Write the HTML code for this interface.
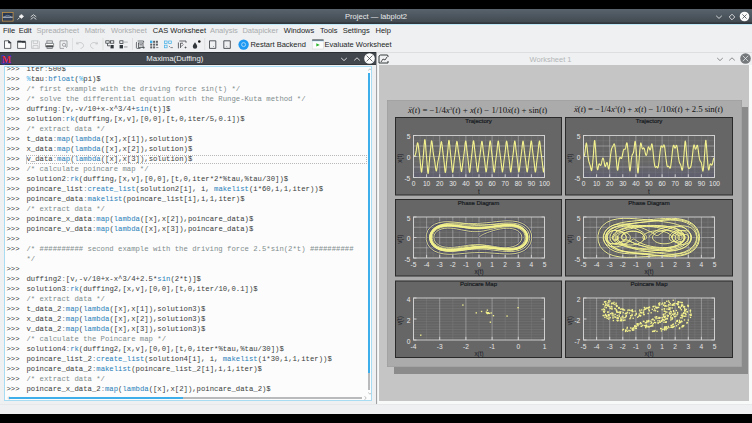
<!DOCTYPE html>
<html><head><meta charset="utf-8"><style>
*{margin:0;padding:0;box-sizing:border-box}
html,body{width:752px;height:423px;overflow:hidden;background:#000;font-family:"Liberation Sans",sans-serif}
.abs{position:absolute}
#title{position:absolute;left:0;top:9px;width:752px;height:15px;background:linear-gradient(#58636c,#434b52 85%,#30363b 93%,#30363b)}
#title .t{position:absolute;left:0;width:752px;top:3.3px;text-align:center;color:#e8eaeb;font-size:7.6px;line-height:10px;padding-left:0}
#blue{position:absolute;left:0;top:24px;width:752px;height:1px;background:#bde9f8}
#menu{position:absolute;left:0;top:25px;width:752px;height:379px;background:#eff0f1}
.mi{position:absolute;top:26px;font-size:7.5px;line-height:9px;color:#232627;white-space:nowrap}
.mi.d{color:#a8acae}
.tb{position:absolute;top:39px;width:10px;height:11px}
.sep{position:absolute;top:38px;width:1px;height:12px;background:#d4d6d8}
#lhead{position:absolute;left:0;top:52px;width:376px;height:13px;background:#41474d;border-top:1px solid #2b3035;border-bottom:1px solid #33383d}
#lhead .t{position:absolute;left:146.3px;top:1.2px;color:#eceef0;font-size:7.8px;line-height:9px}
#code{position:absolute;left:4px;top:66px;width:367.5px;height:334.5px;background:#fcfcfc;border:1px solid #a8dcf2;overflow:hidden}
.ln{position:absolute;font-family:"Liberation Mono",monospace;font-size:7.27px;line-height:10px;white-space:pre;color:#3a3d40}
.pr{left:1.5px}
.cd{left:21.5px}
.cm{color:#7f8c8d}
.fn{color:#2980b9}
.pc{color:#3daee9}
.op{color:#8a9095}
#rhead{position:absolute;left:377px;top:52px;width:375px;height:13px;background:#eff0f1;border-top:1px solid #dcdee0}
#rhead .t{position:absolute;left:-14px;width:375px;top:1.5px;text-align:center;color:#b4b7b9;font-size:7.5px;line-height:9px}
#canvas{position:absolute;left:379px;top:65px;width:370.3px;height:336px;background:#c5c5c5}
#split{position:absolute;left:376px;top:52px;width:1px;height:352px;background:#a0a2a4}
#page{position:absolute;left:387px;top:100px;width:354.5px;height:267px;background:#ababab;box-shadow:inset 0 0 0 0.5px #9c9c9c}
#shadow1{position:absolute;left:741px;top:107px;width:7px;height:266.8px;background:#8b8b8b}
#shadow2{position:absolute;left:393.7px;top:366px;width:354.3px;height:7.8px;background:#8b8b8b}
#status{position:absolute;left:0;top:404px;width:752px;height:10px;background:#eff0f1;border-top:1px solid #e6e8ea}
#rframe{position:absolute;left:377.5px;top:65px;width:374.5px;height:339px;background:#f8f9f9}
.pt{font-family:"Liberation Sans",sans-serif;font-size:6px;fill:#181c22;stroke:#181c22;stroke-width:0.22px}
.tk{font-family:"Liberation Sans",sans-serif;font-size:6.6px;fill:#e8e8e8}
.at{font-family:"Liberation Sans",sans-serif;font-size:6.4px;fill:#1c2026}
.fx{position:absolute;font-family:"Liberation Serif",serif;font-size:8.8px;line-height:10px;color:#141414;white-space:nowrap;-webkit-text-stroke:0px #222}
.fx sup{font-size:5px;vertical-align:0;position:relative;top:-3px}
.fx i{font-weight:normal}

</style></head><body>
<div id="title">
 <svg class="abs" style="left:2px;top:3px" width="11.5" height="9.5" viewBox="0 0 11.5 9.5"><rect x="0.4" y="0.4" width="10.7" height="8.7" fill="#2a3850" stroke="#c4934a" stroke-width="0.8"/><path d="M2.2 5 Q5.75 1.6 9.3 5" fill="none" stroke="#8fa4bd" stroke-width="0.6"/><line x1="0.8" y1="5.2" x2="10.7" y2="5.2" stroke="#dfe8f0" stroke-width="0.9"/><line x1="2" y1="7" x2="9.5" y2="7" stroke="#56667a" stroke-width="0.5"/></svg>
 <svg class="abs" style="left:17px;top:4.5px" width="7" height="6" viewBox="0 0 7 6"><path d="M0.6 5.6 L2.6 3.6" stroke="#f4f4f4" stroke-width="0.8"/><path d="M2 2.4 L4.4 0.4 L6.6 2.2 L4.6 4.4 Z" fill="#f4f4f4" stroke="#f4f4f4" stroke-width="0.6"/></svg>
 <svg class="abs" style="left:29.5px;top:4.5px" width="7" height="6" viewBox="0 0 7 6"><path d="M0.7 2.9 L3.5 0.7 L6.3 2.9 M0.7 5.4 L3.5 3.2 L6.3 5.4" stroke="#f0f0f0" stroke-width="0.8" fill="none"/></svg>
 <div class="t">Project — labplot2</div>
 <svg class="abs" style="left:715px;top:3.5px" width="8" height="8" viewBox="0 0 8 8"><path d="M1.2 2.8 L4 5.4 L6.8 2.8" stroke="#f4f4f4" stroke-width="0.8" fill="none"/></svg>
 <svg class="abs" style="left:728px;top:3.5px" width="8" height="8" viewBox="0 0 8 8"><path d="M4 1.2 L6.8 4 L4 6.8 L1.2 4 Z" stroke="#f4f4f4" stroke-width="0.8" fill="none"/></svg>
 <svg class="abs" style="left:739px;top:2px" width="11" height="11" viewBox="0 0 11 11"><circle cx="5.5" cy="5.5" r="4.8" fill="#fcfcfc"/><path d="M3.4 3.4 L7.6 7.6 M7.6 3.4 L3.4 7.6" stroke="#3b4248" stroke-width="0.75"/></svg>
</div>
<div id="blue"></div>
<div id="menu"></div>
<div class="mi" style="left:3px">File</div>
<div class="mi" style="left:18.7px">Edit</div>
<div class="mi d" style="left:36.6px">Spreadsheet</div>
<div class="mi d" style="left:84.7px">Matrix</div>
<div class="mi d" style="left:111px">Worksheet</div>
<div class="mi" style="left:152.8px">CAS Worksheet</div>
<div class="mi d" style="left:209.9px">Analysis</div>
<div class="mi d" style="left:242.4px">Datapicker</div>
<div class="mi" style="left:283.8px">Windows</div>
<div class="mi" style="left:320px">Tools</div>
<div class="mi" style="left:342.7px">Settings</div>
<div class="mi" style="left:375.5px">Help</div>
<svg class="abs" style="left:0;top:36px" width="400" height="16" viewBox="0 36 400 16">
 <g fill="none" stroke="#31363b" stroke-width="0.75">
  <!-- new doc -->
  <path d="M4.5 40.8 H9 L10.8 42.6 V48.4 H4.5 Z" fill="#fcfcfc"/>
  <path d="M8.6 40.8 L10.8 43 H8.6 Z" fill="#31363b"/>
  <!-- folder -->
  <path d="M17.6 41.2 H21 L22 42.2 H25.6 V48.4 H17.6 Z" fill="#fcfcfc"/>
  <rect x="17.6" y="40.8" width="8" height="1.8" fill="#31363b" stroke="none"/>
  <!-- save gray -->
  <g stroke="#bdc0c2"><path d="M31.5 40.8 H38.4 L39.4 41.8 V48.4 H31.5 Z"/><path d="M33.3 40.8 V43.6 H37.5 V40.8 M33 48.4 V45.6 H38 V48.4"/></g>
  <!-- print -->
  <rect x="46.9" y="40.9" width="5.4" height="2.3" stroke="#6a6e72"/>
  <path d="M45.6 43.4 H53.6 V46.8 H45.6 Z" fill="#fcfcfc" stroke="#6a6e72"/>
  <rect x="46.2" y="45.4" width="6.8" height="1.5" fill="#232627" stroke="none"/>
  <rect x="47" y="46.9" width="5.3" height="1.5" stroke="#6a6e72"/>
  <!-- print preview gray -->
  <g stroke="#8a8e91"><path d="M60 40.8 H67 V47 M60 40.8 V48.4 H64"/><circle cx="64" cy="44.8" r="1.6"/><path d="M65.2 46 L66.8 47.8"/></g>
  <!-- undo / redo gray -->
  <g stroke="#bdc0c2"><path d="M77 41.8 L76.6 44 L78.8 43.8 M76.8 43.8 C79 41.5 83.5 42.5 83.5 45.5 C83.5 47.2 82 48.4 80.5 48.4"/>
  <path d="M97 41.8 L97.4 44 L95.2 43.8 M97.2 43.8 C95 41.5 90.5 42.5 90.5 45.5 C90.5 47.2 92 48.4 93.5 48.4"/></g>
  <!-- 8 -->
  <rect x="105.8" y="40.8" width="3.4" height="2.4"/><rect x="110.4" y="40.8" width="3.4" height="2.4"/>
  <path d="M107.5 43.4 V45.8 H110"/>
  <rect x="110.5" y="45" width="3.2" height="3.4" fill="#31363b" stroke="none"/>
  <!-- 9 -->
  <rect x="119.8" y="40.8" width="3.2" height="2.6"/><path d="M123.5 42.1 H127.8" stroke="#bdc0c2" stroke-width="1.2"/>
  <rect x="119.6" y="45" width="3.4" height="3.4" fill="#31363b" stroke="none"/><rect x="124" y="46" width="3.5" height="1.8" fill="#bdc0c2" stroke="none"/>
  <!-- 10 -->
  <path d="M137.6 41 H143.6 V42.6 M137 42 Q136.4 42.2 136.4 43 V47.6 Q136.4 48.4 137.2 48.4 H140.5" stroke-width="0.7"/>
  <rect x="138.6" y="43" width="4.4" height="4.4" stroke-width="0.7"/><path d="M139.4 44.5 H142.2 M139.4 45.9 H142.2" stroke-width="0.5"/>
  <path d="M142.6 47.6 H144.8 M143.7 46.5 V48.7" stroke-width="0.6"/>
  <!-- 11 -->
  <rect x="150" y="40.6" width="2.4" height="2.4" fill="#3daee9" stroke="none"/>
  <g fill="#5d6165" stroke="none"><rect x="153.1" y="40.8" width="2" height="2"/><rect x="155.9" y="40.8" width="2" height="2"/><rect x="150.2" y="43.6" width="2" height="2"/><rect x="153.1" y="43.6" width="2" height="2"/><rect x="155.9" y="43.6" width="2" height="2"/><rect x="150.2" y="46.4" width="2" height="2"/><rect x="153.1" y="46.4" width="2" height="2"/></g>
  <path d="M156.2 47.6 H158.4" stroke-width="0.6"/>
  <!-- 12 blue -->
  <g stroke="#3daee9" stroke-width="0.7"><rect x="164.5" y="41" width="2.6" height="2.6"/><rect x="168.7" y="41" width="2.6" height="2.6"/><rect x="164.5" y="45.2" width="2.6" height="2.6"/></g>
  <path d="M169.2 46.2 L170.2 47.2 M170.6 47.6 H172.8" stroke-width="0.6"/>
  <!-- 13 -->
  <path d="M178.4 42.5 V48.4 M179.4 41 H186 V42.8" /><path d="M180.5 48 V43.2 H183" /><path d="M181 46.5 L183.5 44.5" stroke-width="0.6"/><path d="M184.5 47.5 H186.6 M185.5 46.5 V48.5" stroke-width="0.6"/>
  <!-- 14 drop -->
  <path d="M195 42.3 C193.5 44.5 192.8 45.5 192.8 46.5 A2.2 2.2 0 0 0 197.2 46.5 C197.2 45.5 196.5 44.5 195 42.3 Z" fill="#31363b" stroke="none"/>
  <circle cx="199.3" cy="41.5" r="1.3" fill="#111" stroke="none"/>
  <!-- 15 16 -->
  <path d="M209.5 40.8 H215.8 V48.4 H209.5 Z" stroke-width="0.8"/><path d="M213 47 L213.8 46.2" stroke-width="0.5"/>
  <path d="M223.8 40.8 H230.3 V48.4 H223.8 Z" stroke-width="0.8"/><path d="M226.5 46.4 L227.3 47.2" stroke-width="0.5"/>
 </g>
 <!-- separators -->
 <g fill="#d9dbdd"><rect x="72" y="38" width="0.8" height="12"/><rect x="102.6" y="38" width="0.8" height="12"/><rect x="132.1" y="38" width="0.8" height="12"/><rect x="204.4" y="38" width="0.8" height="12"/></g>
 <!-- restart -->
 <circle cx="243.6" cy="44.6" r="5.2" fill="#1d99f3"/><circle cx="243.6" cy="44.6" r="2" fill="none" stroke="#d8ecfb" stroke-width="0.7"/>
 <!-- evaluate -->
 <rect x="312.2" y="40.5" width="11.4" height="8.5" fill="#fcfcfc" stroke="#d0d2d4" stroke-width="0.5"/>
 <rect x="312.2" y="39.5" width="11.4" height="1.2" fill="#232a31"/>
 <rect x="312.2" y="40.7" width="11.4" height="0.6" fill="#9fd6f0"/>
 <path d="M316.3 43.2 L319.8 44.9 L316.3 46.6 Z" fill="#2cb52c"/>
</svg>
<div class="mi" style="top:39.8px;left:250.4px">Restart Backend</div>
<div class="mi" style="top:39.8px;left:324.6px">Evaluate Worksheet</div>

<div id="lhead">
 <svg class="abs" style="left:1px;top:1px" width="11" height="11" viewBox="0 0 11 11"><text x="5.6" y="9" text-anchor="middle" font-family="Liberation Serif" font-weight="bold" font-size="10" fill="#e2332b" stroke="#2b2bd0" stroke-width="0.9" paint-order="stroke">M</text><path d="M1 2 L2.5 1.5 M9 1.8 L10.2 2.5 M1.5 9.8 L3.8 10.3" stroke="#3a3ae0" stroke-width="0.8"/></svg>
 <div class="t">Maxima(Duffing)</div>
 <svg class="abs" style="left:340px;top:2px" width="8" height="8" viewBox="0 0 8 8"><path d="M1.2 3 L4 5.6 L6.8 3" stroke="#f0f0f0" stroke-width="0.85" fill="none"/></svg>
 <svg class="abs" style="left:352.5px;top:2px" width="8" height="8" viewBox="0 0 8 8"><path d="M1.2 5.4 L4 2.8 L6.8 5.4" stroke="#f0f0f0" stroke-width="0.85" fill="none"/></svg>
 <svg class="abs" style="left:363.7px;top:0.4px" width="11" height="11" viewBox="0 0 11 11"><circle cx="5.5" cy="5.5" r="5.3" fill="#fcfcfc"/><path d="M2.6 2.6 L8.4 8.4 M8.4 2.6 L2.6 8.4" stroke="#31363b" stroke-width="0.7"/></svg>
</div>
<div id="code">
<div class="ln pr" style="top:-2.7px">&gt;&gt;&gt;</div><div class="ln cd" style="top:-2.7px">iter<span class="op">:</span>500$</div><div class="ln pr" style="top:7.3px">&gt;&gt;&gt;</div><div class="ln cd" style="top:7.3px"><span class="pc">%</span>tau<span class="op">:</span><span class="fn">bfloat</span>(<span class="pc">%</span>pi)$</div><div class="ln pr" style="top:17.3px">&gt;&gt;&gt;</div><div class="ln cd" style="top:17.3px"><span class="cm">/* first example with the driving force sin(t) */</span></div><div class="ln pr" style="top:27.3px">&gt;&gt;&gt;</div><div class="ln cd" style="top:27.3px"><span class="cm">/* solve the differential equation with the Runge-Kuta method */</span></div><div class="ln pr" style="top:37.3px">&gt;&gt;&gt;</div><div class="ln cd" style="top:37.3px">duffing<span class="op">:</span>[v,-v/10+x-x^3/4+<span class="fn">sin</span>(t)]$</div><div class="ln pr" style="top:47.3px">&gt;&gt;&gt;</div><div class="ln cd" style="top:47.3px">solution<span class="op">:</span><span class="fn">rk</span>(duffing,[x,v],[0,0],[t,0,iter/5,0.1])$</div><div class="ln pr" style="top:57.3px">&gt;&gt;&gt;</div><div class="ln cd" style="top:57.3px"><span class="cm">/* extract data */</span></div><div class="ln pr" style="top:67.3px">&gt;&gt;&gt;</div><div class="ln cd" style="top:67.3px">t_data<span class="op">:</span><span class="fn">map</span>(<span class="fn">lambda</span>([x],x[1]),solution)$</div><div class="ln pr" style="top:77.3px">&gt;&gt;&gt;</div><div class="ln cd" style="top:77.3px">x_data<span class="op">:</span><span class="fn">map</span>(<span class="fn">lambda</span>([x],x[2]),solution)$</div><div class="ln pr" style="top:87.3px">&gt;&gt;&gt;</div><div class="ln cd" style="top:87.3px">v_data<span class="op">:</span><span class="fn">map</span>(<span class="fn">lambda</span>([x],x[3]),solution)$</div><div class="ln pr" style="top:97.3px">&gt;&gt;&gt;</div><div class="ln cd" style="top:97.3px"><span class="cm">/* calculate poincare map */</span></div><div class="ln pr" style="top:107.3px">&gt;&gt;&gt;</div><div class="ln cd" style="top:107.3px">solution2<span class="op">:</span><span class="fn">rk</span>(duffing,[x,v],[0,0],[t,0,iter*2*%tau,%tau/30])$</div><div class="ln pr" style="top:117.3px">&gt;&gt;&gt;</div><div class="ln cd" style="top:117.3px">poincare_list<span class="op">:</span><span class="fn">create_list</span>(solution2[i], i, <span class="fn">makelist</span>(i*60,i,1,iter))$</div><div class="ln pr" style="top:127.3px">&gt;&gt;&gt;</div><div class="ln cd" style="top:127.3px">poincare_data<span class="op">:</span><span class="fn">makelist</span>(poincare_list[i],i,1,iter)$</div><div class="ln pr" style="top:137.3px">&gt;&gt;&gt;</div><div class="ln cd" style="top:137.3px"><span class="cm">/* extract data */</span></div><div class="ln pr" style="top:147.3px">&gt;&gt;&gt;</div><div class="ln cd" style="top:147.3px">poincare_x_data<span class="op">:</span><span class="fn">map</span>(<span class="fn">lambda</span>([x],x[2]),poincare_data)$</div><div class="ln pr" style="top:157.3px">&gt;&gt;&gt;</div><div class="ln cd" style="top:157.3px">poincare_v_data<span class="op">:</span><span class="fn">map</span>(<span class="fn">lambda</span>([x],x[3]),poincare_data)$</div><div class="ln pr" style="top:167.3px">&gt;&gt;&gt;</div><div class="ln cd" style="top:167.3px"></div><div class="ln pr" style="top:177.3px">&gt;&gt;&gt;</div><div class="ln cd" style="top:177.3px"><span class="cm">/* ########## second example with the driving force 2.5*sin(2*t) ##########</span></div><div class="ln cd" style="top:187.3px"><span class="cm">*/</span></div><div class="ln pr" style="top:197.3px">&gt;&gt;&gt;</div><div class="ln cd" style="top:197.3px"></div><div class="ln pr" style="top:207.3px">&gt;&gt;&gt;</div><div class="ln cd" style="top:207.3px">duffing2<span class="op">:</span>[v,-v/10+x-x^3/4+2.5*<span class="fn">sin</span>(2*t)]$</div><div class="ln pr" style="top:217.3px">&gt;&gt;&gt;</div><div class="ln cd" style="top:217.3px">solution3<span class="op">:</span><span class="fn">rk</span>(duffing2,[x,v],[0,0],[t,0,iter/10,0.1])$</div><div class="ln pr" style="top:227.3px">&gt;&gt;&gt;</div><div class="ln cd" style="top:227.3px"><span class="cm">/* extract data */</span></div><div class="ln pr" style="top:237.3px">&gt;&gt;&gt;</div><div class="ln cd" style="top:237.3px">t_data_2<span class="op">:</span><span class="fn">map</span>(<span class="fn">lambda</span>([x],x[1]),solution3)$</div><div class="ln pr" style="top:247.3px">&gt;&gt;&gt;</div><div class="ln cd" style="top:247.3px">x_data_2<span class="op">:</span><span class="fn">map</span>(<span class="fn">lambda</span>([x],x[2]),solution3)$</div><div class="ln pr" style="top:257.3px">&gt;&gt;&gt;</div><div class="ln cd" style="top:257.3px">v_data_2<span class="op">:</span><span class="fn">map</span>(<span class="fn">lambda</span>([x],x[3]),solution3)$</div><div class="ln pr" style="top:267.3px">&gt;&gt;&gt;</div><div class="ln cd" style="top:267.3px"><span class="cm">/* calculate the Poincare map */</span></div><div class="ln pr" style="top:277.3px">&gt;&gt;&gt;</div><div class="ln cd" style="top:277.3px">solution4<span class="op">:</span><span class="fn">rk</span>(duffing2,[x,v],[0,0],[t,0,iter*%tau,%tau/30])$</div><div class="ln pr" style="top:287.3px">&gt;&gt;&gt;</div><div class="ln cd" style="top:287.3px">poincare_list_2<span class="op">:</span><span class="fn">create_list</span>(solution4[i], i, <span class="fn">makelist</span>(i*30,i,1,iter))$</div><div class="ln pr" style="top:297.3px">&gt;&gt;&gt;</div><div class="ln cd" style="top:297.3px">poincare_data_2<span class="op">:</span><span class="fn">makelist</span>(poincare_list_2[i],i,1,iter)$</div><div class="ln pr" style="top:307.3px">&gt;&gt;&gt;</div><div class="ln cd" style="top:307.3px"><span class="cm">/* extract data */</span></div><div class="ln pr" style="top:317.3px">&gt;&gt;&gt;</div><div class="ln cd" style="top:317.3px">poincare_x_data_2<span class="op">:</span><span class="fn">map</span>(<span class="fn">lambda</span>([x],x[2]),poincare_data_2)$</div>
<div class="abs" style="left:20.5px;top:88px;width:341px;height:9px;border:1px dotted #b8b8b8;border-left:1px solid #c8c8c8"></div>
<div class="abs" style="left:363.3px;top:6px;width:2px;height:299.5px;background:#3daee9"></div>
<div class="abs" style="left:363.3px;top:305.5px;width:2px;height:17.5px;background:#b8babc"></div>
<svg class="abs" style="left:361.5px;top:0px" width="6" height="5" viewBox="0 0 6 5"><path d="M1.2 3.4 L3 1.8 L4.8 3.4" stroke="#a0a2a4" stroke-width="0.7" fill="none"/></svg>
<svg class="abs" style="left:361.5px;top:324px" width="6" height="5" viewBox="0 0 6 5"><path d="M1.2 1.6 L3 3.2 L4.8 1.6" stroke="#a0a2a4" stroke-width="0.7" fill="none"/></svg>
<div class="abs" style="left:3.75px;top:329.5px;width:174px;height:2px;background:#3daee9"></div>
<div class="abs" style="left:177.75px;top:329.5px;width:179px;height:2px;background:#b8babc"></div>
<svg class="abs" style="left:358px;top:327.5px" width="5" height="6" viewBox="0 0 5 6"><path d="M1.6 1.2 L3.2 3 L1.6 4.8" stroke="#a0a2a4" stroke-width="0.7" fill="none"/></svg>
<svg class="abs" style="left:0.5px;top:327.5px" width="5" height="6" viewBox="0 0 5 6"><path d="M3.4 1.2 L1.8 3 L3.4 4.8" stroke="#c0c2c4" stroke-width="0.7" fill="none"/></svg>
</div>
<div id="rhead">
 <svg class="abs" style="left:1px;top:1px" width="11" height="10" viewBox="0 0 11 10"><path d="M1 9 V2 L2.5 1 H9.5 L10 2 V3 M1 9 H10 V7" stroke="#232627" stroke-width="0.9" fill="none"/><path d="M3 8 L5 5 L7 6 L9 3" stroke="#232627" stroke-width="0.8" fill="none"/></svg>
 <div class="t">Worksheet 1</div>
 <svg class="abs" style="left:338.5px;top:2px" width="8" height="8" viewBox="0 0 8 8"><path d="M1.2 3 L4 5.6 L6.8 3" stroke="#6e7275" stroke-width="0.8" fill="none"/></svg>
 <svg class="abs" style="left:351px;top:2px" width="8" height="8" viewBox="0 0 8 8"><path d="M1.2 5.4 L4 2.8 L6.8 5.4" stroke="#6e7275" stroke-width="0.8" fill="none"/></svg>
 <svg class="abs" style="left:362.5px;top:0.4px" width="11" height="11" viewBox="0 0 11 11"><circle cx="5.5" cy="5.5" r="5.3" fill="#76797c"/><path d="M2.8 2.8 L8.2 8.2 M8.2 2.8 L2.8 8.2" stroke="#f4f4f4" stroke-width="0.7"/></svg>
</div>
<div id="split"></div>
<div id="rframe"></div>
<div id="canvas"></div>
<div id="shadow1"></div>
<div id="shadow2"></div>
<div id="page"></div>
<div class="fx" id="fx1" style="left:408px;top:105.3px"><i>ẍ</i>(<i>t</i>) = −1/4<i>x</i><sup>3</sup>(<i>t</i>) + <i>x</i>(<i>t</i>) − 1/10<i>ẋ</i>(<i>t</i>) + sin(<i>t</i>)</div>
<div class="fx" id="fx2" style="left:574px;top:104.3px;letter-spacing:-0.08px"><i>ẍ</i>(<i>t</i>) = −1/4<i>x</i><sup>3</sup>(<i>t</i>) + <i>x</i>(<i>t</i>) − 1/10<i>ẋ</i>(<i>t</i>) + 2.5 sin(<i>t</i>)</div>
<svg class="abs" style="left:0;top:0" width="752" height="423" viewBox="0 0 752 423"><defs><clipPath id="c0"><rect x="413.5" y="135.5" width="131.0" height="42.0"/></clipPath><clipPath id="c1"><rect x="413.5" y="217.0" width="131.0" height="41.0"/></clipPath><clipPath id="c2"><rect x="413.5" y="298.0" width="131.0" height="42.0"/></clipPath><clipPath id="c3"><rect x="583.5" y="135.5" width="131.0" height="42.0"/></clipPath><clipPath id="c4"><rect x="583.5" y="217.0" width="131.0" height="41.0"/></clipPath><clipPath id="c5"><rect x="583.5" y="298.0" width="131.0" height="42.0"/></clipPath><linearGradient id="tg" x1="0" y1="135.5" x2="0" y2="177.5" gradientUnits="userSpaceOnUse"><stop offset="0" stop-color="#e8e890" stop-opacity="0.2"/><stop offset="0.5" stop-color="#a0a070" stop-opacity="0.1"/><stop offset="1" stop-color="#3c3cb4" stop-opacity="0.15"/></linearGradient></defs><rect x="395.5" y="117.5" width="166.0" height="77.5" fill="#666666" stroke="#2a2a2a" stroke-width="1"/><text x="478.5" y="122.8" class="pt" text-anchor="middle">Trajectory</text><rect x="395.5" y="199.5" width="166.0" height="76.5" fill="#666666" stroke="#2a2a2a" stroke-width="1"/><text x="478.5" y="204.8" class="pt" text-anchor="middle">Phase Diagram</text><rect x="395.5" y="281.0" width="166.0" height="76.5" fill="#666666" stroke="#2a2a2a" stroke-width="1"/><text x="478.5" y="286.3" class="pt" text-anchor="middle">Poincare Map</text><rect x="565.5" y="117.5" width="167.0" height="77.5" fill="#666666" stroke="#2a2a2a" stroke-width="1"/><text x="649.0" y="122.8" class="pt" text-anchor="middle">Trajectory</text><rect x="565.5" y="199.5" width="167.0" height="76.5" fill="#666666" stroke="#2a2a2a" stroke-width="1"/><text x="649.0" y="204.8" class="pt" text-anchor="middle">Phase Diagram</text><rect x="565.5" y="281.0" width="167.0" height="76.5" fill="#666666" stroke="#2a2a2a" stroke-width="1"/><text x="649.0" y="286.3" class="pt" text-anchor="middle">Poincare Map</text><rect x="413.5" y="135.5" width="131.0" height="42.0" fill="#646464"/><line x1="420.05" y1="135.50" x2="420.05" y2="177.50" stroke="#7b7b7b" stroke-width="0.50"/><line x1="426.60" y1="135.50" x2="426.60" y2="177.50" stroke="#7b7b7b" stroke-width="0.50"/><line x1="433.15" y1="135.50" x2="433.15" y2="177.50" stroke="#7b7b7b" stroke-width="0.50"/><line x1="446.25" y1="135.50" x2="446.25" y2="177.50" stroke="#7b7b7b" stroke-width="0.50"/><line x1="452.80" y1="135.50" x2="452.80" y2="177.50" stroke="#7b7b7b" stroke-width="0.50"/><line x1="459.35" y1="135.50" x2="459.35" y2="177.50" stroke="#7b7b7b" stroke-width="0.50"/><line x1="472.45" y1="135.50" x2="472.45" y2="177.50" stroke="#7b7b7b" stroke-width="0.50"/><line x1="479.00" y1="135.50" x2="479.00" y2="177.50" stroke="#7b7b7b" stroke-width="0.50"/><line x1="485.55" y1="135.50" x2="485.55" y2="177.50" stroke="#7b7b7b" stroke-width="0.50"/><line x1="498.65" y1="135.50" x2="498.65" y2="177.50" stroke="#7b7b7b" stroke-width="0.50"/><line x1="505.20" y1="135.50" x2="505.20" y2="177.50" stroke="#7b7b7b" stroke-width="0.50"/><line x1="511.75" y1="135.50" x2="511.75" y2="177.50" stroke="#7b7b7b" stroke-width="0.50"/><line x1="524.85" y1="135.50" x2="524.85" y2="177.50" stroke="#7b7b7b" stroke-width="0.50"/><line x1="531.40" y1="135.50" x2="531.40" y2="177.50" stroke="#7b7b7b" stroke-width="0.50"/><line x1="537.95" y1="135.50" x2="537.95" y2="177.50" stroke="#7b7b7b" stroke-width="0.50"/><line x1="413.50" y1="172.25" x2="544.50" y2="172.25" stroke="#7b7b7b" stroke-width="0.50"/><line x1="413.50" y1="161.75" x2="544.50" y2="161.75" stroke="#7b7b7b" stroke-width="0.50"/><line x1="413.50" y1="151.25" x2="544.50" y2="151.25" stroke="#7b7b7b" stroke-width="0.50"/><line x1="413.50" y1="140.75" x2="544.50" y2="140.75" stroke="#7b7b7b" stroke-width="0.50"/><line x1="413.50" y1="135.50" x2="413.50" y2="177.50" stroke="#b4b4b4" stroke-width="0.60"/><line x1="439.70" y1="135.50" x2="439.70" y2="177.50" stroke="#b4b4b4" stroke-width="0.60"/><line x1="465.90" y1="135.50" x2="465.90" y2="177.50" stroke="#b4b4b4" stroke-width="0.60"/><line x1="492.10" y1="135.50" x2="492.10" y2="177.50" stroke="#b4b4b4" stroke-width="0.60"/><line x1="518.30" y1="135.50" x2="518.30" y2="177.50" stroke="#b4b4b4" stroke-width="0.60"/><line x1="544.50" y1="135.50" x2="544.50" y2="177.50" stroke="#b4b4b4" stroke-width="0.60"/><line x1="413.50" y1="156.50" x2="544.50" y2="156.50" stroke="#b4b4b4" stroke-width="0.60"/><line x1="413.50" y1="167.00" x2="544.50" y2="167.00" stroke="#b4b4b4" stroke-width="0.60"/><line x1="413.50" y1="146.00" x2="544.50" y2="146.00" stroke="#b4b4b4" stroke-width="0.60"/><g clip-path="url(#c0)"><polygon points="413.5,156.5 413.6,156.5 413.8,156.5 413.9,156.5 414.0,156.5 414.2,156.4 414.3,156.4 414.4,156.3 414.5,156.1 414.7,156.0 414.8,155.8 414.9,155.6 415.1,155.3 415.2,155.0 415.3,154.6 415.5,154.2 415.6,153.7 415.7,153.2 415.9,152.6 416.0,151.9 416.1,151.2 416.3,150.4 416.4,149.5 416.5,148.6 416.6,147.7 416.8,146.8 416.9,145.8 417.0,145.0 417.2,144.2 417.3,143.5 417.4,143.1 417.6,142.8 417.7,142.8 417.8,143.0 418.0,143.4 418.1,144.0 418.2,144.7 418.3,145.6 418.5,146.6 418.6,147.6 418.7,148.7 418.9,149.8 419.0,150.8 419.1,151.9 419.3,153.0 419.4,154.0 419.5,155.1 419.7,156.2 419.8,157.3 419.9,158.4 420.1,159.6 420.2,160.9 420.3,162.2 420.4,163.6 420.6,165.0 420.7,166.4 420.8,167.8 421.0,169.1 421.1,170.3 421.2,171.2 421.4,171.9 421.5,172.2 421.6,172.1 421.8,171.6 421.9,170.8 422.0,169.8 422.1,168.5 422.3,167.1 422.4,165.7 422.5,164.2 422.7,162.7 422.8,161.3 422.9,159.8 423.1,158.4 423.2,157.0 423.3,155.5 423.5,154.0 423.6,152.5 423.7,150.9 423.8,149.2 424.0,147.5 424.1,145.8 424.2,144.1 424.4,142.6 424.5,141.3 424.6,140.3 424.8,139.7 424.9,139.6 425.0,140.0 425.2,140.8 425.3,141.9 425.4,143.4 425.6,145.0 425.7,146.6 425.8,148.3 425.9,150.0 426.1,151.6 426.2,153.2 426.3,154.8 426.5,156.3 426.6,157.9 426.7,159.4 426.9,161.0 427.0,162.7 427.1,164.4 427.3,166.1 427.4,167.8 427.5,169.4 427.6,170.9 427.8,172.1 427.9,173.0 428.0,173.4 428.2,173.4 428.3,172.9 428.4,172.0 428.6,170.8 428.7,169.3 428.8,167.7 429.0,166.1 429.1,164.5 429.2,162.9 429.4,161.5 429.5,160.0 429.6,158.7 429.7,157.3 429.9,156.0 430.0,154.7 430.1,153.5 430.3,152.1 430.4,150.8 430.5,149.4 430.7,148.0 430.8,146.7 430.9,145.3 431.1,144.0 431.2,142.8 431.3,141.9 431.4,141.2 431.6,140.8 431.7,140.8 431.8,141.1 432.0,141.8 432.1,142.7 432.2,143.7 432.4,144.9 432.5,146.2 432.6,147.4 432.8,148.7 432.9,149.8 433.0,150.9 433.1,151.9 433.3,152.9 433.4,153.8 433.5,154.6 433.7,155.4 433.8,156.2 433.9,156.9 434.1,157.6 434.2,158.4 434.3,159.1 434.5,159.9 434.6,160.7 434.7,161.5 434.9,162.4 435.0,163.4 435.1,164.3 435.2,165.3 435.4,166.4 435.5,167.4 435.6,168.3 435.8,169.2 435.9,169.9 436.0,170.5 436.2,170.8 436.3,171.0 436.4,170.9 436.6,170.5 436.7,170.0 436.8,169.2 436.9,168.4 437.1,167.5 437.2,166.5 437.3,165.6 437.5,164.6 437.6,163.7 437.7,162.9 437.9,162.1 438.0,161.3 438.1,160.6 438.3,159.9 438.4,159.3 438.5,158.7 438.7,158.1 438.8,157.5 438.9,156.9 439.0,156.3 439.2,155.6 439.3,155.0 439.4,154.3 439.6,153.5 439.7,152.7 439.8,151.9 440.0,150.9 440.1,150.0 440.2,148.9 440.4,147.8 440.5,146.7 440.6,145.6 440.7,144.5 440.9,143.6 441.0,142.8 441.1,142.1 441.3,141.8 441.4,141.7 441.5,141.9 441.7,142.3 441.8,143.0 441.9,143.9 442.1,144.9 442.2,146.0 442.3,147.2 442.5,148.3 442.6,149.5 442.7,150.6 442.8,151.7 443.0,152.8 443.1,153.8 443.2,154.9 443.4,155.9 443.5,157.0 443.6,158.1 443.8,159.2 443.9,160.3 444.0,161.6 444.2,162.9 444.3,164.2 444.4,165.6 444.5,167.0 444.7,168.4 444.8,169.6 444.9,170.7 445.1,171.6 445.2,172.2 445.3,172.4 445.5,172.2 445.6,171.7 445.7,170.9 445.9,169.8 446.0,168.5 446.1,167.2 446.2,165.8 446.4,164.4 446.5,163.0 446.6,161.7 446.8,160.4 446.9,159.1 447.0,157.9 447.2,156.6 447.3,155.4 447.4,154.1 447.6,152.8 447.7,151.4 447.8,150.0 448.0,148.6 448.1,147.1 448.2,145.6 448.3,144.2 448.5,142.8 448.6,141.7 448.7,140.9 448.9,140.4 449.0,140.3 449.1,140.6 449.3,141.2 449.4,142.2 449.5,143.4 449.7,144.8 449.8,146.2 449.9,147.6 450.0,149.0 450.2,150.4 450.3,151.7 450.4,153.0 450.6,154.2 450.7,155.4 450.8,156.6 451.0,157.8 451.1,159.0 451.2,160.2 451.4,161.4 451.5,162.7 451.6,164.1 451.8,165.5 451.9,166.8 452.0,168.2 452.1,169.4 452.3,170.6 452.4,171.4 452.5,172.0 452.7,172.3 452.8,172.2 452.9,171.8 453.1,171.0 453.2,170.0 453.3,168.9 453.5,167.6 453.6,166.4 453.7,165.1 453.8,163.8 454.0,162.6 454.1,161.5 454.2,160.4 454.4,159.4 454.5,158.4 454.6,157.5 454.8,156.5 454.9,155.6 455.0,154.7 455.2,153.7 455.3,152.8 455.4,151.8 455.6,150.7 455.7,149.6 455.8,148.4 455.9,147.3 456.1,146.1 456.2,145.0 456.3,143.9 456.5,142.9 456.6,142.2 456.7,141.7 456.9,141.4 457.0,141.5 457.1,141.8 457.3,142.4 457.4,143.2 457.5,144.1 457.6,145.2 457.8,146.3 457.9,147.4 458.0,148.5 458.2,149.6 458.3,150.6 458.4,151.5 458.6,152.4 458.7,153.3 458.8,154.1 459.0,154.9 459.1,155.6 459.2,156.4 459.4,157.2 459.5,157.9 459.6,158.8 459.7,159.6 459.9,160.5 460.0,161.5 460.1,162.5 460.3,163.5 460.4,164.6 460.5,165.8 460.7,166.9 460.8,168.0 460.9,169.1 461.1,170.0 461.2,170.8 461.3,171.3 461.4,171.5 461.6,171.5 461.7,171.1 461.8,170.5 462.0,169.7 462.1,168.8 462.2,167.7 462.4,166.6 462.5,165.4 462.6,164.3 462.8,163.2 462.9,162.1 463.0,161.1 463.1,160.1 463.3,159.2 463.4,158.2 463.5,157.3 463.7,156.4 463.8,155.4 463.9,154.5 464.1,153.5 464.2,152.4 464.3,151.3 464.5,150.1 464.6,148.9 464.7,147.6 464.9,146.3 465.0,145.1 465.1,143.9 465.2,142.8 465.4,141.9 465.5,141.3 465.6,141.0 465.8,141.1 465.9,141.4 466.0,142.1 466.2,143.0 466.3,144.0 466.4,145.2 466.6,146.5 466.7,147.8 466.8,149.0 466.9,150.3 467.1,151.4 467.2,152.6 467.3,153.7 467.5,154.8 467.6,155.9 467.7,156.9 467.9,158.0 468.0,159.1 468.1,160.3 468.3,161.5 468.4,162.8 468.5,164.1 468.7,165.4 468.8,166.8 468.9,168.1 469.0,169.4 469.2,170.5 469.3,171.4 469.4,172.0 469.6,172.3 469.7,172.2 469.8,171.8 470.0,171.0 470.1,170.0 470.2,168.9 470.4,167.6 470.5,166.3 470.6,164.9 470.7,163.6 470.9,162.4 471.0,161.2 471.1,160.0 471.3,158.9 471.4,157.8 471.5,156.7 471.7,155.7 471.8,154.6 471.9,153.5 472.1,152.3 472.2,151.1 472.3,149.8 472.4,148.5 472.6,147.2 472.7,145.9 472.8,144.6 473.0,143.4 473.1,142.3 473.2,141.5 473.4,141.0 473.5,140.8 473.6,141.0 473.8,141.5 473.9,142.2 474.0,143.2 474.2,144.4 474.3,145.6 474.4,146.9 474.5,148.2 474.7,149.4 474.8,150.6 474.9,151.7 475.1,152.8 475.2,153.8 475.3,154.8 475.5,155.8 475.6,156.8 475.7,157.7 475.9,158.7 476.0,159.7 476.1,160.8 476.2,161.9 476.4,163.1 476.5,164.3 476.6,165.5 476.8,166.7 476.9,168.0 477.0,169.1 477.2,170.1 477.3,171.0 477.4,171.5 477.6,171.8 477.7,171.8 477.8,171.5 478.0,170.9 478.1,170.0 478.2,169.0 478.3,167.9 478.5,166.7 478.6,165.5 478.7,164.3 478.9,163.2 479.0,162.1 479.1,161.1 479.3,160.1 479.4,159.2 479.5,158.3 479.7,157.4 479.8,156.5 479.9,155.6 480.0,154.7 480.2,153.8 480.3,152.8 480.4,151.8 480.6,150.7 480.7,149.6 480.8,148.4 481.0,147.2 481.1,146.0 481.2,144.8 481.4,143.7 481.5,142.8 481.6,142.0 481.8,141.5 481.9,141.3 482.0,141.4 482.1,141.7 482.3,142.4 482.4,143.2 482.5,144.3 482.7,145.4 482.8,146.6 482.9,147.7 483.1,148.9 483.2,150.0 483.3,151.1 483.5,152.1 483.6,153.1 483.7,154.1 483.8,155.0 484.0,155.9 484.1,156.9 484.2,157.8 484.4,158.7 484.5,159.7 484.6,160.8 484.8,161.9 484.9,163.0 485.0,164.3 485.2,165.5 485.3,166.8 485.4,168.0 485.6,169.1 485.7,170.2 485.8,171.0 485.9,171.6 486.1,171.9 486.2,171.9 486.3,171.5 486.5,170.9 486.6,170.0 486.7,168.9 486.9,167.8 487.0,166.5 487.1,165.3 487.3,164.1 487.4,162.9 487.5,161.8 487.6,160.7 487.8,159.6 487.9,158.6 488.0,157.6 488.2,156.6 488.3,155.6 488.4,154.6 488.6,153.5 488.7,152.4 488.8,151.2 489.0,150.0 489.1,148.8 489.2,147.5 489.3,146.2 489.5,144.9 489.6,143.7 489.7,142.6 489.9,141.8 490.0,141.2 490.1,140.9 490.3,141.0 490.4,141.4 490.5,142.1 490.7,143.0 490.8,144.1 490.9,145.3 491.1,146.6 491.2,147.9 491.3,149.1 491.4,150.3 491.6,151.5 491.7,152.6 491.8,153.7 492.0,154.7 492.1,155.8 492.2,156.8 492.4,157.8 492.5,158.9 492.6,159.9 492.8,161.1 492.9,162.2 493.0,163.5 493.1,164.8 493.3,166.1 493.4,167.4 493.5,168.6 493.7,169.8 493.8,170.7 493.9,171.5 494.1,172.0 494.2,172.1 494.3,171.9 494.5,171.4 494.6,170.6 494.7,169.6 494.9,168.4 495.0,167.2 495.1,165.9 495.2,164.7 495.4,163.4 495.5,162.3 495.6,161.2 495.8,160.1 495.9,159.0 496.0,158.0 496.2,157.1 496.3,156.1 496.4,155.1 496.6,154.1 496.7,153.0 496.8,152.0 496.9,150.8 497.1,149.6 497.2,148.4 497.3,147.1 497.5,145.9 497.6,144.6 497.7,143.5 497.9,142.5 498.0,141.7 498.1,141.2 498.3,141.1 498.4,141.2 498.5,141.6 498.6,142.3 498.8,143.3 498.9,144.4 499.0,145.6 499.2,146.8 499.3,148.0 499.4,149.2 499.6,150.3 499.7,151.4 499.8,152.5 500.0,153.5 500.1,154.4 500.2,155.4 500.4,156.3 500.5,157.2 500.6,158.2 500.7,159.2 500.9,160.2 501.0,161.3 501.1,162.4 501.3,163.5 501.4,164.7 501.5,166.0 501.7,167.2 501.8,168.4 501.9,169.5 502.1,170.5 502.2,171.2 502.3,171.7 502.4,171.9 502.6,171.7 502.7,171.3 502.8,170.5 503.0,169.6 503.1,168.5 503.2,167.4 503.4,166.2 503.5,165.0 503.6,163.8 503.8,162.6 503.9,161.6 504.0,160.5 504.2,159.5 504.3,158.6 504.4,157.6 504.5,156.7 504.7,155.7 504.8,154.8 504.9,153.8 505.1,152.8 505.2,151.7 505.3,150.6 505.5,149.4 505.6,148.1 505.7,146.9 505.9,145.6 506.0,144.4 506.1,143.3 506.2,142.4 506.4,141.7 506.5,141.2 506.6,141.1 506.8,141.3 506.9,141.8 507.0,142.5 507.2,143.5 507.3,144.6 507.4,145.8 507.6,147.0 507.7,148.3 507.8,149.4 508.0,150.6 508.1,151.7 508.2,152.8 508.3,153.8 508.5,154.8 508.6,155.7 508.7,156.7 508.9,157.7 509.0,158.7 509.1,159.7 509.3,160.8 509.4,162.0 509.5,163.2 509.7,164.4 509.8,165.7 509.9,166.9 510.0,168.2 510.2,169.4 510.3,170.4 510.4,171.2 510.6,171.8 510.7,172.0 510.8,171.9 511.0,171.5 511.1,170.8 511.2,169.9 511.4,168.8 511.5,167.6 511.6,166.3 511.8,165.1 511.9,163.9 512.0,162.7 512.1,161.5 512.3,160.5 512.4,159.4 512.5,158.4 512.7,157.4 512.8,156.4 512.9,155.4 513.1,154.4 513.2,153.3 513.3,152.3 513.5,151.1 513.6,149.9 513.7,148.7 513.8,147.4 514.0,146.1 514.1,144.8 514.2,143.7 514.4,142.6 514.5,141.8 514.6,141.2 514.8,141.0 514.9,141.1 515.0,141.5 515.2,142.2 515.3,143.1 515.4,144.2 515.5,145.4 515.7,146.6 515.8,147.9 515.9,149.1 516.1,150.3 516.2,151.4 516.3,152.5 516.5,153.5 516.6,154.5 516.7,155.5 516.9,156.5 517.0,157.5 517.1,158.5 517.3,159.5 517.4,160.6 517.5,161.7 517.6,162.9 517.8,164.1 517.9,165.3 518.0,166.6 518.2,167.9 518.3,169.1 518.4,170.1 518.6,171.0 518.7,171.6 518.8,171.9 519.0,171.9 519.1,171.6 519.2,171.0 519.3,170.1 519.5,169.1 519.6,167.9 519.7,166.7 519.9,165.5 520.0,164.3 520.1,163.1 520.3,161.9 520.4,160.9 520.5,159.8 520.7,158.8 520.8,157.9 520.9,156.9 521.1,156.0 521.2,155.0 521.3,154.0 521.4,153.0 521.6,151.9 521.7,150.8 521.8,149.6 522.0,148.4 522.1,147.1 522.2,145.8 522.4,144.6 522.5,143.5 522.6,142.5 522.8,141.8 522.9,141.3 523.0,141.1 523.1,141.2 523.3,141.7 523.4,142.4 523.5,143.3 523.7,144.4 523.8,145.6 523.9,146.8 524.1,148.0 524.2,149.2 524.3,150.4 524.5,151.5 524.6,152.5 524.7,153.5 524.9,154.5 525.0,155.5 525.1,156.4 525.2,157.4 525.4,158.3 525.5,159.3 525.6,160.4 525.8,161.5 525.9,162.6 526.0,163.8 526.2,165.1 526.3,166.3 526.4,167.6 526.6,168.8 526.7,169.9 526.8,170.8 526.9,171.5 527.1,171.8 527.2,171.9 527.3,171.7 527.5,171.1 527.6,170.3 527.7,169.3 527.9,168.2 528.0,167.0 528.1,165.8 528.3,164.5 528.4,163.4 528.5,162.2 528.6,161.1 528.8,160.1 528.9,159.1 529.0,158.1 529.2,157.1 529.3,156.2 529.4,155.2 529.6,154.2 529.7,153.2 529.8,152.1 530.0,150.9 530.1,149.8 530.2,148.5 530.4,147.3 530.5,146.0 530.6,144.7 530.7,143.6 530.9,142.6 531.0,141.8 531.1,141.2 531.3,141.0 531.4,141.1 531.5,141.6 531.7,142.3 531.8,143.2 531.9,144.3 532.1,145.5 532.2,146.7 532.3,148.0 532.4,149.2 532.6,150.3 532.7,151.5 532.8,152.5 533.0,153.6 533.1,154.6 533.2,155.5 533.4,156.5 533.5,157.5 533.6,158.5 533.8,159.5 533.9,160.6 534.0,161.7 534.2,162.9 534.3,164.1 534.4,165.4 534.5,166.7 534.7,167.9 534.8,169.1 534.9,170.2 535.1,171.1 535.2,171.7 535.3,172.0 535.5,171.9 535.6,171.6 535.7,170.9 535.9,170.1 536.0,169.0 536.1,167.8 536.2,166.6 536.4,165.4 536.5,164.1 536.6,163.0 536.8,161.8 536.9,160.7 537.0,159.7 537.2,158.7 537.3,157.7 537.4,156.7 537.6,155.8 537.7,154.8 537.8,153.7 538.0,152.7 538.1,151.6 538.2,150.4 538.3,149.2 538.5,148.0 538.6,146.7 538.7,145.4 538.9,144.2 539.0,143.1 539.1,142.2 539.3,141.5 539.4,141.1 539.5,141.0 539.7,141.3 539.8,141.8 539.9,142.7 540.0,143.7 540.2,144.8 540.3,146.0 540.4,147.3 540.6,148.5 540.7,149.7 540.8,150.8 541.0,151.9 541.1,153.0 541.2,154.0 541.4,154.9 541.5,155.9 541.6,156.9 541.7,157.8 541.9,158.8 542.0,159.9 542.1,160.9 542.3,162.1 542.4,163.3 542.5,164.5 542.7,165.7 542.8,167.0 542.9,168.2 543.1,169.4 543.2,170.4 543.3,171.2 543.5,171.7 543.6,171.9 543.7,171.8 543.8,171.4 544.0,170.7 544.1,169.8 544.2,168.7 544.4,167.5 544.5,166.3 544.5,177.5 413.5,177.5" fill="url(#tg)"/><polyline points="413.5,156.5 413.6,156.5 413.8,156.5 413.9,156.5 414.0,156.5 414.2,156.4 414.3,156.4 414.4,156.3 414.5,156.1 414.7,156.0 414.8,155.8 414.9,155.6 415.1,155.3 415.2,155.0 415.3,154.6 415.5,154.2 415.6,153.7 415.7,153.2 415.9,152.6 416.0,151.9 416.1,151.2 416.3,150.4 416.4,149.5 416.5,148.6 416.6,147.7 416.8,146.8 416.9,145.8 417.0,145.0 417.2,144.2 417.3,143.5 417.4,143.1 417.6,142.8 417.7,142.8 417.8,143.0 418.0,143.4 418.1,144.0 418.2,144.7 418.3,145.6 418.5,146.6 418.6,147.6 418.7,148.7 418.9,149.8 419.0,150.8 419.1,151.9 419.3,153.0 419.4,154.0 419.5,155.1 419.7,156.2 419.8,157.3 419.9,158.4 420.1,159.6 420.2,160.9 420.3,162.2 420.4,163.6 420.6,165.0 420.7,166.4 420.8,167.8 421.0,169.1 421.1,170.3 421.2,171.2 421.4,171.9 421.5,172.2 421.6,172.1 421.8,171.6 421.9,170.8 422.0,169.8 422.1,168.5 422.3,167.1 422.4,165.7 422.5,164.2 422.7,162.7 422.8,161.3 422.9,159.8 423.1,158.4 423.2,157.0 423.3,155.5 423.5,154.0 423.6,152.5 423.7,150.9 423.8,149.2 424.0,147.5 424.1,145.8 424.2,144.1 424.4,142.6 424.5,141.3 424.6,140.3 424.8,139.7 424.9,139.6 425.0,140.0 425.2,140.8 425.3,141.9 425.4,143.4 425.6,145.0 425.7,146.6 425.8,148.3 425.9,150.0 426.1,151.6 426.2,153.2 426.3,154.8 426.5,156.3 426.6,157.9 426.7,159.4 426.9,161.0 427.0,162.7 427.1,164.4 427.3,166.1 427.4,167.8 427.5,169.4 427.6,170.9 427.8,172.1 427.9,173.0 428.0,173.4 428.2,173.4 428.3,172.9 428.4,172.0 428.6,170.8 428.7,169.3 428.8,167.7 429.0,166.1 429.1,164.5 429.2,162.9 429.4,161.5 429.5,160.0 429.6,158.7 429.7,157.3 429.9,156.0 430.0,154.7 430.1,153.5 430.3,152.1 430.4,150.8 430.5,149.4 430.7,148.0 430.8,146.7 430.9,145.3 431.1,144.0 431.2,142.8 431.3,141.9 431.4,141.2 431.6,140.8 431.7,140.8 431.8,141.1 432.0,141.8 432.1,142.7 432.2,143.7 432.4,144.9 432.5,146.2 432.6,147.4 432.8,148.7 432.9,149.8 433.0,150.9 433.1,151.9 433.3,152.9 433.4,153.8 433.5,154.6 433.7,155.4 433.8,156.2 433.9,156.9 434.1,157.6 434.2,158.4 434.3,159.1 434.5,159.9 434.6,160.7 434.7,161.5 434.9,162.4 435.0,163.4 435.1,164.3 435.2,165.3 435.4,166.4 435.5,167.4 435.6,168.3 435.8,169.2 435.9,169.9 436.0,170.5 436.2,170.8 436.3,171.0 436.4,170.9 436.6,170.5 436.7,170.0 436.8,169.2 436.9,168.4 437.1,167.5 437.2,166.5 437.3,165.6 437.5,164.6 437.6,163.7 437.7,162.9 437.9,162.1 438.0,161.3 438.1,160.6 438.3,159.9 438.4,159.3 438.5,158.7 438.7,158.1 438.8,157.5 438.9,156.9 439.0,156.3 439.2,155.6 439.3,155.0 439.4,154.3 439.6,153.5 439.7,152.7 439.8,151.9 440.0,150.9 440.1,150.0 440.2,148.9 440.4,147.8 440.5,146.7 440.6,145.6 440.7,144.5 440.9,143.6 441.0,142.8 441.1,142.1 441.3,141.8 441.4,141.7 441.5,141.9 441.7,142.3 441.8,143.0 441.9,143.9 442.1,144.9 442.2,146.0 442.3,147.2 442.5,148.3 442.6,149.5 442.7,150.6 442.8,151.7 443.0,152.8 443.1,153.8 443.2,154.9 443.4,155.9 443.5,157.0 443.6,158.1 443.8,159.2 443.9,160.3 444.0,161.6 444.2,162.9 444.3,164.2 444.4,165.6 444.5,167.0 444.7,168.4 444.8,169.6 444.9,170.7 445.1,171.6 445.2,172.2 445.3,172.4 445.5,172.2 445.6,171.7 445.7,170.9 445.9,169.8 446.0,168.5 446.1,167.2 446.2,165.8 446.4,164.4 446.5,163.0 446.6,161.7 446.8,160.4 446.9,159.1 447.0,157.9 447.2,156.6 447.3,155.4 447.4,154.1 447.6,152.8 447.7,151.4 447.8,150.0 448.0,148.6 448.1,147.1 448.2,145.6 448.3,144.2 448.5,142.8 448.6,141.7 448.7,140.9 448.9,140.4 449.0,140.3 449.1,140.6 449.3,141.2 449.4,142.2 449.5,143.4 449.7,144.8 449.8,146.2 449.9,147.6 450.0,149.0 450.2,150.4 450.3,151.7 450.4,153.0 450.6,154.2 450.7,155.4 450.8,156.6 451.0,157.8 451.1,159.0 451.2,160.2 451.4,161.4 451.5,162.7 451.6,164.1 451.8,165.5 451.9,166.8 452.0,168.2 452.1,169.4 452.3,170.6 452.4,171.4 452.5,172.0 452.7,172.3 452.8,172.2 452.9,171.8 453.1,171.0 453.2,170.0 453.3,168.9 453.5,167.6 453.6,166.4 453.7,165.1 453.8,163.8 454.0,162.6 454.1,161.5 454.2,160.4 454.4,159.4 454.5,158.4 454.6,157.5 454.8,156.5 454.9,155.6 455.0,154.7 455.2,153.7 455.3,152.8 455.4,151.8 455.6,150.7 455.7,149.6 455.8,148.4 455.9,147.3 456.1,146.1 456.2,145.0 456.3,143.9 456.5,142.9 456.6,142.2 456.7,141.7 456.9,141.4 457.0,141.5 457.1,141.8 457.3,142.4 457.4,143.2 457.5,144.1 457.6,145.2 457.8,146.3 457.9,147.4 458.0,148.5 458.2,149.6 458.3,150.6 458.4,151.5 458.6,152.4 458.7,153.3 458.8,154.1 459.0,154.9 459.1,155.6 459.2,156.4 459.4,157.2 459.5,157.9 459.6,158.8 459.7,159.6 459.9,160.5 460.0,161.5 460.1,162.5 460.3,163.5 460.4,164.6 460.5,165.8 460.7,166.9 460.8,168.0 460.9,169.1 461.1,170.0 461.2,170.8 461.3,171.3 461.4,171.5 461.6,171.5 461.7,171.1 461.8,170.5 462.0,169.7 462.1,168.8 462.2,167.7 462.4,166.6 462.5,165.4 462.6,164.3 462.8,163.2 462.9,162.1 463.0,161.1 463.1,160.1 463.3,159.2 463.4,158.2 463.5,157.3 463.7,156.4 463.8,155.4 463.9,154.5 464.1,153.5 464.2,152.4 464.3,151.3 464.5,150.1 464.6,148.9 464.7,147.6 464.9,146.3 465.0,145.1 465.1,143.9 465.2,142.8 465.4,141.9 465.5,141.3 465.6,141.0 465.8,141.1 465.9,141.4 466.0,142.1 466.2,143.0 466.3,144.0 466.4,145.2 466.6,146.5 466.7,147.8 466.8,149.0 466.9,150.3 467.1,151.4 467.2,152.6 467.3,153.7 467.5,154.8 467.6,155.9 467.7,156.9 467.9,158.0 468.0,159.1 468.1,160.3 468.3,161.5 468.4,162.8 468.5,164.1 468.7,165.4 468.8,166.8 468.9,168.1 469.0,169.4 469.2,170.5 469.3,171.4 469.4,172.0 469.6,172.3 469.7,172.2 469.8,171.8 470.0,171.0 470.1,170.0 470.2,168.9 470.4,167.6 470.5,166.3 470.6,164.9 470.7,163.6 470.9,162.4 471.0,161.2 471.1,160.0 471.3,158.9 471.4,157.8 471.5,156.7 471.7,155.7 471.8,154.6 471.9,153.5 472.1,152.3 472.2,151.1 472.3,149.8 472.4,148.5 472.6,147.2 472.7,145.9 472.8,144.6 473.0,143.4 473.1,142.3 473.2,141.5 473.4,141.0 473.5,140.8 473.6,141.0 473.8,141.5 473.9,142.2 474.0,143.2 474.2,144.4 474.3,145.6 474.4,146.9 474.5,148.2 474.7,149.4 474.8,150.6 474.9,151.7 475.1,152.8 475.2,153.8 475.3,154.8 475.5,155.8 475.6,156.8 475.7,157.7 475.9,158.7 476.0,159.7 476.1,160.8 476.2,161.9 476.4,163.1 476.5,164.3 476.6,165.5 476.8,166.7 476.9,168.0 477.0,169.1 477.2,170.1 477.3,171.0 477.4,171.5 477.6,171.8 477.7,171.8 477.8,171.5 478.0,170.9 478.1,170.0 478.2,169.0 478.3,167.9 478.5,166.7 478.6,165.5 478.7,164.3 478.9,163.2 479.0,162.1 479.1,161.1 479.3,160.1 479.4,159.2 479.5,158.3 479.7,157.4 479.8,156.5 479.9,155.6 480.0,154.7 480.2,153.8 480.3,152.8 480.4,151.8 480.6,150.7 480.7,149.6 480.8,148.4 481.0,147.2 481.1,146.0 481.2,144.8 481.4,143.7 481.5,142.8 481.6,142.0 481.8,141.5 481.9,141.3 482.0,141.4 482.1,141.7 482.3,142.4 482.4,143.2 482.5,144.3 482.7,145.4 482.8,146.6 482.9,147.7 483.1,148.9 483.2,150.0 483.3,151.1 483.5,152.1 483.6,153.1 483.7,154.1 483.8,155.0 484.0,155.9 484.1,156.9 484.2,157.8 484.4,158.7 484.5,159.7 484.6,160.8 484.8,161.9 484.9,163.0 485.0,164.3 485.2,165.5 485.3,166.8 485.4,168.0 485.6,169.1 485.7,170.2 485.8,171.0 485.9,171.6 486.1,171.9 486.2,171.9 486.3,171.5 486.5,170.9 486.6,170.0 486.7,168.9 486.9,167.8 487.0,166.5 487.1,165.3 487.3,164.1 487.4,162.9 487.5,161.8 487.6,160.7 487.8,159.6 487.9,158.6 488.0,157.6 488.2,156.6 488.3,155.6 488.4,154.6 488.6,153.5 488.7,152.4 488.8,151.2 489.0,150.0 489.1,148.8 489.2,147.5 489.3,146.2 489.5,144.9 489.6,143.7 489.7,142.6 489.9,141.8 490.0,141.2 490.1,140.9 490.3,141.0 490.4,141.4 490.5,142.1 490.7,143.0 490.8,144.1 490.9,145.3 491.1,146.6 491.2,147.9 491.3,149.1 491.4,150.3 491.6,151.5 491.7,152.6 491.8,153.7 492.0,154.7 492.1,155.8 492.2,156.8 492.4,157.8 492.5,158.9 492.6,159.9 492.8,161.1 492.9,162.2 493.0,163.5 493.1,164.8 493.3,166.1 493.4,167.4 493.5,168.6 493.7,169.8 493.8,170.7 493.9,171.5 494.1,172.0 494.2,172.1 494.3,171.9 494.5,171.4 494.6,170.6 494.7,169.6 494.9,168.4 495.0,167.2 495.1,165.9 495.2,164.7 495.4,163.4 495.5,162.3 495.6,161.2 495.8,160.1 495.9,159.0 496.0,158.0 496.2,157.1 496.3,156.1 496.4,155.1 496.6,154.1 496.7,153.0 496.8,152.0 496.9,150.8 497.1,149.6 497.2,148.4 497.3,147.1 497.5,145.9 497.6,144.6 497.7,143.5 497.9,142.5 498.0,141.7 498.1,141.2 498.3,141.1 498.4,141.2 498.5,141.6 498.6,142.3 498.8,143.3 498.9,144.4 499.0,145.6 499.2,146.8 499.3,148.0 499.4,149.2 499.6,150.3 499.7,151.4 499.8,152.5 500.0,153.5 500.1,154.4 500.2,155.4 500.4,156.3 500.5,157.2 500.6,158.2 500.7,159.2 500.9,160.2 501.0,161.3 501.1,162.4 501.3,163.5 501.4,164.7 501.5,166.0 501.7,167.2 501.8,168.4 501.9,169.5 502.1,170.5 502.2,171.2 502.3,171.7 502.4,171.9 502.6,171.7 502.7,171.3 502.8,170.5 503.0,169.6 503.1,168.5 503.2,167.4 503.4,166.2 503.5,165.0 503.6,163.8 503.8,162.6 503.9,161.6 504.0,160.5 504.2,159.5 504.3,158.6 504.4,157.6 504.5,156.7 504.7,155.7 504.8,154.8 504.9,153.8 505.1,152.8 505.2,151.7 505.3,150.6 505.5,149.4 505.6,148.1 505.7,146.9 505.9,145.6 506.0,144.4 506.1,143.3 506.2,142.4 506.4,141.7 506.5,141.2 506.6,141.1 506.8,141.3 506.9,141.8 507.0,142.5 507.2,143.5 507.3,144.6 507.4,145.8 507.6,147.0 507.7,148.3 507.8,149.4 508.0,150.6 508.1,151.7 508.2,152.8 508.3,153.8 508.5,154.8 508.6,155.7 508.7,156.7 508.9,157.7 509.0,158.7 509.1,159.7 509.3,160.8 509.4,162.0 509.5,163.2 509.7,164.4 509.8,165.7 509.9,166.9 510.0,168.2 510.2,169.4 510.3,170.4 510.4,171.2 510.6,171.8 510.7,172.0 510.8,171.9 511.0,171.5 511.1,170.8 511.2,169.9 511.4,168.8 511.5,167.6 511.6,166.3 511.8,165.1 511.9,163.9 512.0,162.7 512.1,161.5 512.3,160.5 512.4,159.4 512.5,158.4 512.7,157.4 512.8,156.4 512.9,155.4 513.1,154.4 513.2,153.3 513.3,152.3 513.5,151.1 513.6,149.9 513.7,148.7 513.8,147.4 514.0,146.1 514.1,144.8 514.2,143.7 514.4,142.6 514.5,141.8 514.6,141.2 514.8,141.0 514.9,141.1 515.0,141.5 515.2,142.2 515.3,143.1 515.4,144.2 515.5,145.4 515.7,146.6 515.8,147.9 515.9,149.1 516.1,150.3 516.2,151.4 516.3,152.5 516.5,153.5 516.6,154.5 516.7,155.5 516.9,156.5 517.0,157.5 517.1,158.5 517.3,159.5 517.4,160.6 517.5,161.7 517.6,162.9 517.8,164.1 517.9,165.3 518.0,166.6 518.2,167.9 518.3,169.1 518.4,170.1 518.6,171.0 518.7,171.6 518.8,171.9 519.0,171.9 519.1,171.6 519.2,171.0 519.3,170.1 519.5,169.1 519.6,167.9 519.7,166.7 519.9,165.5 520.0,164.3 520.1,163.1 520.3,161.9 520.4,160.9 520.5,159.8 520.7,158.8 520.8,157.9 520.9,156.9 521.1,156.0 521.2,155.0 521.3,154.0 521.4,153.0 521.6,151.9 521.7,150.8 521.8,149.6 522.0,148.4 522.1,147.1 522.2,145.8 522.4,144.6 522.5,143.5 522.6,142.5 522.8,141.8 522.9,141.3 523.0,141.1 523.1,141.2 523.3,141.7 523.4,142.4 523.5,143.3 523.7,144.4 523.8,145.6 523.9,146.8 524.1,148.0 524.2,149.2 524.3,150.4 524.5,151.5 524.6,152.5 524.7,153.5 524.9,154.5 525.0,155.5 525.1,156.4 525.2,157.4 525.4,158.3 525.5,159.3 525.6,160.4 525.8,161.5 525.9,162.6 526.0,163.8 526.2,165.1 526.3,166.3 526.4,167.6 526.6,168.8 526.7,169.9 526.8,170.8 526.9,171.5 527.1,171.8 527.2,171.9 527.3,171.7 527.5,171.1 527.6,170.3 527.7,169.3 527.9,168.2 528.0,167.0 528.1,165.8 528.3,164.5 528.4,163.4 528.5,162.2 528.6,161.1 528.8,160.1 528.9,159.1 529.0,158.1 529.2,157.1 529.3,156.2 529.4,155.2 529.6,154.2 529.7,153.2 529.8,152.1 530.0,150.9 530.1,149.8 530.2,148.5 530.4,147.3 530.5,146.0 530.6,144.7 530.7,143.6 530.9,142.6 531.0,141.8 531.1,141.2 531.3,141.0 531.4,141.1 531.5,141.6 531.7,142.3 531.8,143.2 531.9,144.3 532.1,145.5 532.2,146.7 532.3,148.0 532.4,149.2 532.6,150.3 532.7,151.5 532.8,152.5 533.0,153.6 533.1,154.6 533.2,155.5 533.4,156.5 533.5,157.5 533.6,158.5 533.8,159.5 533.9,160.6 534.0,161.7 534.2,162.9 534.3,164.1 534.4,165.4 534.5,166.7 534.7,167.9 534.8,169.1 534.9,170.2 535.1,171.1 535.2,171.7 535.3,172.0 535.5,171.9 535.6,171.6 535.7,170.9 535.9,170.1 536.0,169.0 536.1,167.8 536.2,166.6 536.4,165.4 536.5,164.1 536.6,163.0 536.8,161.8 536.9,160.7 537.0,159.7 537.2,158.7 537.3,157.7 537.4,156.7 537.6,155.8 537.7,154.8 537.8,153.7 538.0,152.7 538.1,151.6 538.2,150.4 538.3,149.2 538.5,148.0 538.6,146.7 538.7,145.4 538.9,144.2 539.0,143.1 539.1,142.2 539.3,141.5 539.4,141.1 539.5,141.0 539.7,141.3 539.8,141.8 539.9,142.7 540.0,143.7 540.2,144.8 540.3,146.0 540.4,147.3 540.6,148.5 540.7,149.7 540.8,150.8 541.0,151.9 541.1,153.0 541.2,154.0 541.4,154.9 541.5,155.9 541.6,156.9 541.7,157.8 541.9,158.8 542.0,159.9 542.1,160.9 542.3,162.1 542.4,163.3 542.5,164.5 542.7,165.7 542.8,167.0 542.9,168.2 543.1,169.4 543.2,170.4 543.3,171.2 543.5,171.7 543.6,171.9 543.7,171.8 543.8,171.4 544.0,170.7 544.1,169.8 544.2,168.7 544.4,167.5 544.5,166.3" fill="none" stroke="#f4f28e" stroke-width="1.10" stroke-linejoin="round" stroke-opacity="1.00"/></g><rect x="413.50" y="135.50" width="131.00" height="42.00" fill="none" stroke="#d6d6d6" stroke-width="0.9"/><line x1="413.50" y1="177.50" x2="413.50" y2="174.30" stroke="#d6d6d6" stroke-width="0.90"/><line x1="426.60" y1="177.50" x2="426.60" y2="174.30" stroke="#d6d6d6" stroke-width="0.90"/><line x1="439.70" y1="177.50" x2="439.70" y2="174.30" stroke="#d6d6d6" stroke-width="0.90"/><line x1="452.80" y1="177.50" x2="452.80" y2="174.30" stroke="#d6d6d6" stroke-width="0.90"/><line x1="465.90" y1="177.50" x2="465.90" y2="174.30" stroke="#d6d6d6" stroke-width="0.90"/><line x1="479.00" y1="177.50" x2="479.00" y2="174.30" stroke="#d6d6d6" stroke-width="0.90"/><line x1="492.10" y1="177.50" x2="492.10" y2="174.30" stroke="#d6d6d6" stroke-width="0.90"/><line x1="505.20" y1="177.50" x2="505.20" y2="174.30" stroke="#d6d6d6" stroke-width="0.90"/><line x1="518.30" y1="177.50" x2="518.30" y2="174.30" stroke="#d6d6d6" stroke-width="0.90"/><line x1="531.40" y1="177.50" x2="531.40" y2="174.30" stroke="#d6d6d6" stroke-width="0.90"/><line x1="544.50" y1="177.50" x2="544.50" y2="174.30" stroke="#d6d6d6" stroke-width="0.90"/><text x="413.50" y="186.4" class="tk" text-anchor="middle">0</text><text x="426.60" y="186.4" class="tk" text-anchor="middle">10</text><text x="439.70" y="186.4" class="tk" text-anchor="middle">20</text><text x="452.80" y="186.4" class="tk" text-anchor="middle">30</text><text x="465.90" y="186.4" class="tk" text-anchor="middle">40</text><text x="479.00" y="186.4" class="tk" text-anchor="middle">50</text><text x="492.10" y="186.4" class="tk" text-anchor="middle">60</text><text x="505.20" y="186.4" class="tk" text-anchor="middle">70</text><text x="518.30" y="186.4" class="tk" text-anchor="middle">80</text><text x="531.40" y="186.4" class="tk" text-anchor="middle">90</text><text x="544.50" y="186.4" class="tk" text-anchor="middle">100</text><line x1="413.50" y1="177.50" x2="416.50" y2="177.50" stroke="#d6d6d6" stroke-width="0.90"/><line x1="544.50" y1="177.50" x2="541.50" y2="177.50" stroke="#d6d6d6" stroke-width="0.70"/><text x="410.3" y="181.10" class="tk" text-anchor="end">-5</text><line x1="413.50" y1="156.50" x2="416.50" y2="156.50" stroke="#d6d6d6" stroke-width="0.90"/><line x1="544.50" y1="156.50" x2="541.50" y2="156.50" stroke="#d6d6d6" stroke-width="0.70"/><text x="410.3" y="160.10" class="tk" text-anchor="end">0</text><line x1="413.50" y1="135.50" x2="416.50" y2="135.50" stroke="#d6d6d6" stroke-width="0.90"/><line x1="544.50" y1="135.50" x2="541.50" y2="135.50" stroke="#d6d6d6" stroke-width="0.70"/><text x="410.3" y="139.10" class="tk" text-anchor="end">5</text><text x="479.0" y="193.6" class="at" text-anchor="middle">t</text><text x="400.3" y="160.4" class="at" text-anchor="middle" transform="rotate(-90 400.3 158.2)">x(t)</text><rect x="413.5" y="217.0" width="131.0" height="41.0" fill="#646464"/><line x1="420.05" y1="217.00" x2="420.05" y2="258.00" stroke="#7b7b7b" stroke-width="0.50"/><line x1="433.15" y1="217.00" x2="433.15" y2="258.00" stroke="#7b7b7b" stroke-width="0.50"/><line x1="446.25" y1="217.00" x2="446.25" y2="258.00" stroke="#7b7b7b" stroke-width="0.50"/><line x1="459.35" y1="217.00" x2="459.35" y2="258.00" stroke="#7b7b7b" stroke-width="0.50"/><line x1="472.45" y1="217.00" x2="472.45" y2="258.00" stroke="#7b7b7b" stroke-width="0.50"/><line x1="485.55" y1="217.00" x2="485.55" y2="258.00" stroke="#7b7b7b" stroke-width="0.50"/><line x1="498.65" y1="217.00" x2="498.65" y2="258.00" stroke="#7b7b7b" stroke-width="0.50"/><line x1="511.75" y1="217.00" x2="511.75" y2="258.00" stroke="#7b7b7b" stroke-width="0.50"/><line x1="524.85" y1="217.00" x2="524.85" y2="258.00" stroke="#7b7b7b" stroke-width="0.50"/><line x1="537.95" y1="217.00" x2="537.95" y2="258.00" stroke="#7b7b7b" stroke-width="0.50"/><line x1="413.50" y1="252.88" x2="544.50" y2="252.88" stroke="#7b7b7b" stroke-width="0.50"/><line x1="413.50" y1="242.62" x2="544.50" y2="242.62" stroke="#7b7b7b" stroke-width="0.50"/><line x1="413.50" y1="232.38" x2="544.50" y2="232.38" stroke="#7b7b7b" stroke-width="0.50"/><line x1="413.50" y1="222.12" x2="544.50" y2="222.12" stroke="#7b7b7b" stroke-width="0.50"/><line x1="413.50" y1="217.00" x2="413.50" y2="258.00" stroke="#b4b4b4" stroke-width="0.60"/><line x1="426.60" y1="217.00" x2="426.60" y2="258.00" stroke="#b4b4b4" stroke-width="0.60"/><line x1="439.70" y1="217.00" x2="439.70" y2="258.00" stroke="#b4b4b4" stroke-width="0.60"/><line x1="452.80" y1="217.00" x2="452.80" y2="258.00" stroke="#b4b4b4" stroke-width="0.60"/><line x1="465.90" y1="217.00" x2="465.90" y2="258.00" stroke="#b4b4b4" stroke-width="0.60"/><line x1="479.00" y1="217.00" x2="479.00" y2="258.00" stroke="#b4b4b4" stroke-width="0.60"/><line x1="492.10" y1="217.00" x2="492.10" y2="258.00" stroke="#b4b4b4" stroke-width="0.60"/><line x1="505.20" y1="217.00" x2="505.20" y2="258.00" stroke="#b4b4b4" stroke-width="0.60"/><line x1="518.30" y1="217.00" x2="518.30" y2="258.00" stroke="#b4b4b4" stroke-width="0.60"/><line x1="531.40" y1="217.00" x2="531.40" y2="258.00" stroke="#b4b4b4" stroke-width="0.60"/><line x1="544.50" y1="217.00" x2="544.50" y2="258.00" stroke="#b4b4b4" stroke-width="0.60"/><line x1="413.50" y1="237.50" x2="544.50" y2="237.50" stroke="#b4b4b4" stroke-width="0.60"/><line x1="413.50" y1="247.75" x2="544.50" y2="247.75" stroke="#b4b4b4" stroke-width="0.60"/><line x1="413.50" y1="227.25" x2="544.50" y2="227.25" stroke="#b4b4b4" stroke-width="0.60"/><g clip-path="url(#c1)"><polyline points="479.0,237.5 479.0,237.5 479.0,237.4 479.1,237.3 479.1,237.2 479.3,237.0 479.5,236.8 479.7,236.5 480.1,236.2 480.6,235.9 481.1,235.5 481.8,235.1 482.7,234.7 483.6,234.2 484.8,233.7 486.1,233.1 487.6,232.5 489.3,231.9 491.2,231.3 493.3,230.6 495.6,230.0 498.1,229.4 500.7,228.9 503.5,228.5 506.4,228.3 509.4,228.3 512.3,228.7 515.0,229.4 517.4,230.5 519.4,232.0 520.9,233.9 521.7,236.0 521.8,238.2 521.2,240.5 519.9,242.5 518.1,244.2 515.7,245.6 512.9,246.6 509.9,247.3 506.7,247.7 503.4,247.9 500.0,248.0 496.7,247.9 493.4,247.9 490.1,247.9 486.7,247.9 483.4,248.0 480.0,248.2 476.5,248.5 472.9,249.0 469.2,249.5 465.3,250.0 461.2,250.6 456.9,251.1 452.5,251.4 448.1,251.3 443.8,250.9 439.6,249.8 436.0,247.9 433.0,245.4 431.0,242.2 430.1,238.5 430.4,234.8 431.8,231.3 434.3,228.4 437.6,226.1 441.5,224.5 445.8,223.6 450.3,223.1 454.9,223.1 459.5,223.1 464.1,223.3 468.6,223.4 473.1,223.5 477.6,223.4 482.1,223.1 486.8,222.7 491.6,222.2 496.6,221.6 501.7,221.1 507.0,220.8 512.4,221.0 517.5,221.7 522.3,223.4 526.5,226.0 529.6,229.6 531.4,234.0 531.7,238.8 530.6,243.4 528.1,247.3 524.4,250.4 519.9,252.4 515.0,253.6 509.7,254.0 504.5,253.9 499.3,253.6 494.2,253.2 489.2,252.9 484.3,252.6 479.5,252.5 474.7,252.7 469.8,252.9 464.8,253.3 459.7,253.8 454.4,254.2 449.1,254.3 443.8,253.9 438.7,252.8 434.1,250.9 430.2,247.9 427.5,244.0 426.2,239.5 426.3,234.8 427.8,230.4 430.7,226.8 434.6,224.2 439.1,222.6 444.0,221.8 449.0,221.7 454.0,222.0 458.9,222.6 463.6,223.3 468.0,223.9 472.3,224.4 476.4,224.7 480.5,224.9 484.5,224.9 488.5,224.8 492.6,224.6 496.8,224.3 501.0,224.0 505.4,223.9 509.7,223.9 514.0,224.4 518.0,225.4 521.6,227.0 524.6,229.4 526.8,232.3 527.9,235.6 528.0,239.0 527.0,242.3 525.0,245.1 522.2,247.3 518.8,248.7 515.1,249.5 511.2,249.8 507.3,249.6 503.5,249.1 499.9,248.5 496.4,247.8 493.3,247.1 490.3,246.5 487.5,245.9 484.9,245.4 482.5,245.1 480.1,244.8 477.8,244.7 475.5,244.7 473.2,244.7 470.8,244.9 468.4,245.2 465.9,245.6 463.3,246.0 460.5,246.4 457.6,246.8 454.6,247.2 451.4,247.4 448.3,247.4 445.1,247.1 442.2,246.5 439.5,245.4 437.1,243.9 435.4,242.1 434.3,239.9 433.9,237.5 434.2,235.2 435.3,233.1 437.0,231.2 439.3,229.8 441.9,228.9 444.8,228.3 447.7,228.1 450.7,228.2 453.6,228.5 456.5,228.9 459.1,229.4 461.6,229.9 464.0,230.3 466.2,230.7 468.3,231.1 470.3,231.4 472.3,231.6 474.1,231.7 476.0,231.7 477.8,231.6 479.7,231.5 481.7,231.2 483.8,230.9 485.9,230.4 488.3,229.9 490.8,229.4 493.5,228.8 496.3,228.2 499.4,227.6 502.7,227.1 506.1,226.7 509.5,226.6 513.0,226.8 516.3,227.5 519.3,228.7 521.9,230.4 523.8,232.6 524.9,235.2 525.2,238.0 524.6,240.7 523.2,243.2 521.0,245.3 518.3,246.9 515.1,247.9 511.7,248.6 508.1,248.8 504.5,248.8 500.9,248.6 497.4,248.3 494.0,248.1 490.6,247.8 487.3,247.7 484.1,247.7 480.8,247.7 477.5,247.9 474.2,248.3 470.7,248.7 467.0,249.2 463.2,249.8 459.1,250.4 454.9,250.8 450.6,251.1 446.3,251.0 442.0,250.5 438.1,249.2 434.6,247.3 431.9,244.6 430.1,241.3 429.5,237.7 430.0,234.1 431.6,230.8 434.2,228.0 437.6,226.0 441.5,224.7 445.7,224.0 450.1,223.8 454.4,224.0 458.7,224.3 462.9,224.6 466.9,225.0 470.9,225.3 474.7,225.4 478.6,225.4 482.5,225.2 486.5,224.9 490.5,224.5 494.8,224.0 499.2,223.5 503.7,223.1 508.4,222.9 513.0,223.1 517.5,223.9 521.6,225.4 525.1,227.7 527.8,230.8 529.3,234.5 529.7,238.5 528.7,242.3 526.7,245.7 523.6,248.3 519.9,250.1 515.6,251.2 511.2,251.6 506.7,251.5 502.3,251.2 498.0,250.7 493.9,250.2 489.9,249.7 486.1,249.3 482.3,249.1 478.7,249.0 475.0,249.0 471.3,249.2 467.5,249.6 463.6,250.0 459.5,250.4 455.3,250.8 451.0,251.0 446.8,250.9 442.6,250.3 438.6,249.2 435.2,247.4 432.4,244.9 430.5,241.8 429.7,238.3 430.0,234.8 431.4,231.6 433.7,229.0 436.8,227.0 440.4,225.7 444.3,225.0 448.3,224.9 452.3,225.1 456.2,225.5 459.9,226.1 463.5,226.7 466.8,227.3 470.0,227.8 473.0,228.1 476.0,228.4 478.9,228.5 481.7,228.5 484.6,228.4 487.6,228.1 490.6,227.8 493.8,227.4 497.1,226.9 500.6,226.5 504.1,226.2 507.8,226.0 511.5,226.1 515.0,226.6 518.4,227.6 521.3,229.1 523.6,231.2 525.3,233.7 526.0,236.5 525.9,239.4 524.8,242.1 523.0,244.4 520.5,246.2 517.5,247.4 514.2,248.1 510.8,248.4 507.3,248.3 503.9,248.0 500.6,247.5 497.5,247.0 494.5,246.5 491.7,246.0 489.1,245.6 486.5,245.3 484.1,245.1 481.7,244.9 479.3,244.9 476.9,245.0 474.5,245.3 472.0,245.6 469.3,246.0 466.5,246.5 463.6,247.0 460.4,247.6 457.1,248.1 453.7,248.5 450.1,248.7 446.5,248.7 443.0,248.2 439.7,247.2 436.9,245.7 434.5,243.7 432.9,241.2 432.2,238.4 432.4,235.6 433.4,232.9 435.2,230.6 437.8,228.8 440.8,227.5 444.1,226.7 447.6,226.4 451.2,226.4 454.7,226.6 458.2,226.9 461.5,227.3 464.7,227.7 467.7,228.1 470.7,228.3 473.6,228.5 476.5,228.5 479.4,228.4 482.3,228.2 485.4,227.9 488.5,227.4 491.8,226.9 495.3,226.3 498.9,225.8 502.8,225.3 506.7,225.0 510.7,225.0 514.6,225.4 518.4,226.4 521.7,227.9 524.4,230.2 526.3,233.0 527.3,236.1 527.2,239.4 526.1,242.5 524.0,245.2 521.2,247.3 517.8,248.7 514.1,249.6 510.2,249.9 506.2,249.9 502.3,249.6 498.5,249.3 494.8,248.9 491.2,248.5 487.7,248.2 484.4,248.0 481.0,247.9 477.7,248.0 474.3,248.3 470.8,248.6 467.2,249.0 463.4,249.6 459.4,250.1 455.4,250.5 451.1,250.8 446.9,250.8 442.7,250.3 438.8,249.2 435.3,247.4 432.5,245.0 430.6,241.9 429.7,238.4 430.0,234.9 431.4,231.7 433.7,228.9 436.8,226.8 440.4,225.5 444.4,224.7 448.5,224.5 452.7,224.7 456.7,225.0 460.6,225.5 464.4,226.0 468.0,226.4 471.5,226.7 474.9,226.9 478.3,227.0 481.6,226.9 485.0,226.7 488.5,226.4 492.1,226.0 495.9,225.5 499.8,225.0 503.8,224.6 508.0,224.5 512.1,224.6 516.2,225.2 519.9,226.5 523.2,228.3 525.7,230.9 527.3,234.0 527.9,237.3 527.4,240.7 525.9,243.7 523.5,246.2 520.4,248.1 516.8,249.3 513.0,249.9 509.0,250.0 505.0,249.8 501.2,249.3 497.5,248.8 493.9,248.3 490.6,247.8 487.3,247.4 484.2,247.1 481.2,247.0 478.2,246.9 475.1,247.1 472.1,247.3 468.9,247.6 465.6,248.1 462.1,248.5 458.5,249.0 454.8,249.4 450.9,249.6 447.0,249.6 443.2,249.1 439.7,248.2 436.5,246.6 433.9,244.5 432.1,241.8 431.2,238.8 431.3,235.7 432.3,232.8 434.2,230.3 436.9,228.3 440.1,226.9 443.6,226.2 447.3,225.9 451.0,225.9 454.6,226.2 458.1,226.7 461.5,227.2 464.7,227.7 467.8,228.2 470.7,228.5 473.5,228.8 476.3,228.9 479.0,228.9 481.8,228.8 484.6,228.6 487.5,228.2 490.6,227.8 493.7,227.3 497.1,226.8 500.6,226.3 504.2,225.9 508.0,225.7 511.7,225.8 515.4,226.3 518.8,227.4 521.8,229.0 524.2,231.2 525.8,233.8 526.5,236.8 526.3,239.8 525.1,242.6 523.0,245.0 520.3,246.8 517.1,248.1 513.6,248.8 510.0,249.0 506.3,249.0 502.7,248.7 499.2,248.2 495.8,247.8 492.6,247.3 489.5,247.0 486.6,246.7 483.6,246.5 480.8,246.5 477.9,246.5 475.0,246.7 472.0,247.1 468.9,247.5 465.6,248.0 462.2,248.5 458.6,249.0 454.8,249.5 450.9,249.7 447.0,249.7 443.2,249.3 439.5,248.3 436.3,246.7 433.7,244.5 431.9,241.8 431.0,238.7 431.1,235.5 432.2,232.5 434.2,230.0 437.0,228.0 440.3,226.6 443.9,225.8 447.7,225.5 451.5,225.5 455.3,225.8 459.0,226.2 462.6,226.6 466.0,227.0 469.3,227.4 472.5,227.6 475.6,227.8 478.7,227.7 481.8,227.6 485.0,227.3 488.3,227.0 491.8,226.5 495.4,226.0 499.2,225.5 503.1,225.0 507.1,224.8 511.2,224.8 515.2,225.3 518.9,226.3 522.3,228.0 524.9,230.4 526.8,233.3 527.6,236.5 527.4,239.8 526.1,242.9 524.0,245.6 521.0,247.6 517.6,248.9 513.8,249.7 509.9,249.9 505.9,249.8 502.0,249.5 498.2,249.1 494.6,248.6 491.1,248.2 487.8,247.8 484.5,247.6 481.3,247.5 478.2,247.5 474.9,247.6 471.7,247.9 468.3,248.3 464.8,248.8 461.1,249.3 457.2,249.8 453.2,250.1 449.2,250.3 445.1,250.0 441.2,249.3 437.6,248.0 434.6,246.1 432.2,243.5 430.8,240.4 430.4,237.1 431.0,233.9 432.7,231.0 435.2,228.6 438.3,226.9 441.9,225.8 445.7,225.3 449.6,225.2 453.5,225.4 457.3,225.8 461.0,226.3 464.5,226.8 467.8,227.3 471.0,227.6 474.2,227.8 477.2,228.0 480.3,227.9 483.4,227.8 486.5,227.5 489.8,227.1 493.2,226.6 496.7,226.1 500.4,225.7 504.3,225.3 508.2,225.1 512.1,225.3 516.0,225.9 519.5,227.0 522.6,228.8 525.0,231.2 526.6,234.1 527.2,237.2 526.8,240.4 525.4,243.3 523.1,245.7 520.2,247.5 516.8,248.7 513.1,249.3 509.3,249.4 505.5,249.3 501.8,248.9 498.3,248.4 494.8,247.9 491.6,247.5 488.5,247.1 485.4,246.8 482.5,246.6 479.6,246.6 476.7,246.7 473.7,246.9 470.7,247.2 467.5,247.6 464.2,248.1 460.7,248.6 457.0,249.1 453.3,249.5 449.4,249.6 445.5,249.5 441.8,248.8 438.4,247.7 435.4,245.9 433.1,243.5 431.6,240.7 431.1,237.6 431.6,234.5 433.0,231.7 435.2,229.3 438.1,227.6 441.5,226.5 445.1,225.9 448.9,225.7 452.6,225.9 456.3,226.2 459.8,226.7 463.2,227.1 466.5,227.6 469.6,227.9 472.6,228.2 475.5,228.3 478.5,228.4 481.4,228.3 484.4,228.0 487.5,227.7 490.7,227.2 494.0,226.7 497.6,226.2 501.2,225.7 505.1,225.4 509.0,225.2 512.9,225.4 516.6,226.1 520.1,227.4 523.0,229.3 525.3,231.7 526.7,234.7 527.1,237.8 526.5,240.9 524.9,243.7 522.5,246.0 519.5,247.7 516.1,248.8 512.3,249.4 508.5,249.5 504.7,249.3 501.0,248.9 497.4,248.5 494.0,248.0 490.7,247.6 487.5,247.3 484.4,247.1 481.4,247.0 478.3,247.0 475.3,247.2 472.1,247.5 468.9,247.9 465.5,248.3 462.0,248.9 458.3,249.4 454.4,249.8 450.4,250.0 446.4,249.9 442.5,249.4 438.9,248.3 435.7,246.6 433.1,244.3 431.4,241.4 430.7,238.2 430.9,235.0 432.2,232.0 434.4,229.4 437.3,227.5 440.7,226.2 444.5,225.5 448.3,225.3 452.2,225.4 456.0,225.7 459.7,226.2 463.3,226.7 466.7,227.1 469.9,227.5 473.1,227.7 476.2,227.8 479.3,227.8 482.4,227.7 485.6,227.4 488.8,227.0 492.2,226.6 495.8,226.1 499.5,225.6 503.4,225.2 507.4,224.9 511.4,225.0 515.4,225.5 519.0,226.6 522.3,228.3 524.9,230.6 526.6,233.5 527.4,236.7 527.1,239.9 525.9,242.9 523.7,245.5 520.8,247.4 517.4,248.8 513.7,249.5 509.8,249.7 505.9,249.6 502.1,249.3 498.4,248.8 494.9,248.3 491.5,247.9 488.3,247.5 485.2,247.2 482.1,247.1 479.0,247.0 476.0,247.1 472.9,247.4 469.6,247.7 466.3,248.2 462.8,248.7 459.1,249.2 455.3,249.6 451.4,249.9 447.4,249.9 443.5,249.5 439.8,248.6 436.5,247.0 433.8,244.9 431.9,242.2 430.9,239.1 430.9,235.9 431.9,232.8 433.8,230.2 436.5,228.1 439.8,226.6 443.4,225.8 447.2,225.5 451.0,225.5 454.8,225.8 458.5,226.2 462.0,226.7 465.4,227.2 468.6,227.6 471.7,227.9 474.7,228.1 477.7,228.2 480.7,228.1 483.7,227.9 486.8,227.6 490.0,227.2 493.4,226.7 496.9,226.2 500.6,225.7 504.4,225.4 508.3,225.2 512.2,225.3 516.0,225.9 519.5,227.1 522.6,228.9 525.0,231.3 526.5,234.1 527.1,237.3 526.7,240.4 525.3,243.3 523.0,245.7 520.1,247.5 516.7,248.7 513.0,249.3 509.2,249.4 505.4,249.3 501.7,248.9 498.1,248.5 494.7,248.0 491.4,247.6 488.3,247.2 485.2,246.9 482.2,246.8 479.3,246.8 476.3,246.9 473.3,247.1 470.1,247.5 466.9,247.9 463.5,248.4 459.9,248.9 456.2,249.4 452.3,249.7 448.4,249.8 444.5,249.5 440.7,248.8 437.3,247.4 434.5,245.4 432.4,242.8 431.1,239.8 430.9,236.6 431.7,233.5 433.4,230.8 435.9,228.6 439.0,227.0 442.5,226.0 446.3,225.6 450.1,225.5 453.9,225.7 457.6,226.1 461.2,226.6 464.6,227.1 467.8,227.5 471.0,227.8 474.0,228.0 477.1,228.1 480.1,228.1 483.1,227.9 486.2,227.6 489.4,227.2 492.8,226.7 496.4,226.2 500.1,225.7 503.9,225.3 507.8,225.1 511.8,225.2 515.7,225.7 519.3,226.8 522.4,228.6 524.9,230.9 526.6,233.8 527.3,237.0 526.9,240.2 525.6,243.1 523.4,245.6 520.5,247.5 517.1,248.7 513.4,249.4 509.5,249.6 505.7,249.5 501.9,249.1 498.2,248.7 494.7,248.2 491.4,247.8 488.2,247.4 485.0,247.2 482.0,247.0 478.9,247.0 475.9,247.2 472.8,247.4 469.5,247.8 466.2,248.2 462.7,248.7 459.0,249.3 455.2,249.7 451.2,250.0 447.2,249.9 443.3,249.5 439.6,248.6 436.3,247.0 433.6,244.8 431.7,242.0 430.8,238.9 430.8,235.6 431.9,232.6 433.9,230.0 436.7,227.9 440.0,226.5 443.6,225.7 447.5,225.4 451.4,225.4 455.2,225.7 458.9,226.2 462.4,226.7 465.8,227.1 469.0,227.5 472.2,227.8 475.2,228.0 478.3,228.0 481.3,227.9 484.4,227.7 487.6,227.4 490.9,226.9 494.3,226.4 498.0,225.9 501.7,225.5 505.6,225.1 509.6,225.1 513.5,225.4 517.3,226.1 520.7,227.5 523.6,229.5 525.8,232.1 527.0,235.2 527.2,238.4 526.4,241.5 524.7,244.3 522.2,246.5 519.0,248.1 515.5,249.1 511.7,249.5 507.8,249.5 504.0,249.3 500.3,248.9 496.8,248.4 493.3,247.9 490.1,247.5 486.9,247.2 483.9,247.0 480.9,246.9 477.8,246.9 474.8,247.1 471.7,247.4 468.5,247.8 465.1,248.3 461.6,248.8 457.9,249.3 454.1,249.7 450.2,249.9 446.2,249.8 442.4,249.2 438.8,248.1 435.7,246.4 433.2,244.1 431.5,241.2 430.8,238.1 431.1,234.9 432.5,232.0 434.6,229.5 437.5,227.6 440.9,226.4 444.6,225.7 448.4,225.5" fill="none" stroke="#38386e" stroke-width="2.40" stroke-linejoin="round" stroke-opacity="0.60"/><polyline points="479.0,237.5 479.0,237.5 479.0,237.4 479.1,237.3 479.1,237.2 479.3,237.0 479.5,236.8 479.7,236.5 480.1,236.2 480.6,235.9 481.1,235.5 481.8,235.1 482.7,234.7 483.6,234.2 484.8,233.7 486.1,233.1 487.6,232.5 489.3,231.9 491.2,231.3 493.3,230.6 495.6,230.0 498.1,229.4 500.7,228.9 503.5,228.5 506.4,228.3 509.4,228.3 512.3,228.7 515.0,229.4 517.4,230.5 519.4,232.0 520.9,233.9 521.7,236.0 521.8,238.2 521.2,240.5 519.9,242.5 518.1,244.2 515.7,245.6 512.9,246.6 509.9,247.3 506.7,247.7 503.4,247.9 500.0,248.0 496.7,247.9 493.4,247.9 490.1,247.9 486.7,247.9 483.4,248.0 480.0,248.2 476.5,248.5 472.9,249.0 469.2,249.5 465.3,250.0 461.2,250.6 456.9,251.1 452.5,251.4 448.1,251.3 443.8,250.9 439.6,249.8 436.0,247.9 433.0,245.4 431.0,242.2 430.1,238.5 430.4,234.8 431.8,231.3 434.3,228.4 437.6,226.1 441.5,224.5 445.8,223.6 450.3,223.1 454.9,223.1 459.5,223.1 464.1,223.3 468.6,223.4 473.1,223.5 477.6,223.4 482.1,223.1 486.8,222.7 491.6,222.2 496.6,221.6 501.7,221.1 507.0,220.8 512.4,221.0 517.5,221.7 522.3,223.4 526.5,226.0 529.6,229.6 531.4,234.0 531.7,238.8 530.6,243.4 528.1,247.3 524.4,250.4 519.9,252.4 515.0,253.6 509.7,254.0 504.5,253.9 499.3,253.6 494.2,253.2 489.2,252.9 484.3,252.6 479.5,252.5 474.7,252.7 469.8,252.9 464.8,253.3 459.7,253.8 454.4,254.2 449.1,254.3 443.8,253.9 438.7,252.8 434.1,250.9 430.2,247.9 427.5,244.0 426.2,239.5 426.3,234.8 427.8,230.4 430.7,226.8 434.6,224.2 439.1,222.6 444.0,221.8 449.0,221.7 454.0,222.0 458.9,222.6 463.6,223.3 468.0,223.9 472.3,224.4 476.4,224.7 480.5,224.9 484.5,224.9 488.5,224.8 492.6,224.6 496.8,224.3 501.0,224.0 505.4,223.9 509.7,223.9 514.0,224.4 518.0,225.4 521.6,227.0 524.6,229.4 526.8,232.3 527.9,235.6 528.0,239.0 527.0,242.3 525.0,245.1 522.2,247.3 518.8,248.7 515.1,249.5 511.2,249.8 507.3,249.6 503.5,249.1 499.9,248.5 496.4,247.8 493.3,247.1 490.3,246.5 487.5,245.9 484.9,245.4 482.5,245.1 480.1,244.8 477.8,244.7 475.5,244.7 473.2,244.7 470.8,244.9 468.4,245.2 465.9,245.6 463.3,246.0 460.5,246.4 457.6,246.8 454.6,247.2 451.4,247.4 448.3,247.4 445.1,247.1 442.2,246.5 439.5,245.4 437.1,243.9 435.4,242.1 434.3,239.9 433.9,237.5 434.2,235.2 435.3,233.1 437.0,231.2 439.3,229.8 441.9,228.9 444.8,228.3 447.7,228.1 450.7,228.2 453.6,228.5 456.5,228.9 459.1,229.4 461.6,229.9 464.0,230.3 466.2,230.7 468.3,231.1 470.3,231.4 472.3,231.6 474.1,231.7 476.0,231.7 477.8,231.6 479.7,231.5 481.7,231.2 483.8,230.9 485.9,230.4 488.3,229.9 490.8,229.4 493.5,228.8 496.3,228.2 499.4,227.6 502.7,227.1 506.1,226.7 509.5,226.6 513.0,226.8 516.3,227.5 519.3,228.7 521.9,230.4 523.8,232.6 524.9,235.2 525.2,238.0 524.6,240.7 523.2,243.2 521.0,245.3 518.3,246.9 515.1,247.9 511.7,248.6 508.1,248.8 504.5,248.8 500.9,248.6 497.4,248.3 494.0,248.1 490.6,247.8 487.3,247.7 484.1,247.7 480.8,247.7 477.5,247.9 474.2,248.3 470.7,248.7 467.0,249.2 463.2,249.8 459.1,250.4 454.9,250.8 450.6,251.1 446.3,251.0 442.0,250.5 438.1,249.2 434.6,247.3 431.9,244.6 430.1,241.3 429.5,237.7 430.0,234.1 431.6,230.8 434.2,228.0 437.6,226.0 441.5,224.7 445.7,224.0 450.1,223.8 454.4,224.0 458.7,224.3 462.9,224.6 466.9,225.0 470.9,225.3 474.7,225.4 478.6,225.4 482.5,225.2 486.5,224.9 490.5,224.5 494.8,224.0 499.2,223.5 503.7,223.1 508.4,222.9 513.0,223.1 517.5,223.9 521.6,225.4 525.1,227.7 527.8,230.8 529.3,234.5 529.7,238.5 528.7,242.3 526.7,245.7 523.6,248.3 519.9,250.1 515.6,251.2 511.2,251.6 506.7,251.5 502.3,251.2 498.0,250.7 493.9,250.2 489.9,249.7 486.1,249.3 482.3,249.1 478.7,249.0 475.0,249.0 471.3,249.2 467.5,249.6 463.6,250.0 459.5,250.4 455.3,250.8 451.0,251.0 446.8,250.9 442.6,250.3 438.6,249.2 435.2,247.4 432.4,244.9 430.5,241.8 429.7,238.3 430.0,234.8 431.4,231.6 433.7,229.0 436.8,227.0 440.4,225.7 444.3,225.0 448.3,224.9 452.3,225.1 456.2,225.5 459.9,226.1 463.5,226.7 466.8,227.3 470.0,227.8 473.0,228.1 476.0,228.4 478.9,228.5 481.7,228.5 484.6,228.4 487.6,228.1 490.6,227.8 493.8,227.4 497.1,226.9 500.6,226.5 504.1,226.2 507.8,226.0 511.5,226.1 515.0,226.6 518.4,227.6 521.3,229.1 523.6,231.2 525.3,233.7 526.0,236.5 525.9,239.4 524.8,242.1 523.0,244.4 520.5,246.2 517.5,247.4 514.2,248.1 510.8,248.4 507.3,248.3 503.9,248.0 500.6,247.5 497.5,247.0 494.5,246.5 491.7,246.0 489.1,245.6 486.5,245.3 484.1,245.1 481.7,244.9 479.3,244.9 476.9,245.0 474.5,245.3 472.0,245.6 469.3,246.0 466.5,246.5 463.6,247.0 460.4,247.6 457.1,248.1 453.7,248.5 450.1,248.7 446.5,248.7 443.0,248.2 439.7,247.2 436.9,245.7 434.5,243.7 432.9,241.2 432.2,238.4 432.4,235.6 433.4,232.9 435.2,230.6 437.8,228.8 440.8,227.5 444.1,226.7 447.6,226.4 451.2,226.4 454.7,226.6 458.2,226.9 461.5,227.3 464.7,227.7 467.7,228.1 470.7,228.3 473.6,228.5 476.5,228.5 479.4,228.4 482.3,228.2 485.4,227.9 488.5,227.4 491.8,226.9 495.3,226.3 498.9,225.8 502.8,225.3 506.7,225.0 510.7,225.0 514.6,225.4 518.4,226.4 521.7,227.9 524.4,230.2 526.3,233.0 527.3,236.1 527.2,239.4 526.1,242.5 524.0,245.2 521.2,247.3 517.8,248.7 514.1,249.6 510.2,249.9 506.2,249.9 502.3,249.6 498.5,249.3 494.8,248.9 491.2,248.5 487.7,248.2 484.4,248.0 481.0,247.9 477.7,248.0 474.3,248.3 470.8,248.6 467.2,249.0 463.4,249.6 459.4,250.1 455.4,250.5 451.1,250.8 446.9,250.8 442.7,250.3 438.8,249.2 435.3,247.4 432.5,245.0 430.6,241.9 429.7,238.4 430.0,234.9 431.4,231.7 433.7,228.9 436.8,226.8 440.4,225.5 444.4,224.7 448.5,224.5 452.7,224.7 456.7,225.0 460.6,225.5 464.4,226.0 468.0,226.4 471.5,226.7 474.9,226.9 478.3,227.0 481.6,226.9 485.0,226.7 488.5,226.4 492.1,226.0 495.9,225.5 499.8,225.0 503.8,224.6 508.0,224.5 512.1,224.6 516.2,225.2 519.9,226.5 523.2,228.3 525.7,230.9 527.3,234.0 527.9,237.3 527.4,240.7 525.9,243.7 523.5,246.2 520.4,248.1 516.8,249.3 513.0,249.9 509.0,250.0 505.0,249.8 501.2,249.3 497.5,248.8 493.9,248.3 490.6,247.8 487.3,247.4 484.2,247.1 481.2,247.0 478.2,246.9 475.1,247.1 472.1,247.3 468.9,247.6 465.6,248.1 462.1,248.5 458.5,249.0 454.8,249.4 450.9,249.6 447.0,249.6 443.2,249.1 439.7,248.2 436.5,246.6 433.9,244.5 432.1,241.8 431.2,238.8 431.3,235.7 432.3,232.8 434.2,230.3 436.9,228.3 440.1,226.9 443.6,226.2 447.3,225.9 451.0,225.9 454.6,226.2 458.1,226.7 461.5,227.2 464.7,227.7 467.8,228.2 470.7,228.5 473.5,228.8 476.3,228.9 479.0,228.9 481.8,228.8 484.6,228.6 487.5,228.2 490.6,227.8 493.7,227.3 497.1,226.8 500.6,226.3 504.2,225.9 508.0,225.7 511.7,225.8 515.4,226.3 518.8,227.4 521.8,229.0 524.2,231.2 525.8,233.8 526.5,236.8 526.3,239.8 525.1,242.6 523.0,245.0 520.3,246.8 517.1,248.1 513.6,248.8 510.0,249.0 506.3,249.0 502.7,248.7 499.2,248.2 495.8,247.8 492.6,247.3 489.5,247.0 486.6,246.7 483.6,246.5 480.8,246.5 477.9,246.5 475.0,246.7 472.0,247.1 468.9,247.5 465.6,248.0 462.2,248.5 458.6,249.0 454.8,249.5 450.9,249.7 447.0,249.7 443.2,249.3 439.5,248.3 436.3,246.7 433.7,244.5 431.9,241.8 431.0,238.7 431.1,235.5 432.2,232.5 434.2,230.0 437.0,228.0 440.3,226.6 443.9,225.8 447.7,225.5 451.5,225.5 455.3,225.8 459.0,226.2 462.6,226.6 466.0,227.0 469.3,227.4 472.5,227.6 475.6,227.8 478.7,227.7 481.8,227.6 485.0,227.3 488.3,227.0 491.8,226.5 495.4,226.0 499.2,225.5 503.1,225.0 507.1,224.8 511.2,224.8 515.2,225.3 518.9,226.3 522.3,228.0 524.9,230.4 526.8,233.3 527.6,236.5 527.4,239.8 526.1,242.9 524.0,245.6 521.0,247.6 517.6,248.9 513.8,249.7 509.9,249.9 505.9,249.8 502.0,249.5 498.2,249.1 494.6,248.6 491.1,248.2 487.8,247.8 484.5,247.6 481.3,247.5 478.2,247.5 474.9,247.6 471.7,247.9 468.3,248.3 464.8,248.8 461.1,249.3 457.2,249.8 453.2,250.1 449.2,250.3 445.1,250.0 441.2,249.3 437.6,248.0 434.6,246.1 432.2,243.5 430.8,240.4 430.4,237.1 431.0,233.9 432.7,231.0 435.2,228.6 438.3,226.9 441.9,225.8 445.7,225.3 449.6,225.2 453.5,225.4 457.3,225.8 461.0,226.3 464.5,226.8 467.8,227.3 471.0,227.6 474.2,227.8 477.2,228.0 480.3,227.9 483.4,227.8 486.5,227.5 489.8,227.1 493.2,226.6 496.7,226.1 500.4,225.7 504.3,225.3 508.2,225.1 512.1,225.3 516.0,225.9 519.5,227.0 522.6,228.8 525.0,231.2 526.6,234.1 527.2,237.2 526.8,240.4 525.4,243.3 523.1,245.7 520.2,247.5 516.8,248.7 513.1,249.3 509.3,249.4 505.5,249.3 501.8,248.9 498.3,248.4 494.8,247.9 491.6,247.5 488.5,247.1 485.4,246.8 482.5,246.6 479.6,246.6 476.7,246.7 473.7,246.9 470.7,247.2 467.5,247.6 464.2,248.1 460.7,248.6 457.0,249.1 453.3,249.5 449.4,249.6 445.5,249.5 441.8,248.8 438.4,247.7 435.4,245.9 433.1,243.5 431.6,240.7 431.1,237.6 431.6,234.5 433.0,231.7 435.2,229.3 438.1,227.6 441.5,226.5 445.1,225.9 448.9,225.7 452.6,225.9 456.3,226.2 459.8,226.7 463.2,227.1 466.5,227.6 469.6,227.9 472.6,228.2 475.5,228.3 478.5,228.4 481.4,228.3 484.4,228.0 487.5,227.7 490.7,227.2 494.0,226.7 497.6,226.2 501.2,225.7 505.1,225.4 509.0,225.2 512.9,225.4 516.6,226.1 520.1,227.4 523.0,229.3 525.3,231.7 526.7,234.7 527.1,237.8 526.5,240.9 524.9,243.7 522.5,246.0 519.5,247.7 516.1,248.8 512.3,249.4 508.5,249.5 504.7,249.3 501.0,248.9 497.4,248.5 494.0,248.0 490.7,247.6 487.5,247.3 484.4,247.1 481.4,247.0 478.3,247.0 475.3,247.2 472.1,247.5 468.9,247.9 465.5,248.3 462.0,248.9 458.3,249.4 454.4,249.8 450.4,250.0 446.4,249.9 442.5,249.4 438.9,248.3 435.7,246.6 433.1,244.3 431.4,241.4 430.7,238.2 430.9,235.0 432.2,232.0 434.4,229.4 437.3,227.5 440.7,226.2 444.5,225.5 448.3,225.3 452.2,225.4 456.0,225.7 459.7,226.2 463.3,226.7 466.7,227.1 469.9,227.5 473.1,227.7 476.2,227.8 479.3,227.8 482.4,227.7 485.6,227.4 488.8,227.0 492.2,226.6 495.8,226.1 499.5,225.6 503.4,225.2 507.4,224.9 511.4,225.0 515.4,225.5 519.0,226.6 522.3,228.3 524.9,230.6 526.6,233.5 527.4,236.7 527.1,239.9 525.9,242.9 523.7,245.5 520.8,247.4 517.4,248.8 513.7,249.5 509.8,249.7 505.9,249.6 502.1,249.3 498.4,248.8 494.9,248.3 491.5,247.9 488.3,247.5 485.2,247.2 482.1,247.1 479.0,247.0 476.0,247.1 472.9,247.4 469.6,247.7 466.3,248.2 462.8,248.7 459.1,249.2 455.3,249.6 451.4,249.9 447.4,249.9 443.5,249.5 439.8,248.6 436.5,247.0 433.8,244.9 431.9,242.2 430.9,239.1 430.9,235.9 431.9,232.8 433.8,230.2 436.5,228.1 439.8,226.6 443.4,225.8 447.2,225.5 451.0,225.5 454.8,225.8 458.5,226.2 462.0,226.7 465.4,227.2 468.6,227.6 471.7,227.9 474.7,228.1 477.7,228.2 480.7,228.1 483.7,227.9 486.8,227.6 490.0,227.2 493.4,226.7 496.9,226.2 500.6,225.7 504.4,225.4 508.3,225.2 512.2,225.3 516.0,225.9 519.5,227.1 522.6,228.9 525.0,231.3 526.5,234.1 527.1,237.3 526.7,240.4 525.3,243.3 523.0,245.7 520.1,247.5 516.7,248.7 513.0,249.3 509.2,249.4 505.4,249.3 501.7,248.9 498.1,248.5 494.7,248.0 491.4,247.6 488.3,247.2 485.2,246.9 482.2,246.8 479.3,246.8 476.3,246.9 473.3,247.1 470.1,247.5 466.9,247.9 463.5,248.4 459.9,248.9 456.2,249.4 452.3,249.7 448.4,249.8 444.5,249.5 440.7,248.8 437.3,247.4 434.5,245.4 432.4,242.8 431.1,239.8 430.9,236.6 431.7,233.5 433.4,230.8 435.9,228.6 439.0,227.0 442.5,226.0 446.3,225.6 450.1,225.5 453.9,225.7 457.6,226.1 461.2,226.6 464.6,227.1 467.8,227.5 471.0,227.8 474.0,228.0 477.1,228.1 480.1,228.1 483.1,227.9 486.2,227.6 489.4,227.2 492.8,226.7 496.4,226.2 500.1,225.7 503.9,225.3 507.8,225.1 511.8,225.2 515.7,225.7 519.3,226.8 522.4,228.6 524.9,230.9 526.6,233.8 527.3,237.0 526.9,240.2 525.6,243.1 523.4,245.6 520.5,247.5 517.1,248.7 513.4,249.4 509.5,249.6 505.7,249.5 501.9,249.1 498.2,248.7 494.7,248.2 491.4,247.8 488.2,247.4 485.0,247.2 482.0,247.0 478.9,247.0 475.9,247.2 472.8,247.4 469.5,247.8 466.2,248.2 462.7,248.7 459.0,249.3 455.2,249.7 451.2,250.0 447.2,249.9 443.3,249.5 439.6,248.6 436.3,247.0 433.6,244.8 431.7,242.0 430.8,238.9 430.8,235.6 431.9,232.6 433.9,230.0 436.7,227.9 440.0,226.5 443.6,225.7 447.5,225.4 451.4,225.4 455.2,225.7 458.9,226.2 462.4,226.7 465.8,227.1 469.0,227.5 472.2,227.8 475.2,228.0 478.3,228.0 481.3,227.9 484.4,227.7 487.6,227.4 490.9,226.9 494.3,226.4 498.0,225.9 501.7,225.5 505.6,225.1 509.6,225.1 513.5,225.4 517.3,226.1 520.7,227.5 523.6,229.5 525.8,232.1 527.0,235.2 527.2,238.4 526.4,241.5 524.7,244.3 522.2,246.5 519.0,248.1 515.5,249.1 511.7,249.5 507.8,249.5 504.0,249.3 500.3,248.9 496.8,248.4 493.3,247.9 490.1,247.5 486.9,247.2 483.9,247.0 480.9,246.9 477.8,246.9 474.8,247.1 471.7,247.4 468.5,247.8 465.1,248.3 461.6,248.8 457.9,249.3 454.1,249.7 450.2,249.9 446.2,249.8 442.4,249.2 438.8,248.1 435.7,246.4 433.2,244.1 431.5,241.2 430.8,238.1 431.1,234.9 432.5,232.0 434.6,229.5 437.5,227.6 440.9,226.4 444.6,225.7 448.4,225.5" fill="none" stroke="#f4f28e" stroke-width="0.80" stroke-linejoin="round" stroke-opacity="1.00"/></g><rect x="413.50" y="217.00" width="131.00" height="41.00" fill="none" stroke="#d6d6d6" stroke-width="0.9"/><line x1="413.50" y1="258.00" x2="413.50" y2="254.80" stroke="#d6d6d6" stroke-width="0.90"/><line x1="426.60" y1="258.00" x2="426.60" y2="254.80" stroke="#d6d6d6" stroke-width="0.90"/><line x1="439.70" y1="258.00" x2="439.70" y2="254.80" stroke="#d6d6d6" stroke-width="0.90"/><line x1="452.80" y1="258.00" x2="452.80" y2="254.80" stroke="#d6d6d6" stroke-width="0.90"/><line x1="465.90" y1="258.00" x2="465.90" y2="254.80" stroke="#d6d6d6" stroke-width="0.90"/><line x1="479.00" y1="258.00" x2="479.00" y2="254.80" stroke="#d6d6d6" stroke-width="0.90"/><line x1="492.10" y1="258.00" x2="492.10" y2="254.80" stroke="#d6d6d6" stroke-width="0.90"/><line x1="505.20" y1="258.00" x2="505.20" y2="254.80" stroke="#d6d6d6" stroke-width="0.90"/><line x1="518.30" y1="258.00" x2="518.30" y2="254.80" stroke="#d6d6d6" stroke-width="0.90"/><line x1="531.40" y1="258.00" x2="531.40" y2="254.80" stroke="#d6d6d6" stroke-width="0.90"/><line x1="544.50" y1="258.00" x2="544.50" y2="254.80" stroke="#d6d6d6" stroke-width="0.90"/><text x="413.50" y="266.9" class="tk" text-anchor="middle">-5</text><text x="426.60" y="266.9" class="tk" text-anchor="middle">-4</text><text x="439.70" y="266.9" class="tk" text-anchor="middle">-3</text><text x="452.80" y="266.9" class="tk" text-anchor="middle">-2</text><text x="465.90" y="266.9" class="tk" text-anchor="middle">-1</text><text x="479.00" y="266.9" class="tk" text-anchor="middle">0</text><text x="492.10" y="266.9" class="tk" text-anchor="middle">1</text><text x="505.20" y="266.9" class="tk" text-anchor="middle">2</text><text x="518.30" y="266.9" class="tk" text-anchor="middle">3</text><text x="531.40" y="266.9" class="tk" text-anchor="middle">4</text><text x="544.50" y="266.9" class="tk" text-anchor="middle">5</text><line x1="413.50" y1="258.00" x2="416.50" y2="258.00" stroke="#d6d6d6" stroke-width="0.90"/><line x1="544.50" y1="258.00" x2="541.50" y2="258.00" stroke="#d6d6d6" stroke-width="0.70"/><text x="410.3" y="261.60" class="tk" text-anchor="end">-5</text><line x1="413.50" y1="237.50" x2="416.50" y2="237.50" stroke="#d6d6d6" stroke-width="0.90"/><line x1="544.50" y1="237.50" x2="541.50" y2="237.50" stroke="#d6d6d6" stroke-width="0.70"/><text x="410.3" y="241.10" class="tk" text-anchor="end">0</text><line x1="413.50" y1="217.00" x2="416.50" y2="217.00" stroke="#d6d6d6" stroke-width="0.90"/><line x1="544.50" y1="217.00" x2="541.50" y2="217.00" stroke="#d6d6d6" stroke-width="0.70"/><text x="410.3" y="220.60" class="tk" text-anchor="end">5</text><text x="479.0" y="274.1" class="at" text-anchor="middle">x(t)</text><text x="400.3" y="241.4" class="at" text-anchor="middle" transform="rotate(-90 400.3 239.2)">v(t)</text><rect x="413.5" y="298.0" width="131.0" height="42.0" fill="#646464"/><line x1="426.60" y1="298.00" x2="426.60" y2="340.00" stroke="#7b7b7b" stroke-width="0.50"/><line x1="452.80" y1="298.00" x2="452.80" y2="340.00" stroke="#7b7b7b" stroke-width="0.50"/><line x1="479.00" y1="298.00" x2="479.00" y2="340.00" stroke="#7b7b7b" stroke-width="0.50"/><line x1="505.20" y1="298.00" x2="505.20" y2="340.00" stroke="#7b7b7b" stroke-width="0.50"/><line x1="531.40" y1="298.00" x2="531.40" y2="340.00" stroke="#7b7b7b" stroke-width="0.50"/><line x1="413.50" y1="337.38" x2="544.50" y2="337.38" stroke="#7b7b7b" stroke-width="0.50"/><line x1="413.50" y1="334.75" x2="544.50" y2="334.75" stroke="#7b7b7b" stroke-width="0.50"/><line x1="413.50" y1="332.12" x2="544.50" y2="332.12" stroke="#7b7b7b" stroke-width="0.50"/><line x1="413.50" y1="329.50" x2="544.50" y2="329.50" stroke="#7b7b7b" stroke-width="0.50"/><line x1="413.50" y1="326.88" x2="544.50" y2="326.88" stroke="#7b7b7b" stroke-width="0.50"/><line x1="413.50" y1="324.25" x2="544.50" y2="324.25" stroke="#7b7b7b" stroke-width="0.50"/><line x1="413.50" y1="321.62" x2="544.50" y2="321.62" stroke="#7b7b7b" stroke-width="0.50"/><line x1="413.50" y1="319.00" x2="544.50" y2="319.00" stroke="#7b7b7b" stroke-width="0.50"/><line x1="413.50" y1="316.38" x2="544.50" y2="316.38" stroke="#7b7b7b" stroke-width="0.50"/><line x1="413.50" y1="313.75" x2="544.50" y2="313.75" stroke="#7b7b7b" stroke-width="0.50"/><line x1="413.50" y1="311.12" x2="544.50" y2="311.12" stroke="#7b7b7b" stroke-width="0.50"/><line x1="413.50" y1="308.50" x2="544.50" y2="308.50" stroke="#7b7b7b" stroke-width="0.50"/><line x1="413.50" y1="305.88" x2="544.50" y2="305.88" stroke="#7b7b7b" stroke-width="0.50"/><line x1="413.50" y1="303.25" x2="544.50" y2="303.25" stroke="#7b7b7b" stroke-width="0.50"/><line x1="413.50" y1="300.62" x2="544.50" y2="300.62" stroke="#7b7b7b" stroke-width="0.50"/><line x1="413.50" y1="298.00" x2="413.50" y2="340.00" stroke="#b4b4b4" stroke-width="0.60"/><line x1="439.70" y1="298.00" x2="439.70" y2="340.00" stroke="#b4b4b4" stroke-width="0.60"/><line x1="465.90" y1="298.00" x2="465.90" y2="340.00" stroke="#b4b4b4" stroke-width="0.60"/><line x1="492.10" y1="298.00" x2="492.10" y2="340.00" stroke="#b4b4b4" stroke-width="0.60"/><line x1="518.30" y1="298.00" x2="518.30" y2="340.00" stroke="#b4b4b4" stroke-width="0.60"/><line x1="544.50" y1="298.00" x2="544.50" y2="340.00" stroke="#b4b4b4" stroke-width="0.60"/><g clip-path="url(#c2)"><rect x="420.1" y="334.5" width="1.35" height="1.35" fill="#f4f28e"/><rect x="517.4" y="307.0" width="1.35" height="1.35" fill="#f4f28e"/><rect x="489.7" y="321.5" width="1.35" height="1.35" fill="#f4f28e"/><rect x="462.2" y="304.4" width="1.35" height="1.35" fill="#f4f28e"/><rect x="506.4" y="315.4" width="1.35" height="1.35" fill="#f4f28e"/><rect x="475.6" y="312.2" width="1.35" height="1.35" fill="#f4f28e"/><rect x="486.7" y="309.5" width="1.35" height="1.35" fill="#f4f28e"/><rect x="492.8" y="315.0" width="1.35" height="1.35" fill="#f4f28e"/><rect x="480.9" y="310.8" width="1.35" height="1.35" fill="#f4f28e"/><rect x="490.5" y="312.3" width="1.35" height="1.35" fill="#f4f28e"/><rect x="486.8" y="312.9" width="1.35" height="1.35" fill="#f4f28e"/><rect x="485.7" y="311.5" width="1.35" height="1.35" fill="#f4f28e"/><rect x="488.8" y="312.7" width="1.35" height="1.35" fill="#f4f28e"/><rect x="486.1" y="312.2" width="1.35" height="1.35" fill="#f4f28e"/><rect x="487.4" y="312.1" width="1.35" height="1.35" fill="#f4f28e"/><rect x="487.5" y="312.5" width="1.35" height="1.35" fill="#f4f28e"/><rect x="486.7" y="312.1" width="1.35" height="1.35" fill="#f4f28e"/><rect x="487.5" y="312.3" width="1.35" height="1.35" fill="#f4f28e"/><rect x="487.0" y="312.3" width="1.35" height="1.35" fill="#f4f28e"/><rect x="487.1" y="312.2" width="1.35" height="1.35" fill="#f4f28e"/><rect x="487.3" y="312.3" width="1.35" height="1.35" fill="#f4f28e"/><rect x="487.0" y="312.2" width="1.35" height="1.35" fill="#f4f28e"/><rect x="487.2" y="312.2" width="1.35" height="1.35" fill="#f4f28e"/><rect x="487.2" y="312.3" width="1.35" height="1.35" fill="#f4f28e"/><rect x="487.1" y="312.2" width="1.35" height="1.35" fill="#f4f28e"/><rect x="487.2" y="312.2" width="1.35" height="1.35" fill="#f4f28e"/><rect x="487.1" y="312.2" width="1.35" height="1.35" fill="#f4f28e"/><rect x="487.1" y="312.2" width="1.35" height="1.35" fill="#f4f28e"/><rect x="487.2" y="312.2" width="1.35" height="1.35" fill="#f4f28e"/><rect x="487.1" y="312.2" width="1.35" height="1.35" fill="#f4f28e"/><rect x="487.1" y="312.2" width="1.35" height="1.35" fill="#f4f28e"/><rect x="487.1" y="312.2" width="1.35" height="1.35" fill="#f4f28e"/><rect x="487.1" y="312.2" width="1.35" height="1.35" fill="#f4f28e"/><rect x="487.1" y="312.2" width="1.35" height="1.35" fill="#f4f28e"/><rect x="487.1" y="312.2" width="1.35" height="1.35" fill="#f4f28e"/><rect x="487.1" y="312.2" width="1.35" height="1.35" fill="#f4f28e"/><rect x="487.1" y="312.2" width="1.35" height="1.35" fill="#f4f28e"/><rect x="487.1" y="312.2" width="1.35" height="1.35" fill="#f4f28e"/><rect x="487.1" y="312.2" width="1.35" height="1.35" fill="#f4f28e"/><rect x="487.1" y="312.2" width="1.35" height="1.35" fill="#f4f28e"/><rect x="487.1" y="312.2" width="1.35" height="1.35" fill="#f4f28e"/><rect x="487.1" y="312.2" width="1.35" height="1.35" fill="#f4f28e"/><rect x="487.1" y="312.2" width="1.35" height="1.35" fill="#f4f28e"/><rect x="487.1" y="312.2" width="1.35" height="1.35" fill="#f4f28e"/><rect x="487.1" y="312.2" width="1.35" height="1.35" fill="#f4f28e"/><rect x="487.1" y="312.2" width="1.35" height="1.35" fill="#f4f28e"/><rect x="487.1" y="312.2" width="1.35" height="1.35" fill="#f4f28e"/><rect x="487.1" y="312.2" width="1.35" height="1.35" fill="#f4f28e"/><rect x="487.1" y="312.2" width="1.35" height="1.35" fill="#f4f28e"/><rect x="487.1" y="312.2" width="1.35" height="1.35" fill="#f4f28e"/><rect x="487.1" y="312.2" width="1.35" height="1.35" fill="#f4f28e"/><rect x="487.1" y="312.2" width="1.35" height="1.35" fill="#f4f28e"/><rect x="487.1" y="312.2" width="1.35" height="1.35" fill="#f4f28e"/><rect x="487.1" y="312.2" width="1.35" height="1.35" fill="#f4f28e"/><rect x="487.1" y="312.2" width="1.35" height="1.35" fill="#f4f28e"/><rect x="487.1" y="312.2" width="1.35" height="1.35" fill="#f4f28e"/><rect x="487.1" y="312.2" width="1.35" height="1.35" fill="#f4f28e"/><rect x="487.1" y="312.2" width="1.35" height="1.35" fill="#f4f28e"/><rect x="487.1" y="312.2" width="1.35" height="1.35" fill="#f4f28e"/><rect x="487.1" y="312.2" width="1.35" height="1.35" fill="#f4f28e"/><rect x="487.1" y="312.2" width="1.35" height="1.35" fill="#f4f28e"/><rect x="487.1" y="312.2" width="1.35" height="1.35" fill="#f4f28e"/><rect x="487.1" y="312.2" width="1.35" height="1.35" fill="#f4f28e"/><rect x="487.1" y="312.2" width="1.35" height="1.35" fill="#f4f28e"/><rect x="487.1" y="312.2" width="1.35" height="1.35" fill="#f4f28e"/><rect x="487.1" y="312.2" width="1.35" height="1.35" fill="#f4f28e"/><rect x="487.1" y="312.2" width="1.35" height="1.35" fill="#f4f28e"/><rect x="487.1" y="312.2" width="1.35" height="1.35" fill="#f4f28e"/><rect x="487.1" y="312.2" width="1.35" height="1.35" fill="#f4f28e"/><rect x="487.1" y="312.2" width="1.35" height="1.35" fill="#f4f28e"/><rect x="487.1" y="312.2" width="1.35" height="1.35" fill="#f4f28e"/><rect x="487.1" y="312.2" width="1.35" height="1.35" fill="#f4f28e"/><rect x="487.1" y="312.2" width="1.35" height="1.35" fill="#f4f28e"/><rect x="487.1" y="312.2" width="1.35" height="1.35" fill="#f4f28e"/><rect x="487.1" y="312.2" width="1.35" height="1.35" fill="#f4f28e"/><rect x="487.1" y="312.2" width="1.35" height="1.35" fill="#f4f28e"/><rect x="487.1" y="312.2" width="1.35" height="1.35" fill="#f4f28e"/><rect x="487.1" y="312.2" width="1.35" height="1.35" fill="#f4f28e"/><rect x="487.1" y="312.2" width="1.35" height="1.35" fill="#f4f28e"/><rect x="487.1" y="312.2" width="1.35" height="1.35" fill="#f4f28e"/><rect x="487.1" y="312.2" width="1.35" height="1.35" fill="#f4f28e"/><rect x="487.1" y="312.2" width="1.35" height="1.35" fill="#f4f28e"/><rect x="487.1" y="312.2" width="1.35" height="1.35" fill="#f4f28e"/><rect x="487.1" y="312.2" width="1.35" height="1.35" fill="#f4f28e"/><rect x="487.1" y="312.2" width="1.35" height="1.35" fill="#f4f28e"/><rect x="487.1" y="312.2" width="1.35" height="1.35" fill="#f4f28e"/><rect x="487.1" y="312.2" width="1.35" height="1.35" fill="#f4f28e"/><rect x="487.1" y="312.2" width="1.35" height="1.35" fill="#f4f28e"/><rect x="487.1" y="312.2" width="1.35" height="1.35" fill="#f4f28e"/><rect x="487.1" y="312.2" width="1.35" height="1.35" fill="#f4f28e"/><rect x="487.1" y="312.2" width="1.35" height="1.35" fill="#f4f28e"/><rect x="487.1" y="312.2" width="1.35" height="1.35" fill="#f4f28e"/><rect x="487.1" y="312.2" width="1.35" height="1.35" fill="#f4f28e"/><rect x="487.1" y="312.2" width="1.35" height="1.35" fill="#f4f28e"/><rect x="487.1" y="312.2" width="1.35" height="1.35" fill="#f4f28e"/><rect x="487.1" y="312.2" width="1.35" height="1.35" fill="#f4f28e"/><rect x="487.1" y="312.2" width="1.35" height="1.35" fill="#f4f28e"/><rect x="487.1" y="312.2" width="1.35" height="1.35" fill="#f4f28e"/><rect x="487.1" y="312.2" width="1.35" height="1.35" fill="#f4f28e"/><rect x="487.1" y="312.2" width="1.35" height="1.35" fill="#f4f28e"/><rect x="487.1" y="312.2" width="1.35" height="1.35" fill="#f4f28e"/><rect x="487.1" y="312.2" width="1.35" height="1.35" fill="#f4f28e"/><rect x="487.1" y="312.2" width="1.35" height="1.35" fill="#f4f28e"/><rect x="487.1" y="312.2" width="1.35" height="1.35" fill="#f4f28e"/><rect x="487.1" y="312.2" width="1.35" height="1.35" fill="#f4f28e"/><rect x="487.1" y="312.2" width="1.35" height="1.35" fill="#f4f28e"/><rect x="487.1" y="312.2" width="1.35" height="1.35" fill="#f4f28e"/><rect x="487.1" y="312.2" width="1.35" height="1.35" fill="#f4f28e"/><rect x="487.1" y="312.2" width="1.35" height="1.35" fill="#f4f28e"/><rect x="487.1" y="312.2" width="1.35" height="1.35" fill="#f4f28e"/><rect x="487.1" y="312.2" width="1.35" height="1.35" fill="#f4f28e"/><rect x="487.1" y="312.2" width="1.35" height="1.35" fill="#f4f28e"/><rect x="487.1" y="312.2" width="1.35" height="1.35" fill="#f4f28e"/><rect x="487.1" y="312.2" width="1.35" height="1.35" fill="#f4f28e"/><rect x="487.1" y="312.2" width="1.35" height="1.35" fill="#f4f28e"/><rect x="487.1" y="312.2" width="1.35" height="1.35" fill="#f4f28e"/><rect x="487.1" y="312.2" width="1.35" height="1.35" fill="#f4f28e"/><rect x="487.1" y="312.2" width="1.35" height="1.35" fill="#f4f28e"/><rect x="487.1" y="312.2" width="1.35" height="1.35" fill="#f4f28e"/><rect x="487.1" y="312.2" width="1.35" height="1.35" fill="#f4f28e"/><rect x="487.1" y="312.2" width="1.35" height="1.35" fill="#f4f28e"/><rect x="487.1" y="312.2" width="1.35" height="1.35" fill="#f4f28e"/><rect x="487.1" y="312.2" width="1.35" height="1.35" fill="#f4f28e"/><rect x="487.1" y="312.2" width="1.35" height="1.35" fill="#f4f28e"/><rect x="487.1" y="312.2" width="1.35" height="1.35" fill="#f4f28e"/><rect x="487.1" y="312.2" width="1.35" height="1.35" fill="#f4f28e"/><rect x="487.1" y="312.2" width="1.35" height="1.35" fill="#f4f28e"/><rect x="487.1" y="312.2" width="1.35" height="1.35" fill="#f4f28e"/><rect x="487.1" y="312.2" width="1.35" height="1.35" fill="#f4f28e"/><rect x="487.1" y="312.2" width="1.35" height="1.35" fill="#f4f28e"/><rect x="487.1" y="312.2" width="1.35" height="1.35" fill="#f4f28e"/><rect x="487.1" y="312.2" width="1.35" height="1.35" fill="#f4f28e"/><rect x="487.1" y="312.2" width="1.35" height="1.35" fill="#f4f28e"/><rect x="487.1" y="312.2" width="1.35" height="1.35" fill="#f4f28e"/><rect x="487.1" y="312.2" width="1.35" height="1.35" fill="#f4f28e"/><rect x="487.1" y="312.2" width="1.35" height="1.35" fill="#f4f28e"/><rect x="487.1" y="312.2" width="1.35" height="1.35" fill="#f4f28e"/><rect x="487.1" y="312.2" width="1.35" height="1.35" fill="#f4f28e"/><rect x="487.1" y="312.2" width="1.35" height="1.35" fill="#f4f28e"/><rect x="487.1" y="312.2" width="1.35" height="1.35" fill="#f4f28e"/><rect x="487.1" y="312.2" width="1.35" height="1.35" fill="#f4f28e"/><rect x="487.1" y="312.2" width="1.35" height="1.35" fill="#f4f28e"/><rect x="487.1" y="312.2" width="1.35" height="1.35" fill="#f4f28e"/><rect x="487.1" y="312.2" width="1.35" height="1.35" fill="#f4f28e"/><rect x="487.1" y="312.2" width="1.35" height="1.35" fill="#f4f28e"/><rect x="487.1" y="312.2" width="1.35" height="1.35" fill="#f4f28e"/><rect x="487.1" y="312.2" width="1.35" height="1.35" fill="#f4f28e"/><rect x="487.1" y="312.2" width="1.35" height="1.35" fill="#f4f28e"/><rect x="487.1" y="312.2" width="1.35" height="1.35" fill="#f4f28e"/><rect x="487.1" y="312.2" width="1.35" height="1.35" fill="#f4f28e"/><rect x="487.1" y="312.2" width="1.35" height="1.35" fill="#f4f28e"/><rect x="487.1" y="312.2" width="1.35" height="1.35" fill="#f4f28e"/><rect x="487.1" y="312.2" width="1.35" height="1.35" fill="#f4f28e"/><rect x="487.1" y="312.2" width="1.35" height="1.35" fill="#f4f28e"/><rect x="487.1" y="312.2" width="1.35" height="1.35" fill="#f4f28e"/><rect x="487.1" y="312.2" width="1.35" height="1.35" fill="#f4f28e"/><rect x="487.1" y="312.2" width="1.35" height="1.35" fill="#f4f28e"/><rect x="487.1" y="312.2" width="1.35" height="1.35" fill="#f4f28e"/><rect x="487.1" y="312.2" width="1.35" height="1.35" fill="#f4f28e"/><rect x="487.1" y="312.2" width="1.35" height="1.35" fill="#f4f28e"/><rect x="487.1" y="312.2" width="1.35" height="1.35" fill="#f4f28e"/><rect x="487.1" y="312.2" width="1.35" height="1.35" fill="#f4f28e"/><rect x="487.1" y="312.2" width="1.35" height="1.35" fill="#f4f28e"/><rect x="487.1" y="312.2" width="1.35" height="1.35" fill="#f4f28e"/><rect x="487.1" y="312.2" width="1.35" height="1.35" fill="#f4f28e"/><rect x="487.1" y="312.2" width="1.35" height="1.35" fill="#f4f28e"/><rect x="487.1" y="312.2" width="1.35" height="1.35" fill="#f4f28e"/><rect x="487.1" y="312.2" width="1.35" height="1.35" fill="#f4f28e"/><rect x="487.1" y="312.2" width="1.35" height="1.35" fill="#f4f28e"/><rect x="487.1" y="312.2" width="1.35" height="1.35" fill="#f4f28e"/><rect x="487.1" y="312.2" width="1.35" height="1.35" fill="#f4f28e"/><rect x="487.1" y="312.2" width="1.35" height="1.35" fill="#f4f28e"/><rect x="487.1" y="312.2" width="1.35" height="1.35" fill="#f4f28e"/><rect x="487.1" y="312.2" width="1.35" height="1.35" fill="#f4f28e"/><rect x="487.1" y="312.2" width="1.35" height="1.35" fill="#f4f28e"/><rect x="487.1" y="312.2" width="1.35" height="1.35" fill="#f4f28e"/><rect x="487.1" y="312.2" width="1.35" height="1.35" fill="#f4f28e"/><rect x="487.1" y="312.2" width="1.35" height="1.35" fill="#f4f28e"/><rect x="487.1" y="312.2" width="1.35" height="1.35" fill="#f4f28e"/><rect x="487.1" y="312.2" width="1.35" height="1.35" fill="#f4f28e"/><rect x="487.1" y="312.2" width="1.35" height="1.35" fill="#f4f28e"/><rect x="487.1" y="312.2" width="1.35" height="1.35" fill="#f4f28e"/><rect x="487.1" y="312.2" width="1.35" height="1.35" fill="#f4f28e"/><rect x="487.1" y="312.2" width="1.35" height="1.35" fill="#f4f28e"/><rect x="487.1" y="312.2" width="1.35" height="1.35" fill="#f4f28e"/><rect x="487.1" y="312.2" width="1.35" height="1.35" fill="#f4f28e"/><rect x="487.1" y="312.2" width="1.35" height="1.35" fill="#f4f28e"/><rect x="487.1" y="312.2" width="1.35" height="1.35" fill="#f4f28e"/><rect x="487.1" y="312.2" width="1.35" height="1.35" fill="#f4f28e"/><rect x="487.1" y="312.2" width="1.35" height="1.35" fill="#f4f28e"/><rect x="487.1" y="312.2" width="1.35" height="1.35" fill="#f4f28e"/><rect x="487.1" y="312.2" width="1.35" height="1.35" fill="#f4f28e"/><rect x="487.1" y="312.2" width="1.35" height="1.35" fill="#f4f28e"/><rect x="487.1" y="312.2" width="1.35" height="1.35" fill="#f4f28e"/><rect x="487.1" y="312.2" width="1.35" height="1.35" fill="#f4f28e"/><rect x="487.1" y="312.2" width="1.35" height="1.35" fill="#f4f28e"/><rect x="487.1" y="312.2" width="1.35" height="1.35" fill="#f4f28e"/><rect x="487.1" y="312.2" width="1.35" height="1.35" fill="#f4f28e"/><rect x="487.1" y="312.2" width="1.35" height="1.35" fill="#f4f28e"/><rect x="487.1" y="312.2" width="1.35" height="1.35" fill="#f4f28e"/><rect x="487.1" y="312.2" width="1.35" height="1.35" fill="#f4f28e"/><rect x="487.1" y="312.2" width="1.35" height="1.35" fill="#f4f28e"/><rect x="487.1" y="312.2" width="1.35" height="1.35" fill="#f4f28e"/><rect x="487.1" y="312.2" width="1.35" height="1.35" fill="#f4f28e"/><rect x="487.1" y="312.2" width="1.35" height="1.35" fill="#f4f28e"/><rect x="487.1" y="312.2" width="1.35" height="1.35" fill="#f4f28e"/><rect x="487.1" y="312.2" width="1.35" height="1.35" fill="#f4f28e"/><rect x="487.1" y="312.2" width="1.35" height="1.35" fill="#f4f28e"/><rect x="487.1" y="312.2" width="1.35" height="1.35" fill="#f4f28e"/><rect x="487.1" y="312.2" width="1.35" height="1.35" fill="#f4f28e"/><rect x="487.1" y="312.2" width="1.35" height="1.35" fill="#f4f28e"/><rect x="487.1" y="312.2" width="1.35" height="1.35" fill="#f4f28e"/><rect x="487.1" y="312.2" width="1.35" height="1.35" fill="#f4f28e"/><rect x="487.1" y="312.2" width="1.35" height="1.35" fill="#f4f28e"/><rect x="487.1" y="312.2" width="1.35" height="1.35" fill="#f4f28e"/><rect x="487.1" y="312.2" width="1.35" height="1.35" fill="#f4f28e"/><rect x="487.1" y="312.2" width="1.35" height="1.35" fill="#f4f28e"/><rect x="487.1" y="312.2" width="1.35" height="1.35" fill="#f4f28e"/><rect x="487.1" y="312.2" width="1.35" height="1.35" fill="#f4f28e"/><rect x="487.1" y="312.2" width="1.35" height="1.35" fill="#f4f28e"/><rect x="487.1" y="312.2" width="1.35" height="1.35" fill="#f4f28e"/><rect x="487.1" y="312.2" width="1.35" height="1.35" fill="#f4f28e"/><rect x="487.1" y="312.2" width="1.35" height="1.35" fill="#f4f28e"/><rect x="487.1" y="312.2" width="1.35" height="1.35" fill="#f4f28e"/><rect x="487.1" y="312.2" width="1.35" height="1.35" fill="#f4f28e"/><rect x="487.1" y="312.2" width="1.35" height="1.35" fill="#f4f28e"/><rect x="487.1" y="312.2" width="1.35" height="1.35" fill="#f4f28e"/><rect x="487.1" y="312.2" width="1.35" height="1.35" fill="#f4f28e"/><rect x="487.1" y="312.2" width="1.35" height="1.35" fill="#f4f28e"/><rect x="487.1" y="312.2" width="1.35" height="1.35" fill="#f4f28e"/><rect x="487.1" y="312.2" width="1.35" height="1.35" fill="#f4f28e"/><rect x="487.1" y="312.2" width="1.35" height="1.35" fill="#f4f28e"/><rect x="487.1" y="312.2" width="1.35" height="1.35" fill="#f4f28e"/><rect x="487.1" y="312.2" width="1.35" height="1.35" fill="#f4f28e"/><rect x="487.1" y="312.2" width="1.35" height="1.35" fill="#f4f28e"/><rect x="487.1" y="312.2" width="1.35" height="1.35" fill="#f4f28e"/><rect x="487.1" y="312.2" width="1.35" height="1.35" fill="#f4f28e"/><rect x="487.1" y="312.2" width="1.35" height="1.35" fill="#f4f28e"/><rect x="487.1" y="312.2" width="1.35" height="1.35" fill="#f4f28e"/><rect x="487.1" y="312.2" width="1.35" height="1.35" fill="#f4f28e"/><rect x="487.1" y="312.2" width="1.35" height="1.35" fill="#f4f28e"/><rect x="487.1" y="312.2" width="1.35" height="1.35" fill="#f4f28e"/><rect x="487.1" y="312.2" width="1.35" height="1.35" fill="#f4f28e"/><rect x="487.1" y="312.2" width="1.35" height="1.35" fill="#f4f28e"/><rect x="487.1" y="312.2" width="1.35" height="1.35" fill="#f4f28e"/><rect x="487.1" y="312.2" width="1.35" height="1.35" fill="#f4f28e"/><rect x="487.1" y="312.2" width="1.35" height="1.35" fill="#f4f28e"/><rect x="487.1" y="312.2" width="1.35" height="1.35" fill="#f4f28e"/><rect x="487.1" y="312.2" width="1.35" height="1.35" fill="#f4f28e"/><rect x="487.1" y="312.2" width="1.35" height="1.35" fill="#f4f28e"/><rect x="487.1" y="312.2" width="1.35" height="1.35" fill="#f4f28e"/><rect x="487.1" y="312.2" width="1.35" height="1.35" fill="#f4f28e"/><rect x="487.1" y="312.2" width="1.35" height="1.35" fill="#f4f28e"/><rect x="487.1" y="312.2" width="1.35" height="1.35" fill="#f4f28e"/><rect x="487.1" y="312.2" width="1.35" height="1.35" fill="#f4f28e"/><rect x="487.1" y="312.2" width="1.35" height="1.35" fill="#f4f28e"/><rect x="487.1" y="312.2" width="1.35" height="1.35" fill="#f4f28e"/><rect x="487.1" y="312.2" width="1.35" height="1.35" fill="#f4f28e"/><rect x="487.1" y="312.2" width="1.35" height="1.35" fill="#f4f28e"/><rect x="487.1" y="312.2" width="1.35" height="1.35" fill="#f4f28e"/><rect x="487.1" y="312.2" width="1.35" height="1.35" fill="#f4f28e"/><rect x="487.1" y="312.2" width="1.35" height="1.35" fill="#f4f28e"/><rect x="487.1" y="312.2" width="1.35" height="1.35" fill="#f4f28e"/><rect x="487.1" y="312.2" width="1.35" height="1.35" fill="#f4f28e"/><rect x="487.1" y="312.2" width="1.35" height="1.35" fill="#f4f28e"/><rect x="487.1" y="312.2" width="1.35" height="1.35" fill="#f4f28e"/><rect x="487.1" y="312.2" width="1.35" height="1.35" fill="#f4f28e"/><rect x="487.1" y="312.2" width="1.35" height="1.35" fill="#f4f28e"/><rect x="487.1" y="312.2" width="1.35" height="1.35" fill="#f4f28e"/><rect x="487.1" y="312.2" width="1.35" height="1.35" fill="#f4f28e"/><rect x="487.1" y="312.2" width="1.35" height="1.35" fill="#f4f28e"/><rect x="487.1" y="312.2" width="1.35" height="1.35" fill="#f4f28e"/><rect x="487.1" y="312.2" width="1.35" height="1.35" fill="#f4f28e"/><rect x="487.1" y="312.2" width="1.35" height="1.35" fill="#f4f28e"/><rect x="487.1" y="312.2" width="1.35" height="1.35" fill="#f4f28e"/><rect x="487.1" y="312.2" width="1.35" height="1.35" fill="#f4f28e"/><rect x="487.1" y="312.2" width="1.35" height="1.35" fill="#f4f28e"/><rect x="487.1" y="312.2" width="1.35" height="1.35" fill="#f4f28e"/><rect x="487.1" y="312.2" width="1.35" height="1.35" fill="#f4f28e"/><rect x="487.1" y="312.2" width="1.35" height="1.35" fill="#f4f28e"/><rect x="487.1" y="312.2" width="1.35" height="1.35" fill="#f4f28e"/><rect x="487.1" y="312.2" width="1.35" height="1.35" fill="#f4f28e"/><rect x="487.1" y="312.2" width="1.35" height="1.35" fill="#f4f28e"/><rect x="487.1" y="312.2" width="1.35" height="1.35" fill="#f4f28e"/><rect x="487.1" y="312.2" width="1.35" height="1.35" fill="#f4f28e"/><rect x="487.1" y="312.2" width="1.35" height="1.35" fill="#f4f28e"/><rect x="487.1" y="312.2" width="1.35" height="1.35" fill="#f4f28e"/><rect x="487.1" y="312.2" width="1.35" height="1.35" fill="#f4f28e"/><rect x="487.1" y="312.2" width="1.35" height="1.35" fill="#f4f28e"/><rect x="487.1" y="312.2" width="1.35" height="1.35" fill="#f4f28e"/><rect x="487.1" y="312.2" width="1.35" height="1.35" fill="#f4f28e"/><rect x="487.1" y="312.2" width="1.35" height="1.35" fill="#f4f28e"/><rect x="487.1" y="312.2" width="1.35" height="1.35" fill="#f4f28e"/><rect x="487.1" y="312.2" width="1.35" height="1.35" fill="#f4f28e"/><rect x="487.1" y="312.2" width="1.35" height="1.35" fill="#f4f28e"/><rect x="487.1" y="312.2" width="1.35" height="1.35" fill="#f4f28e"/><rect x="487.1" y="312.2" width="1.35" height="1.35" fill="#f4f28e"/><rect x="487.1" y="312.2" width="1.35" height="1.35" fill="#f4f28e"/><rect x="487.1" y="312.2" width="1.35" height="1.35" fill="#f4f28e"/><rect x="487.1" y="312.2" width="1.35" height="1.35" fill="#f4f28e"/><rect x="487.1" y="312.2" width="1.35" height="1.35" fill="#f4f28e"/><rect x="487.1" y="312.2" width="1.35" height="1.35" fill="#f4f28e"/><rect x="487.1" y="312.2" width="1.35" height="1.35" fill="#f4f28e"/><rect x="487.1" y="312.2" width="1.35" height="1.35" fill="#f4f28e"/><rect x="487.1" y="312.2" width="1.35" height="1.35" fill="#f4f28e"/><rect x="487.1" y="312.2" width="1.35" height="1.35" fill="#f4f28e"/><rect x="487.1" y="312.2" width="1.35" height="1.35" fill="#f4f28e"/><rect x="487.1" y="312.2" width="1.35" height="1.35" fill="#f4f28e"/><rect x="487.1" y="312.2" width="1.35" height="1.35" fill="#f4f28e"/><rect x="487.1" y="312.2" width="1.35" height="1.35" fill="#f4f28e"/><rect x="487.1" y="312.2" width="1.35" height="1.35" fill="#f4f28e"/><rect x="487.1" y="312.2" width="1.35" height="1.35" fill="#f4f28e"/><rect x="487.1" y="312.2" width="1.35" height="1.35" fill="#f4f28e"/><rect x="487.1" y="312.2" width="1.35" height="1.35" fill="#f4f28e"/><rect x="487.1" y="312.2" width="1.35" height="1.35" fill="#f4f28e"/><rect x="487.1" y="312.2" width="1.35" height="1.35" fill="#f4f28e"/><rect x="487.1" y="312.2" width="1.35" height="1.35" fill="#f4f28e"/><rect x="487.1" y="312.2" width="1.35" height="1.35" fill="#f4f28e"/><rect x="487.1" y="312.2" width="1.35" height="1.35" fill="#f4f28e"/><rect x="487.1" y="312.2" width="1.35" height="1.35" fill="#f4f28e"/><rect x="487.1" y="312.2" width="1.35" height="1.35" fill="#f4f28e"/><rect x="487.1" y="312.2" width="1.35" height="1.35" fill="#f4f28e"/><rect x="487.1" y="312.2" width="1.35" height="1.35" fill="#f4f28e"/><rect x="487.1" y="312.2" width="1.35" height="1.35" fill="#f4f28e"/><rect x="487.1" y="312.2" width="1.35" height="1.35" fill="#f4f28e"/><rect x="487.1" y="312.2" width="1.35" height="1.35" fill="#f4f28e"/><rect x="487.1" y="312.2" width="1.35" height="1.35" fill="#f4f28e"/><rect x="487.1" y="312.2" width="1.35" height="1.35" fill="#f4f28e"/><rect x="487.1" y="312.2" width="1.35" height="1.35" fill="#f4f28e"/><rect x="487.1" y="312.2" width="1.35" height="1.35" fill="#f4f28e"/><rect x="487.1" y="312.2" width="1.35" height="1.35" fill="#f4f28e"/><rect x="487.1" y="312.2" width="1.35" height="1.35" fill="#f4f28e"/><rect x="487.1" y="312.2" width="1.35" height="1.35" fill="#f4f28e"/><rect x="487.1" y="312.2" width="1.35" height="1.35" fill="#f4f28e"/><rect x="487.1" y="312.2" width="1.35" height="1.35" fill="#f4f28e"/><rect x="487.1" y="312.2" width="1.35" height="1.35" fill="#f4f28e"/><rect x="487.1" y="312.2" width="1.35" height="1.35" fill="#f4f28e"/><rect x="487.1" y="312.2" width="1.35" height="1.35" fill="#f4f28e"/><rect x="487.1" y="312.2" width="1.35" height="1.35" fill="#f4f28e"/><rect x="487.1" y="312.2" width="1.35" height="1.35" fill="#f4f28e"/><rect x="487.1" y="312.2" width="1.35" height="1.35" fill="#f4f28e"/><rect x="487.1" y="312.2" width="1.35" height="1.35" fill="#f4f28e"/><rect x="487.1" y="312.2" width="1.35" height="1.35" fill="#f4f28e"/><rect x="487.1" y="312.2" width="1.35" height="1.35" fill="#f4f28e"/><rect x="487.1" y="312.2" width="1.35" height="1.35" fill="#f4f28e"/><rect x="487.1" y="312.2" width="1.35" height="1.35" fill="#f4f28e"/><rect x="487.1" y="312.2" width="1.35" height="1.35" fill="#f4f28e"/><rect x="487.1" y="312.2" width="1.35" height="1.35" fill="#f4f28e"/><rect x="487.1" y="312.2" width="1.35" height="1.35" fill="#f4f28e"/><rect x="487.1" y="312.2" width="1.35" height="1.35" fill="#f4f28e"/><rect x="487.1" y="312.2" width="1.35" height="1.35" fill="#f4f28e"/><rect x="487.1" y="312.2" width="1.35" height="1.35" fill="#f4f28e"/><rect x="487.1" y="312.2" width="1.35" height="1.35" fill="#f4f28e"/><rect x="487.1" y="312.2" width="1.35" height="1.35" fill="#f4f28e"/><rect x="487.1" y="312.2" width="1.35" height="1.35" fill="#f4f28e"/><rect x="487.1" y="312.2" width="1.35" height="1.35" fill="#f4f28e"/><rect x="487.1" y="312.2" width="1.35" height="1.35" fill="#f4f28e"/><rect x="487.1" y="312.2" width="1.35" height="1.35" fill="#f4f28e"/><rect x="487.1" y="312.2" width="1.35" height="1.35" fill="#f4f28e"/><rect x="487.1" y="312.2" width="1.35" height="1.35" fill="#f4f28e"/><rect x="487.1" y="312.2" width="1.35" height="1.35" fill="#f4f28e"/><rect x="487.1" y="312.2" width="1.35" height="1.35" fill="#f4f28e"/><rect x="487.1" y="312.2" width="1.35" height="1.35" fill="#f4f28e"/><rect x="487.1" y="312.2" width="1.35" height="1.35" fill="#f4f28e"/><rect x="487.1" y="312.2" width="1.35" height="1.35" fill="#f4f28e"/><rect x="487.1" y="312.2" width="1.35" height="1.35" fill="#f4f28e"/><rect x="487.1" y="312.2" width="1.35" height="1.35" fill="#f4f28e"/><rect x="487.1" y="312.2" width="1.35" height="1.35" fill="#f4f28e"/><rect x="487.1" y="312.2" width="1.35" height="1.35" fill="#f4f28e"/><rect x="487.1" y="312.2" width="1.35" height="1.35" fill="#f4f28e"/><rect x="487.1" y="312.2" width="1.35" height="1.35" fill="#f4f28e"/><rect x="487.1" y="312.2" width="1.35" height="1.35" fill="#f4f28e"/><rect x="487.1" y="312.2" width="1.35" height="1.35" fill="#f4f28e"/><rect x="487.1" y="312.2" width="1.35" height="1.35" fill="#f4f28e"/><rect x="487.1" y="312.2" width="1.35" height="1.35" fill="#f4f28e"/><rect x="487.1" y="312.2" width="1.35" height="1.35" fill="#f4f28e"/><rect x="487.1" y="312.2" width="1.35" height="1.35" fill="#f4f28e"/><rect x="487.1" y="312.2" width="1.35" height="1.35" fill="#f4f28e"/><rect x="487.1" y="312.2" width="1.35" height="1.35" fill="#f4f28e"/><rect x="487.1" y="312.2" width="1.35" height="1.35" fill="#f4f28e"/><rect x="487.1" y="312.2" width="1.35" height="1.35" fill="#f4f28e"/><rect x="487.1" y="312.2" width="1.35" height="1.35" fill="#f4f28e"/><rect x="487.1" y="312.2" width="1.35" height="1.35" fill="#f4f28e"/><rect x="487.1" y="312.2" width="1.35" height="1.35" fill="#f4f28e"/><rect x="487.1" y="312.2" width="1.35" height="1.35" fill="#f4f28e"/><rect x="487.1" y="312.2" width="1.35" height="1.35" fill="#f4f28e"/><rect x="487.1" y="312.2" width="1.35" height="1.35" fill="#f4f28e"/><rect x="487.1" y="312.2" width="1.35" height="1.35" fill="#f4f28e"/><rect x="487.1" y="312.2" width="1.35" height="1.35" fill="#f4f28e"/><rect x="487.1" y="312.2" width="1.35" height="1.35" fill="#f4f28e"/><rect x="487.1" y="312.2" width="1.35" height="1.35" fill="#f4f28e"/><rect x="487.1" y="312.2" width="1.35" height="1.35" fill="#f4f28e"/><rect x="487.1" y="312.2" width="1.35" height="1.35" fill="#f4f28e"/><rect x="487.1" y="312.2" width="1.35" height="1.35" fill="#f4f28e"/><rect x="487.1" y="312.2" width="1.35" height="1.35" fill="#f4f28e"/><rect x="487.1" y="312.2" width="1.35" height="1.35" fill="#f4f28e"/><rect x="487.1" y="312.2" width="1.35" height="1.35" fill="#f4f28e"/><rect x="487.1" y="312.2" width="1.35" height="1.35" fill="#f4f28e"/><rect x="487.1" y="312.2" width="1.35" height="1.35" fill="#f4f28e"/><rect x="487.1" y="312.2" width="1.35" height="1.35" fill="#f4f28e"/><rect x="487.1" y="312.2" width="1.35" height="1.35" fill="#f4f28e"/><rect x="487.1" y="312.2" width="1.35" height="1.35" fill="#f4f28e"/><rect x="487.1" y="312.2" width="1.35" height="1.35" fill="#f4f28e"/><rect x="487.1" y="312.2" width="1.35" height="1.35" fill="#f4f28e"/><rect x="487.1" y="312.2" width="1.35" height="1.35" fill="#f4f28e"/><rect x="487.1" y="312.2" width="1.35" height="1.35" fill="#f4f28e"/><rect x="487.1" y="312.2" width="1.35" height="1.35" fill="#f4f28e"/><rect x="487.1" y="312.2" width="1.35" height="1.35" fill="#f4f28e"/><rect x="487.1" y="312.2" width="1.35" height="1.35" fill="#f4f28e"/><rect x="487.1" y="312.2" width="1.35" height="1.35" fill="#f4f28e"/><rect x="487.1" y="312.2" width="1.35" height="1.35" fill="#f4f28e"/><rect x="487.1" y="312.2" width="1.35" height="1.35" fill="#f4f28e"/><rect x="487.1" y="312.2" width="1.35" height="1.35" fill="#f4f28e"/><rect x="487.1" y="312.2" width="1.35" height="1.35" fill="#f4f28e"/><rect x="487.1" y="312.2" width="1.35" height="1.35" fill="#f4f28e"/><rect x="487.1" y="312.2" width="1.35" height="1.35" fill="#f4f28e"/><rect x="487.1" y="312.2" width="1.35" height="1.35" fill="#f4f28e"/><rect x="487.1" y="312.2" width="1.35" height="1.35" fill="#f4f28e"/><rect x="487.1" y="312.2" width="1.35" height="1.35" fill="#f4f28e"/><rect x="487.1" y="312.2" width="1.35" height="1.35" fill="#f4f28e"/><rect x="487.1" y="312.2" width="1.35" height="1.35" fill="#f4f28e"/><rect x="487.1" y="312.2" width="1.35" height="1.35" fill="#f4f28e"/><rect x="487.1" y="312.2" width="1.35" height="1.35" fill="#f4f28e"/><rect x="487.1" y="312.2" width="1.35" height="1.35" fill="#f4f28e"/><rect x="487.1" y="312.2" width="1.35" height="1.35" fill="#f4f28e"/><rect x="487.1" y="312.2" width="1.35" height="1.35" fill="#f4f28e"/><rect x="487.1" y="312.2" width="1.35" height="1.35" fill="#f4f28e"/><rect x="487.1" y="312.2" width="1.35" height="1.35" fill="#f4f28e"/><rect x="487.1" y="312.2" width="1.35" height="1.35" fill="#f4f28e"/><rect x="487.1" y="312.2" width="1.35" height="1.35" fill="#f4f28e"/><rect x="487.1" y="312.2" width="1.35" height="1.35" fill="#f4f28e"/><rect x="487.1" y="312.2" width="1.35" height="1.35" fill="#f4f28e"/><rect x="487.1" y="312.2" width="1.35" height="1.35" fill="#f4f28e"/><rect x="487.1" y="312.2" width="1.35" height="1.35" fill="#f4f28e"/><rect x="487.1" y="312.2" width="1.35" height="1.35" fill="#f4f28e"/><rect x="487.1" y="312.2" width="1.35" height="1.35" fill="#f4f28e"/><rect x="487.1" y="312.2" width="1.35" height="1.35" fill="#f4f28e"/><rect x="487.1" y="312.2" width="1.35" height="1.35" fill="#f4f28e"/><rect x="487.1" y="312.2" width="1.35" height="1.35" fill="#f4f28e"/><rect x="487.1" y="312.2" width="1.35" height="1.35" fill="#f4f28e"/><rect x="487.1" y="312.2" width="1.35" height="1.35" fill="#f4f28e"/><rect x="487.1" y="312.2" width="1.35" height="1.35" fill="#f4f28e"/><rect x="487.1" y="312.2" width="1.35" height="1.35" fill="#f4f28e"/><rect x="487.1" y="312.2" width="1.35" height="1.35" fill="#f4f28e"/><rect x="487.1" y="312.2" width="1.35" height="1.35" fill="#f4f28e"/><rect x="487.1" y="312.2" width="1.35" height="1.35" fill="#f4f28e"/><rect x="487.1" y="312.2" width="1.35" height="1.35" fill="#f4f28e"/><rect x="487.1" y="312.2" width="1.35" height="1.35" fill="#f4f28e"/><rect x="487.1" y="312.2" width="1.35" height="1.35" fill="#f4f28e"/><rect x="487.1" y="312.2" width="1.35" height="1.35" fill="#f4f28e"/><rect x="487.1" y="312.2" width="1.35" height="1.35" fill="#f4f28e"/><rect x="487.1" y="312.2" width="1.35" height="1.35" fill="#f4f28e"/><rect x="487.1" y="312.2" width="1.35" height="1.35" fill="#f4f28e"/><rect x="487.1" y="312.2" width="1.35" height="1.35" fill="#f4f28e"/><rect x="487.1" y="312.2" width="1.35" height="1.35" fill="#f4f28e"/><rect x="487.1" y="312.2" width="1.35" height="1.35" fill="#f4f28e"/><rect x="487.1" y="312.2" width="1.35" height="1.35" fill="#f4f28e"/><rect x="487.1" y="312.2" width="1.35" height="1.35" fill="#f4f28e"/><rect x="487.1" y="312.2" width="1.35" height="1.35" fill="#f4f28e"/><rect x="487.1" y="312.2" width="1.35" height="1.35" fill="#f4f28e"/><rect x="487.1" y="312.2" width="1.35" height="1.35" fill="#f4f28e"/><rect x="487.1" y="312.2" width="1.35" height="1.35" fill="#f4f28e"/><rect x="487.1" y="312.2" width="1.35" height="1.35" fill="#f4f28e"/><rect x="487.1" y="312.2" width="1.35" height="1.35" fill="#f4f28e"/><rect x="487.1" y="312.2" width="1.35" height="1.35" fill="#f4f28e"/><rect x="487.1" y="312.2" width="1.35" height="1.35" fill="#f4f28e"/><rect x="487.1" y="312.2" width="1.35" height="1.35" fill="#f4f28e"/><rect x="487.1" y="312.2" width="1.35" height="1.35" fill="#f4f28e"/><rect x="487.1" y="312.2" width="1.35" height="1.35" fill="#f4f28e"/><rect x="487.1" y="312.2" width="1.35" height="1.35" fill="#f4f28e"/><rect x="487.1" y="312.2" width="1.35" height="1.35" fill="#f4f28e"/><rect x="487.1" y="312.2" width="1.35" height="1.35" fill="#f4f28e"/><rect x="487.1" y="312.2" width="1.35" height="1.35" fill="#f4f28e"/><rect x="487.1" y="312.2" width="1.35" height="1.35" fill="#f4f28e"/><rect x="487.1" y="312.2" width="1.35" height="1.35" fill="#f4f28e"/><rect x="487.1" y="312.2" width="1.35" height="1.35" fill="#f4f28e"/><rect x="487.1" y="312.2" width="1.35" height="1.35" fill="#f4f28e"/><rect x="487.1" y="312.2" width="1.35" height="1.35" fill="#f4f28e"/><rect x="487.1" y="312.2" width="1.35" height="1.35" fill="#f4f28e"/><rect x="487.1" y="312.2" width="1.35" height="1.35" fill="#f4f28e"/><rect x="487.1" y="312.2" width="1.35" height="1.35" fill="#f4f28e"/><rect x="487.1" y="312.2" width="1.35" height="1.35" fill="#f4f28e"/><rect x="487.1" y="312.2" width="1.35" height="1.35" fill="#f4f28e"/><rect x="487.1" y="312.2" width="1.35" height="1.35" fill="#f4f28e"/><rect x="487.1" y="312.2" width="1.35" height="1.35" fill="#f4f28e"/><rect x="487.1" y="312.2" width="1.35" height="1.35" fill="#f4f28e"/><rect x="487.1" y="312.2" width="1.35" height="1.35" fill="#f4f28e"/><rect x="487.1" y="312.2" width="1.35" height="1.35" fill="#f4f28e"/><rect x="487.1" y="312.2" width="1.35" height="1.35" fill="#f4f28e"/><rect x="487.1" y="312.2" width="1.35" height="1.35" fill="#f4f28e"/><rect x="487.1" y="312.2" width="1.35" height="1.35" fill="#f4f28e"/><rect x="487.1" y="312.2" width="1.35" height="1.35" fill="#f4f28e"/><rect x="487.1" y="312.2" width="1.35" height="1.35" fill="#f4f28e"/><rect x="487.1" y="312.2" width="1.35" height="1.35" fill="#f4f28e"/><rect x="487.1" y="312.2" width="1.35" height="1.35" fill="#f4f28e"/><rect x="487.1" y="312.2" width="1.35" height="1.35" fill="#f4f28e"/><rect x="487.1" y="312.2" width="1.35" height="1.35" fill="#f4f28e"/><rect x="487.1" y="312.2" width="1.35" height="1.35" fill="#f4f28e"/><rect x="487.1" y="312.2" width="1.35" height="1.35" fill="#f4f28e"/><rect x="487.1" y="312.2" width="1.35" height="1.35" fill="#f4f28e"/></g><rect x="413.50" y="298.00" width="131.00" height="42.00" fill="none" stroke="#d6d6d6" stroke-width="0.9"/><line x1="413.50" y1="340.00" x2="413.50" y2="336.80" stroke="#d6d6d6" stroke-width="0.90"/><line x1="439.70" y1="340.00" x2="439.70" y2="336.80" stroke="#d6d6d6" stroke-width="0.90"/><line x1="465.90" y1="340.00" x2="465.90" y2="336.80" stroke="#d6d6d6" stroke-width="0.90"/><line x1="492.10" y1="340.00" x2="492.10" y2="336.80" stroke="#d6d6d6" stroke-width="0.90"/><line x1="518.30" y1="340.00" x2="518.30" y2="336.80" stroke="#d6d6d6" stroke-width="0.90"/><line x1="544.50" y1="340.00" x2="544.50" y2="336.80" stroke="#d6d6d6" stroke-width="0.90"/><text x="413.50" y="348.9" class="tk" text-anchor="middle">-4</text><text x="439.70" y="348.9" class="tk" text-anchor="middle">-3</text><text x="465.90" y="348.9" class="tk" text-anchor="middle">-2</text><text x="492.10" y="348.9" class="tk" text-anchor="middle">-1</text><text x="518.30" y="348.9" class="tk" text-anchor="middle">0</text><text x="544.50" y="348.9" class="tk" text-anchor="middle">1</text><line x1="413.50" y1="340.00" x2="416.50" y2="340.00" stroke="#d6d6d6" stroke-width="0.90"/><line x1="544.50" y1="340.00" x2="541.50" y2="340.00" stroke="#d6d6d6" stroke-width="0.70"/><text x="410.3" y="343.60" class="tk" text-anchor="end">0</text><line x1="413.50" y1="319.00" x2="416.50" y2="319.00" stroke="#d6d6d6" stroke-width="0.90"/><line x1="544.50" y1="319.00" x2="541.50" y2="319.00" stroke="#d6d6d6" stroke-width="0.70"/><text x="410.3" y="322.60" class="tk" text-anchor="end">2</text><line x1="413.50" y1="298.00" x2="416.50" y2="298.00" stroke="#d6d6d6" stroke-width="0.90"/><line x1="544.50" y1="298.00" x2="541.50" y2="298.00" stroke="#d6d6d6" stroke-width="0.70"/><text x="410.3" y="301.60" class="tk" text-anchor="end">4</text><text x="479.0" y="356.1" class="at" text-anchor="middle">x(t)</text><text x="400.3" y="322.9" class="at" text-anchor="middle" transform="rotate(-90 400.3 320.7)">v(t)</text><rect x="583.5" y="135.5" width="131.0" height="42.0" fill="#646464"/><line x1="590.05" y1="135.50" x2="590.05" y2="177.50" stroke="#7b7b7b" stroke-width="0.50"/><line x1="596.60" y1="135.50" x2="596.60" y2="177.50" stroke="#7b7b7b" stroke-width="0.50"/><line x1="603.15" y1="135.50" x2="603.15" y2="177.50" stroke="#7b7b7b" stroke-width="0.50"/><line x1="616.25" y1="135.50" x2="616.25" y2="177.50" stroke="#7b7b7b" stroke-width="0.50"/><line x1="622.80" y1="135.50" x2="622.80" y2="177.50" stroke="#7b7b7b" stroke-width="0.50"/><line x1="629.35" y1="135.50" x2="629.35" y2="177.50" stroke="#7b7b7b" stroke-width="0.50"/><line x1="642.45" y1="135.50" x2="642.45" y2="177.50" stroke="#7b7b7b" stroke-width="0.50"/><line x1="649.00" y1="135.50" x2="649.00" y2="177.50" stroke="#7b7b7b" stroke-width="0.50"/><line x1="655.55" y1="135.50" x2="655.55" y2="177.50" stroke="#7b7b7b" stroke-width="0.50"/><line x1="668.65" y1="135.50" x2="668.65" y2="177.50" stroke="#7b7b7b" stroke-width="0.50"/><line x1="675.20" y1="135.50" x2="675.20" y2="177.50" stroke="#7b7b7b" stroke-width="0.50"/><line x1="681.75" y1="135.50" x2="681.75" y2="177.50" stroke="#7b7b7b" stroke-width="0.50"/><line x1="694.85" y1="135.50" x2="694.85" y2="177.50" stroke="#7b7b7b" stroke-width="0.50"/><line x1="701.40" y1="135.50" x2="701.40" y2="177.50" stroke="#7b7b7b" stroke-width="0.50"/><line x1="707.95" y1="135.50" x2="707.95" y2="177.50" stroke="#7b7b7b" stroke-width="0.50"/><line x1="583.50" y1="172.25" x2="714.50" y2="172.25" stroke="#7b7b7b" stroke-width="0.50"/><line x1="583.50" y1="161.75" x2="714.50" y2="161.75" stroke="#7b7b7b" stroke-width="0.50"/><line x1="583.50" y1="151.25" x2="714.50" y2="151.25" stroke="#7b7b7b" stroke-width="0.50"/><line x1="583.50" y1="140.75" x2="714.50" y2="140.75" stroke="#7b7b7b" stroke-width="0.50"/><line x1="583.50" y1="135.50" x2="583.50" y2="177.50" stroke="#b4b4b4" stroke-width="0.60"/><line x1="609.70" y1="135.50" x2="609.70" y2="177.50" stroke="#b4b4b4" stroke-width="0.60"/><line x1="635.90" y1="135.50" x2="635.90" y2="177.50" stroke="#b4b4b4" stroke-width="0.60"/><line x1="662.10" y1="135.50" x2="662.10" y2="177.50" stroke="#b4b4b4" stroke-width="0.60"/><line x1="688.30" y1="135.50" x2="688.30" y2="177.50" stroke="#b4b4b4" stroke-width="0.60"/><line x1="714.50" y1="135.50" x2="714.50" y2="177.50" stroke="#b4b4b4" stroke-width="0.60"/><line x1="583.50" y1="156.50" x2="714.50" y2="156.50" stroke="#b4b4b4" stroke-width="0.60"/><line x1="583.50" y1="167.00" x2="714.50" y2="167.00" stroke="#b4b4b4" stroke-width="0.60"/><line x1="583.50" y1="146.00" x2="714.50" y2="146.00" stroke="#b4b4b4" stroke-width="0.60"/><g clip-path="url(#c3)"><polygon points="583.5,156.5 583.6,156.5 583.8,156.5 583.9,156.4 584.0,156.3 584.2,156.1 584.3,155.8 584.4,155.4 584.5,154.9 584.7,154.3 584.8,153.6 584.9,152.7 585.1,151.8 585.2,150.7 585.3,149.6 585.5,148.4 585.6,147.3 585.7,146.1 585.9,145.1 586.0,144.2 586.1,143.5 586.3,143.1 586.4,143.0 586.5,143.2 586.6,143.7 586.8,144.5 586.9,145.4 587.0,146.6 587.2,147.8 587.3,149.1 587.4,150.5 587.6,151.8 587.7,153.1 587.8,154.3 588.0,155.5 588.1,156.5 588.2,157.6 588.3,158.5 588.5,159.3 588.6,160.1 588.7,160.8 588.9,161.4 589.0,161.9 589.1,162.3 589.3,162.8 589.4,163.1 589.5,163.5 589.7,163.8 589.8,164.2 589.9,164.6 590.0,165.0 590.2,165.5 590.3,166.0 590.4,166.6 590.6,167.2 590.7,167.9 590.8,168.5 591.0,169.2 591.1,169.7 591.2,170.2 591.4,170.5 591.5,170.6 591.6,170.4 591.8,170.1 591.9,169.5 592.0,168.8 592.1,167.8 592.3,166.8 592.4,165.6 592.5,164.3 592.7,162.9 592.8,161.5 592.9,160.0 593.1,158.4 593.2,156.8 593.3,155.2 593.5,153.4 593.6,151.6 593.7,149.8 593.8,148.0 594.0,146.1 594.1,144.4 594.2,142.9 594.4,141.7 594.5,140.9 594.6,140.5 594.8,140.7 594.9,141.4 595.0,142.5 595.2,143.9 595.3,145.6 595.4,147.4 595.6,149.3 595.7,151.2 595.8,153.0 595.9,154.9 596.1,156.6 596.2,158.3 596.3,160.0 596.5,161.6 596.6,163.1 596.7,164.6 596.9,165.9 597.0,167.1 597.1,168.1 597.3,168.9 597.4,169.5 597.5,169.8 597.6,169.8 597.8,169.6 597.9,169.2 598.0,168.7 598.2,168.0 598.3,167.3 598.4,166.6 598.6,165.9 598.7,165.3 598.8,164.7 599.0,164.3 599.1,164.0 599.2,163.9 599.4,163.8 599.5,163.9 599.6,164.0 599.7,164.2 599.9,164.4 600.0,164.7 600.1,164.9 600.3,165.2 600.4,165.3 600.5,165.4 600.7,165.4 600.8,165.3 600.9,165.1 601.1,164.8 601.2,164.4 601.3,163.9 601.4,163.3 601.6,162.7 601.7,162.1 601.8,161.4 602.0,160.7 602.1,160.1 602.2,159.6 602.4,159.0 602.5,158.6 602.6,158.3 602.8,158.1 602.9,157.9 603.0,157.9 603.1,158.1 603.3,158.3 603.4,158.6 603.5,159.1 603.7,159.6 603.8,160.2 603.9,160.9 604.1,161.7 604.2,162.4 604.3,163.2 604.5,164.0 604.6,164.6 604.7,165.3 604.9,165.8 605.0,166.2 605.1,166.4 605.2,166.6 605.4,166.5 605.5,166.4 605.6,166.1 605.8,165.7 605.9,165.2 606.0,164.7 606.2,164.2 606.3,163.7 606.4,163.3 606.6,162.9 606.7,162.7 606.8,162.5 606.9,162.5 607.1,162.6 607.2,162.8 607.3,163.1 607.5,163.6 607.6,164.2 607.7,164.9 607.9,165.6 608.0,166.3 608.1,167.1 608.3,167.8 608.4,168.3 608.5,168.8 608.7,169.0 608.8,169.0 608.9,168.8 609.0,168.3 609.2,167.7 609.3,166.8 609.4,165.8 609.6,164.7 609.7,163.6 609.8,162.3 610.0,161.1 610.1,159.9 610.2,158.6 610.4,157.4 610.5,156.3 610.6,155.1 610.7,154.1 610.9,153.1 611.0,152.1 611.1,151.3 611.3,150.5 611.4,149.8 611.5,149.2 611.7,148.6 611.8,148.2 611.9,147.8 612.1,147.5 612.2,147.3 612.3,147.1 612.5,146.9 612.6,146.7 612.7,146.5 612.8,146.3 613.0,146.1 613.1,145.8 613.2,145.5 613.4,145.2 613.5,144.9 613.6,144.6 613.8,144.3 613.9,144.1 614.0,143.9 614.2,143.9 614.3,144.0 614.4,144.2 614.5,144.5 614.7,145.0 614.8,145.7 614.9,146.5 615.1,147.4 615.2,148.4 615.3,149.4 615.5,150.6 615.6,151.8 615.7,153.1 615.9,154.4 616.0,155.8 616.1,157.2 616.2,158.6 616.4,160.1 616.5,161.6 616.6,163.1 616.8,164.6 616.9,166.0 617.0,167.3 617.2,168.4 617.3,169.4 617.4,170.0 617.6,170.3 617.7,170.3 617.8,169.9 618.0,169.3 618.1,168.4 618.2,167.3 618.3,166.2 618.5,165.0 618.6,163.8 618.7,162.7 618.9,161.6 619.0,160.7 619.1,159.8 619.3,159.1 619.4,158.5 619.5,158.0 619.7,157.7 619.8,157.5 619.9,157.3 620.0,157.3 620.2,157.4 620.3,157.5 620.4,157.7 620.6,157.8 620.7,158.0 620.8,158.2 621.0,158.4 621.1,158.5 621.2,158.5 621.4,158.5 621.5,158.4 621.6,158.2 621.8,157.9 621.9,157.5 622.0,157.1 622.1,156.6 622.3,156.0 622.4,155.4 622.5,154.7 622.7,154.0 622.8,153.3 622.9,152.7 623.1,152.0 623.2,151.4 623.3,150.9 623.5,150.4 623.6,150.0 623.7,149.7 623.8,149.5 624.0,149.3 624.1,149.2 624.2,149.2 624.4,149.2 624.5,149.3 624.6,149.3 624.8,149.3 624.9,149.3 625.0,149.3 625.2,149.1 625.3,148.9 625.4,148.6 625.6,148.2 625.7,147.7 625.8,147.1 625.9,146.4 626.1,145.6 626.2,144.9 626.3,144.2 626.5,143.6 626.6,143.2 626.7,142.9 626.9,142.8 627.0,143.0 627.1,143.5 627.3,144.2 627.4,145.1 627.5,146.1 627.6,147.3 627.8,148.7 627.9,150.1 628.0,151.5 628.2,153.1 628.3,154.6 628.4,156.2 628.6,157.8 628.7,159.5 628.8,161.1 629.0,162.8 629.1,164.5 629.2,166.1 629.4,167.5 629.5,168.9 629.6,169.9 629.7,170.7 629.9,171.0 630.0,171.0 630.1,170.6 630.3,169.9 630.4,168.9 630.5,167.6 630.7,166.3 630.8,164.9 630.9,163.6 631.1,162.2 631.2,161.0 631.3,159.8 631.4,158.8 631.6,157.9 631.7,157.1 631.8,156.4 632.0,155.8 632.1,155.3 632.2,154.9 632.4,154.6 632.5,154.3 632.6,154.1 632.8,153.9 632.9,153.7 633.0,153.5 633.1,153.2 633.3,152.9 633.4,152.5 633.5,152.0 633.7,151.3 633.8,150.6 633.9,149.7 634.1,148.7 634.2,147.6 634.3,146.4 634.5,145.2 634.6,144.1 634.7,143.0 634.9,142.1 635.0,141.5 635.1,141.3 635.2,141.4 635.4,141.9 635.5,142.7 635.6,143.8 635.8,145.2 635.9,146.8 636.0,148.5 636.2,150.2 636.3,152.0 636.4,153.9 636.6,155.8 636.7,157.7 636.8,159.7 636.9,161.7 637.1,163.8 637.2,165.8 637.3,167.7 637.5,169.5 637.6,171.0 637.7,172.2 637.9,172.8 638.0,172.9 638.1,172.4 638.3,171.4 638.4,170.1 638.5,168.4 638.7,166.5 638.8,164.6 638.9,162.6 639.0,160.7 639.2,158.8 639.3,157.0 639.4,155.2 639.6,153.5 639.7,151.8 639.8,150.2 640.0,148.8 640.1,147.4 640.2,146.1 640.4,145.0 640.5,144.2 640.6,143.5 640.7,143.1 640.9,143.0 641.0,143.1 641.1,143.5 641.3,144.0 641.4,144.6 641.5,145.3 641.7,146.1 641.8,146.8 641.9,147.4 642.1,147.9 642.2,148.4 642.3,148.7 642.5,148.9 642.6,149.0 642.7,149.0 642.8,148.9 643.0,148.8 643.1,148.6 643.2,148.4 643.4,148.2 643.5,148.0 643.6,147.9 643.8,147.9 643.9,147.9 644.0,148.1 644.2,148.3 644.3,148.6 644.4,149.1 644.5,149.6 644.7,150.1 644.8,150.7 644.9,151.4 645.1,152.0 645.2,152.7 645.3,153.3 645.5,153.8 645.6,154.3 645.7,154.7 645.9,155.0 646.0,155.3 646.1,155.4 646.2,155.3 646.4,155.2 646.5,155.0 646.6,154.6 646.8,154.2 646.9,153.7 647.0,153.0 647.2,152.4 647.3,151.6 647.4,150.9 647.6,150.1 647.7,149.4 647.8,148.7 648.0,148.1 648.1,147.6 648.2,147.2 648.3,146.9 648.5,146.8 648.6,146.8 648.7,146.9 648.9,147.2 649.0,147.5 649.1,147.9 649.3,148.3 649.4,148.7 649.5,149.1 649.7,149.5 649.8,149.7 649.9,149.9 650.0,150.0 650.2,150.0 650.3,149.8 650.4,149.6 650.6,149.1 650.7,148.6 650.8,148.0 651.0,147.3 651.1,146.6 651.2,145.9 651.4,145.2 651.5,144.6 651.6,144.1 651.8,143.9 651.9,143.8 652.0,144.0 652.1,144.4 652.3,145.0 652.4,145.8 652.5,146.8 652.7,147.9 652.8,149.1 652.9,150.3 653.1,151.6 653.2,152.9 653.3,154.3 653.5,155.6 653.6,156.8 653.7,158.1 653.8,159.3 654.0,160.4 654.1,161.6 654.2,162.6 654.4,163.6 654.5,164.4 654.6,165.2 654.8,165.9 654.9,166.4 655.0,166.8 655.2,167.1 655.3,167.2 655.4,167.3 655.5,167.2 655.7,167.1 655.8,167.0 655.9,166.9 656.1,166.7 656.2,166.6 656.3,166.6 656.5,166.5 656.6,166.6 656.7,166.7 656.9,166.9 657.0,167.1 657.1,167.3 657.3,167.5 657.4,167.7 657.5,167.8 657.6,167.9 657.8,167.8 657.9,167.6 658.0,167.3 658.2,166.8 658.3,166.3 658.4,165.6 658.6,164.8 658.7,163.9 658.8,162.9 659.0,161.8 659.1,160.8 659.2,159.6 659.3,158.5 659.5,157.3 659.6,156.1 659.7,155.0 659.9,153.8 660.0,152.7 660.1,151.6 660.3,150.6 660.4,149.6 660.5,148.7 660.7,147.9 660.8,147.2 660.9,146.7 661.1,146.3 661.2,146.0 661.3,145.9 661.4,145.9 661.6,146.0 661.7,146.1 661.8,146.3 662.0,146.6 662.1,146.8 662.2,147.0 662.4,147.2 662.5,147.2 662.6,147.2 662.8,147.2 662.9,147.0 663.0,146.8 663.1,146.5 663.3,146.1 663.4,145.8 663.5,145.5 663.7,145.2 663.8,145.0 663.9,144.9 664.1,145.0 664.2,145.2 664.3,145.5 664.5,146.0 664.6,146.7 664.7,147.5 664.9,148.3 665.0,149.3 665.1,150.4 665.2,151.5 665.4,152.6 665.5,153.8 665.6,155.0 665.8,156.1 665.9,157.3 666.0,158.4 666.2,159.6 666.3,160.6 666.4,161.7 666.6,162.6 666.7,163.5 666.8,164.3 666.9,165.0 667.1,165.6 667.2,166.1 667.3,166.4 667.5,166.7 667.6,166.8 667.7,166.8 667.9,166.8 668.0,166.7 668.1,166.6 668.3,166.4 668.4,166.3 668.5,166.3 668.6,166.2 668.8,166.3 668.9,166.4 669.0,166.6 669.2,166.8 669.3,167.1 669.4,167.4 669.6,167.7 669.7,167.9 669.8,168.1 670.0,168.2 670.1,168.2 670.2,168.1 670.4,167.7 670.5,167.3 670.6,166.7 670.7,166.0 670.9,165.1 671.0,164.2 671.1,163.2 671.3,162.1 671.4,160.9 671.5,159.7 671.7,158.5 671.8,157.3 671.9,156.1 672.1,154.8 672.2,153.6 672.3,152.4 672.4,151.2 672.6,150.1 672.7,149.0 672.8,148.0 673.0,147.2 673.1,146.5 673.2,145.9 673.4,145.5 673.5,145.2 673.6,145.2 673.8,145.3 673.9,145.5 674.0,145.8 674.2,146.2 674.3,146.6 674.4,147.0 674.5,147.4 674.7,147.7 674.8,147.9 674.9,148.1 675.1,148.1 675.2,148.1 675.3,147.9 675.5,147.6 675.6,147.3 675.7,146.9 675.9,146.5 676.0,146.1 676.1,145.8 676.2,145.5 676.4,145.3 676.5,145.3 676.6,145.4 676.8,145.6 676.9,146.1 677.0,146.6 677.2,147.3 677.3,148.2 677.4,149.1 677.6,150.0 677.7,151.1 677.8,152.1 678.0,153.2 678.1,154.2 678.2,155.3 678.3,156.3 678.5,157.3 678.6,158.2 678.7,159.0 678.9,159.8 679.0,160.5 679.1,161.2 679.3,161.7 679.4,162.2 679.5,162.6 679.7,163.0 679.8,163.3 679.9,163.5 680.0,163.7 680.2,163.9 680.3,164.2 680.4,164.4 680.6,164.7 680.7,165.0 680.8,165.4 681.0,165.9 681.1,166.5 681.2,167.0 681.4,167.7 681.5,168.3 681.6,168.9 681.8,169.5 681.9,169.9 682.0,170.2 682.1,170.3 682.3,170.2 682.4,169.9 682.5,169.3 682.7,168.5 682.8,167.6 682.9,166.5 683.1,165.3 683.2,164.0 683.3,162.6 683.5,161.2 683.6,159.7 683.7,158.1 683.8,156.5 684.0,154.9 684.1,153.2 684.2,151.4 684.4,149.6 684.5,147.9 684.6,146.1 684.8,144.5 684.9,143.1 685.0,142.0 685.2,141.3 685.3,141.0 685.4,141.2 685.5,141.9 685.7,142.9 685.8,144.2 685.9,145.8 686.1,147.4 686.2,149.1 686.3,150.8 686.5,152.5 686.6,154.1 686.7,155.6 686.9,157.1 687.0,158.5 687.1,159.8 687.3,161.0 687.4,162.2 687.5,163.2 687.6,164.2 687.8,165.1 687.9,165.8 688.0,166.5 688.2,167.1 688.3,167.5 688.4,167.8 688.6,168.1 688.7,168.2 688.8,168.3 689.0,168.4 689.1,168.3 689.2,168.3 689.3,168.2 689.5,168.1 689.6,168.1 689.7,168.0 689.9,167.9 690.0,167.8 690.1,167.7 690.3,167.6 690.4,167.4 690.5,167.2 690.7,166.9 690.8,166.5 690.9,166.0 691.1,165.5 691.2,164.8 691.3,164.1 691.4,163.3 691.6,162.5 691.7,161.6 691.8,160.6 692.0,159.5 692.1,158.4 692.2,157.3 692.4,156.2 692.5,155.0 692.6,153.8 692.8,152.6 692.9,151.4 693.0,150.3 693.1,149.2 693.3,148.1 693.4,147.2 693.5,146.4 693.7,145.8 693.8,145.3 693.9,145.1 694.1,145.0 694.2,145.1 694.3,145.3 694.5,145.7 694.6,146.2 694.7,146.7 694.9,147.2 695.0,147.8 695.1,148.2 695.2,148.6 695.4,148.9 695.5,149.1 695.6,149.1 695.8,149.1 695.9,148.9 696.0,148.6 696.2,148.2 696.3,147.8 696.4,147.3 696.6,146.7 696.7,146.3 696.8,145.8 696.9,145.5 697.1,145.2 697.2,145.2 697.3,145.3 697.5,145.5 697.6,146.0 697.7,146.6 697.9,147.3 698.0,148.2 698.1,149.1 698.3,150.1 698.4,151.1 698.5,152.1 698.6,153.2 698.8,154.2 698.9,155.1 699.0,156.1 699.2,156.9 699.3,157.7 699.4,158.4 699.6,159.0 699.7,159.6 699.8,160.0 700.0,160.4 700.1,160.7 700.2,161.0 700.4,161.2 700.5,161.3 700.6,161.5 700.7,161.6 700.9,161.8 701.0,162.0 701.1,162.3 701.3,162.7 701.4,163.1 701.5,163.7 701.7,164.3 701.8,165.1 701.9,165.9 702.1,166.9 702.2,167.8 702.3,168.8 702.4,169.7 702.6,170.4 702.7,170.9 702.8,171.2 703.0,171.2 703.1,170.8 703.2,170.2 703.4,169.2 703.5,168.1 703.6,166.7 703.8,165.3 703.9,163.7 704.0,162.1 704.2,160.4 704.3,158.6 704.4,156.9 704.5,155.0 704.7,153.1 704.8,151.2 704.9,149.2 705.1,147.3 705.2,145.4 705.3,143.7 705.5,142.2 705.6,141.0 705.7,140.4 705.9,140.3 706.0,140.7 706.1,141.6 706.2,142.9 706.4,144.5 706.5,146.3 706.6,148.3 706.8,150.2 706.9,152.1 707.0,154.0 707.2,155.8 707.3,157.6 707.4,159.3 707.6,161.0 707.7,162.6 707.8,164.1 708.0,165.5 708.1,166.7 708.2,167.8 708.3,168.8 708.5,169.4 708.6,169.8 708.7,170.0 708.9,169.9 709.0,169.5 709.1,169.0 709.3,168.4 709.4,167.6 709.5,166.9 709.7,166.2 709.8,165.5 709.9,164.9 710.0,164.5 710.2,164.1 710.3,163.9 710.4,163.8 710.6,163.8 710.7,163.9 710.8,164.0 711.0,164.2 711.1,164.5 711.2,164.7 711.4,164.9 711.5,165.1 711.6,165.2 711.7,165.2 711.9,165.1 712.0,165.0 712.1,164.7 712.3,164.3 712.4,163.9 712.5,163.3 712.7,162.7 712.8,162.1 712.9,161.5 713.1,160.8 713.2,160.2 713.3,159.7 713.5,159.2 713.6,158.7 713.7,158.4 713.8,158.2 714.0,158.1 714.1,158.1 714.2,158.2 714.4,158.4 714.5,158.8 714.5,177.5 583.5,177.5" fill="url(#tg)"/><polyline points="583.5,156.5 583.6,156.5 583.8,156.5 583.9,156.4 584.0,156.3 584.2,156.1 584.3,155.8 584.4,155.4 584.5,154.9 584.7,154.3 584.8,153.6 584.9,152.7 585.1,151.8 585.2,150.7 585.3,149.6 585.5,148.4 585.6,147.3 585.7,146.1 585.9,145.1 586.0,144.2 586.1,143.5 586.3,143.1 586.4,143.0 586.5,143.2 586.6,143.7 586.8,144.5 586.9,145.4 587.0,146.6 587.2,147.8 587.3,149.1 587.4,150.5 587.6,151.8 587.7,153.1 587.8,154.3 588.0,155.5 588.1,156.5 588.2,157.6 588.3,158.5 588.5,159.3 588.6,160.1 588.7,160.8 588.9,161.4 589.0,161.9 589.1,162.3 589.3,162.8 589.4,163.1 589.5,163.5 589.7,163.8 589.8,164.2 589.9,164.6 590.0,165.0 590.2,165.5 590.3,166.0 590.4,166.6 590.6,167.2 590.7,167.9 590.8,168.5 591.0,169.2 591.1,169.7 591.2,170.2 591.4,170.5 591.5,170.6 591.6,170.4 591.8,170.1 591.9,169.5 592.0,168.8 592.1,167.8 592.3,166.8 592.4,165.6 592.5,164.3 592.7,162.9 592.8,161.5 592.9,160.0 593.1,158.4 593.2,156.8 593.3,155.2 593.5,153.4 593.6,151.6 593.7,149.8 593.8,148.0 594.0,146.1 594.1,144.4 594.2,142.9 594.4,141.7 594.5,140.9 594.6,140.5 594.8,140.7 594.9,141.4 595.0,142.5 595.2,143.9 595.3,145.6 595.4,147.4 595.6,149.3 595.7,151.2 595.8,153.0 595.9,154.9 596.1,156.6 596.2,158.3 596.3,160.0 596.5,161.6 596.6,163.1 596.7,164.6 596.9,165.9 597.0,167.1 597.1,168.1 597.3,168.9 597.4,169.5 597.5,169.8 597.6,169.8 597.8,169.6 597.9,169.2 598.0,168.7 598.2,168.0 598.3,167.3 598.4,166.6 598.6,165.9 598.7,165.3 598.8,164.7 599.0,164.3 599.1,164.0 599.2,163.9 599.4,163.8 599.5,163.9 599.6,164.0 599.7,164.2 599.9,164.4 600.0,164.7 600.1,164.9 600.3,165.2 600.4,165.3 600.5,165.4 600.7,165.4 600.8,165.3 600.9,165.1 601.1,164.8 601.2,164.4 601.3,163.9 601.4,163.3 601.6,162.7 601.7,162.1 601.8,161.4 602.0,160.7 602.1,160.1 602.2,159.6 602.4,159.0 602.5,158.6 602.6,158.3 602.8,158.1 602.9,157.9 603.0,157.9 603.1,158.1 603.3,158.3 603.4,158.6 603.5,159.1 603.7,159.6 603.8,160.2 603.9,160.9 604.1,161.7 604.2,162.4 604.3,163.2 604.5,164.0 604.6,164.6 604.7,165.3 604.9,165.8 605.0,166.2 605.1,166.4 605.2,166.6 605.4,166.5 605.5,166.4 605.6,166.1 605.8,165.7 605.9,165.2 606.0,164.7 606.2,164.2 606.3,163.7 606.4,163.3 606.6,162.9 606.7,162.7 606.8,162.5 606.9,162.5 607.1,162.6 607.2,162.8 607.3,163.1 607.5,163.6 607.6,164.2 607.7,164.9 607.9,165.6 608.0,166.3 608.1,167.1 608.3,167.8 608.4,168.3 608.5,168.8 608.7,169.0 608.8,169.0 608.9,168.8 609.0,168.3 609.2,167.7 609.3,166.8 609.4,165.8 609.6,164.7 609.7,163.6 609.8,162.3 610.0,161.1 610.1,159.9 610.2,158.6 610.4,157.4 610.5,156.3 610.6,155.1 610.7,154.1 610.9,153.1 611.0,152.1 611.1,151.3 611.3,150.5 611.4,149.8 611.5,149.2 611.7,148.6 611.8,148.2 611.9,147.8 612.1,147.5 612.2,147.3 612.3,147.1 612.5,146.9 612.6,146.7 612.7,146.5 612.8,146.3 613.0,146.1 613.1,145.8 613.2,145.5 613.4,145.2 613.5,144.9 613.6,144.6 613.8,144.3 613.9,144.1 614.0,143.9 614.2,143.9 614.3,144.0 614.4,144.2 614.5,144.5 614.7,145.0 614.8,145.7 614.9,146.5 615.1,147.4 615.2,148.4 615.3,149.4 615.5,150.6 615.6,151.8 615.7,153.1 615.9,154.4 616.0,155.8 616.1,157.2 616.2,158.6 616.4,160.1 616.5,161.6 616.6,163.1 616.8,164.6 616.9,166.0 617.0,167.3 617.2,168.4 617.3,169.4 617.4,170.0 617.6,170.3 617.7,170.3 617.8,169.9 618.0,169.3 618.1,168.4 618.2,167.3 618.3,166.2 618.5,165.0 618.6,163.8 618.7,162.7 618.9,161.6 619.0,160.7 619.1,159.8 619.3,159.1 619.4,158.5 619.5,158.0 619.7,157.7 619.8,157.5 619.9,157.3 620.0,157.3 620.2,157.4 620.3,157.5 620.4,157.7 620.6,157.8 620.7,158.0 620.8,158.2 621.0,158.4 621.1,158.5 621.2,158.5 621.4,158.5 621.5,158.4 621.6,158.2 621.8,157.9 621.9,157.5 622.0,157.1 622.1,156.6 622.3,156.0 622.4,155.4 622.5,154.7 622.7,154.0 622.8,153.3 622.9,152.7 623.1,152.0 623.2,151.4 623.3,150.9 623.5,150.4 623.6,150.0 623.7,149.7 623.8,149.5 624.0,149.3 624.1,149.2 624.2,149.2 624.4,149.2 624.5,149.3 624.6,149.3 624.8,149.3 624.9,149.3 625.0,149.3 625.2,149.1 625.3,148.9 625.4,148.6 625.6,148.2 625.7,147.7 625.8,147.1 625.9,146.4 626.1,145.6 626.2,144.9 626.3,144.2 626.5,143.6 626.6,143.2 626.7,142.9 626.9,142.8 627.0,143.0 627.1,143.5 627.3,144.2 627.4,145.1 627.5,146.1 627.6,147.3 627.8,148.7 627.9,150.1 628.0,151.5 628.2,153.1 628.3,154.6 628.4,156.2 628.6,157.8 628.7,159.5 628.8,161.1 629.0,162.8 629.1,164.5 629.2,166.1 629.4,167.5 629.5,168.9 629.6,169.9 629.7,170.7 629.9,171.0 630.0,171.0 630.1,170.6 630.3,169.9 630.4,168.9 630.5,167.6 630.7,166.3 630.8,164.9 630.9,163.6 631.1,162.2 631.2,161.0 631.3,159.8 631.4,158.8 631.6,157.9 631.7,157.1 631.8,156.4 632.0,155.8 632.1,155.3 632.2,154.9 632.4,154.6 632.5,154.3 632.6,154.1 632.8,153.9 632.9,153.7 633.0,153.5 633.1,153.2 633.3,152.9 633.4,152.5 633.5,152.0 633.7,151.3 633.8,150.6 633.9,149.7 634.1,148.7 634.2,147.6 634.3,146.4 634.5,145.2 634.6,144.1 634.7,143.0 634.9,142.1 635.0,141.5 635.1,141.3 635.2,141.4 635.4,141.9 635.5,142.7 635.6,143.8 635.8,145.2 635.9,146.8 636.0,148.5 636.2,150.2 636.3,152.0 636.4,153.9 636.6,155.8 636.7,157.7 636.8,159.7 636.9,161.7 637.1,163.8 637.2,165.8 637.3,167.7 637.5,169.5 637.6,171.0 637.7,172.2 637.9,172.8 638.0,172.9 638.1,172.4 638.3,171.4 638.4,170.1 638.5,168.4 638.7,166.5 638.8,164.6 638.9,162.6 639.0,160.7 639.2,158.8 639.3,157.0 639.4,155.2 639.6,153.5 639.7,151.8 639.8,150.2 640.0,148.8 640.1,147.4 640.2,146.1 640.4,145.0 640.5,144.2 640.6,143.5 640.7,143.1 640.9,143.0 641.0,143.1 641.1,143.5 641.3,144.0 641.4,144.6 641.5,145.3 641.7,146.1 641.8,146.8 641.9,147.4 642.1,147.9 642.2,148.4 642.3,148.7 642.5,148.9 642.6,149.0 642.7,149.0 642.8,148.9 643.0,148.8 643.1,148.6 643.2,148.4 643.4,148.2 643.5,148.0 643.6,147.9 643.8,147.9 643.9,147.9 644.0,148.1 644.2,148.3 644.3,148.6 644.4,149.1 644.5,149.6 644.7,150.1 644.8,150.7 644.9,151.4 645.1,152.0 645.2,152.7 645.3,153.3 645.5,153.8 645.6,154.3 645.7,154.7 645.9,155.0 646.0,155.3 646.1,155.4 646.2,155.3 646.4,155.2 646.5,155.0 646.6,154.6 646.8,154.2 646.9,153.7 647.0,153.0 647.2,152.4 647.3,151.6 647.4,150.9 647.6,150.1 647.7,149.4 647.8,148.7 648.0,148.1 648.1,147.6 648.2,147.2 648.3,146.9 648.5,146.8 648.6,146.8 648.7,146.9 648.9,147.2 649.0,147.5 649.1,147.9 649.3,148.3 649.4,148.7 649.5,149.1 649.7,149.5 649.8,149.7 649.9,149.9 650.0,150.0 650.2,150.0 650.3,149.8 650.4,149.6 650.6,149.1 650.7,148.6 650.8,148.0 651.0,147.3 651.1,146.6 651.2,145.9 651.4,145.2 651.5,144.6 651.6,144.1 651.8,143.9 651.9,143.8 652.0,144.0 652.1,144.4 652.3,145.0 652.4,145.8 652.5,146.8 652.7,147.9 652.8,149.1 652.9,150.3 653.1,151.6 653.2,152.9 653.3,154.3 653.5,155.6 653.6,156.8 653.7,158.1 653.8,159.3 654.0,160.4 654.1,161.6 654.2,162.6 654.4,163.6 654.5,164.4 654.6,165.2 654.8,165.9 654.9,166.4 655.0,166.8 655.2,167.1 655.3,167.2 655.4,167.3 655.5,167.2 655.7,167.1 655.8,167.0 655.9,166.9 656.1,166.7 656.2,166.6 656.3,166.6 656.5,166.5 656.6,166.6 656.7,166.7 656.9,166.9 657.0,167.1 657.1,167.3 657.3,167.5 657.4,167.7 657.5,167.8 657.6,167.9 657.8,167.8 657.9,167.6 658.0,167.3 658.2,166.8 658.3,166.3 658.4,165.6 658.6,164.8 658.7,163.9 658.8,162.9 659.0,161.8 659.1,160.8 659.2,159.6 659.3,158.5 659.5,157.3 659.6,156.1 659.7,155.0 659.9,153.8 660.0,152.7 660.1,151.6 660.3,150.6 660.4,149.6 660.5,148.7 660.7,147.9 660.8,147.2 660.9,146.7 661.1,146.3 661.2,146.0 661.3,145.9 661.4,145.9 661.6,146.0 661.7,146.1 661.8,146.3 662.0,146.6 662.1,146.8 662.2,147.0 662.4,147.2 662.5,147.2 662.6,147.2 662.8,147.2 662.9,147.0 663.0,146.8 663.1,146.5 663.3,146.1 663.4,145.8 663.5,145.5 663.7,145.2 663.8,145.0 663.9,144.9 664.1,145.0 664.2,145.2 664.3,145.5 664.5,146.0 664.6,146.7 664.7,147.5 664.9,148.3 665.0,149.3 665.1,150.4 665.2,151.5 665.4,152.6 665.5,153.8 665.6,155.0 665.8,156.1 665.9,157.3 666.0,158.4 666.2,159.6 666.3,160.6 666.4,161.7 666.6,162.6 666.7,163.5 666.8,164.3 666.9,165.0 667.1,165.6 667.2,166.1 667.3,166.4 667.5,166.7 667.6,166.8 667.7,166.8 667.9,166.8 668.0,166.7 668.1,166.6 668.3,166.4 668.4,166.3 668.5,166.3 668.6,166.2 668.8,166.3 668.9,166.4 669.0,166.6 669.2,166.8 669.3,167.1 669.4,167.4 669.6,167.7 669.7,167.9 669.8,168.1 670.0,168.2 670.1,168.2 670.2,168.1 670.4,167.7 670.5,167.3 670.6,166.7 670.7,166.0 670.9,165.1 671.0,164.2 671.1,163.2 671.3,162.1 671.4,160.9 671.5,159.7 671.7,158.5 671.8,157.3 671.9,156.1 672.1,154.8 672.2,153.6 672.3,152.4 672.4,151.2 672.6,150.1 672.7,149.0 672.8,148.0 673.0,147.2 673.1,146.5 673.2,145.9 673.4,145.5 673.5,145.2 673.6,145.2 673.8,145.3 673.9,145.5 674.0,145.8 674.2,146.2 674.3,146.6 674.4,147.0 674.5,147.4 674.7,147.7 674.8,147.9 674.9,148.1 675.1,148.1 675.2,148.1 675.3,147.9 675.5,147.6 675.6,147.3 675.7,146.9 675.9,146.5 676.0,146.1 676.1,145.8 676.2,145.5 676.4,145.3 676.5,145.3 676.6,145.4 676.8,145.6 676.9,146.1 677.0,146.6 677.2,147.3 677.3,148.2 677.4,149.1 677.6,150.0 677.7,151.1 677.8,152.1 678.0,153.2 678.1,154.2 678.2,155.3 678.3,156.3 678.5,157.3 678.6,158.2 678.7,159.0 678.9,159.8 679.0,160.5 679.1,161.2 679.3,161.7 679.4,162.2 679.5,162.6 679.7,163.0 679.8,163.3 679.9,163.5 680.0,163.7 680.2,163.9 680.3,164.2 680.4,164.4 680.6,164.7 680.7,165.0 680.8,165.4 681.0,165.9 681.1,166.5 681.2,167.0 681.4,167.7 681.5,168.3 681.6,168.9 681.8,169.5 681.9,169.9 682.0,170.2 682.1,170.3 682.3,170.2 682.4,169.9 682.5,169.3 682.7,168.5 682.8,167.6 682.9,166.5 683.1,165.3 683.2,164.0 683.3,162.6 683.5,161.2 683.6,159.7 683.7,158.1 683.8,156.5 684.0,154.9 684.1,153.2 684.2,151.4 684.4,149.6 684.5,147.9 684.6,146.1 684.8,144.5 684.9,143.1 685.0,142.0 685.2,141.3 685.3,141.0 685.4,141.2 685.5,141.9 685.7,142.9 685.8,144.2 685.9,145.8 686.1,147.4 686.2,149.1 686.3,150.8 686.5,152.5 686.6,154.1 686.7,155.6 686.9,157.1 687.0,158.5 687.1,159.8 687.3,161.0 687.4,162.2 687.5,163.2 687.6,164.2 687.8,165.1 687.9,165.8 688.0,166.5 688.2,167.1 688.3,167.5 688.4,167.8 688.6,168.1 688.7,168.2 688.8,168.3 689.0,168.4 689.1,168.3 689.2,168.3 689.3,168.2 689.5,168.1 689.6,168.1 689.7,168.0 689.9,167.9 690.0,167.8 690.1,167.7 690.3,167.6 690.4,167.4 690.5,167.2 690.7,166.9 690.8,166.5 690.9,166.0 691.1,165.5 691.2,164.8 691.3,164.1 691.4,163.3 691.6,162.5 691.7,161.6 691.8,160.6 692.0,159.5 692.1,158.4 692.2,157.3 692.4,156.2 692.5,155.0 692.6,153.8 692.8,152.6 692.9,151.4 693.0,150.3 693.1,149.2 693.3,148.1 693.4,147.2 693.5,146.4 693.7,145.8 693.8,145.3 693.9,145.1 694.1,145.0 694.2,145.1 694.3,145.3 694.5,145.7 694.6,146.2 694.7,146.7 694.9,147.2 695.0,147.8 695.1,148.2 695.2,148.6 695.4,148.9 695.5,149.1 695.6,149.1 695.8,149.1 695.9,148.9 696.0,148.6 696.2,148.2 696.3,147.8 696.4,147.3 696.6,146.7 696.7,146.3 696.8,145.8 696.9,145.5 697.1,145.2 697.2,145.2 697.3,145.3 697.5,145.5 697.6,146.0 697.7,146.6 697.9,147.3 698.0,148.2 698.1,149.1 698.3,150.1 698.4,151.1 698.5,152.1 698.6,153.2 698.8,154.2 698.9,155.1 699.0,156.1 699.2,156.9 699.3,157.7 699.4,158.4 699.6,159.0 699.7,159.6 699.8,160.0 700.0,160.4 700.1,160.7 700.2,161.0 700.4,161.2 700.5,161.3 700.6,161.5 700.7,161.6 700.9,161.8 701.0,162.0 701.1,162.3 701.3,162.7 701.4,163.1 701.5,163.7 701.7,164.3 701.8,165.1 701.9,165.9 702.1,166.9 702.2,167.8 702.3,168.8 702.4,169.7 702.6,170.4 702.7,170.9 702.8,171.2 703.0,171.2 703.1,170.8 703.2,170.2 703.4,169.2 703.5,168.1 703.6,166.7 703.8,165.3 703.9,163.7 704.0,162.1 704.2,160.4 704.3,158.6 704.4,156.9 704.5,155.0 704.7,153.1 704.8,151.2 704.9,149.2 705.1,147.3 705.2,145.4 705.3,143.7 705.5,142.2 705.6,141.0 705.7,140.4 705.9,140.3 706.0,140.7 706.1,141.6 706.2,142.9 706.4,144.5 706.5,146.3 706.6,148.3 706.8,150.2 706.9,152.1 707.0,154.0 707.2,155.8 707.3,157.6 707.4,159.3 707.6,161.0 707.7,162.6 707.8,164.1 708.0,165.5 708.1,166.7 708.2,167.8 708.3,168.8 708.5,169.4 708.6,169.8 708.7,170.0 708.9,169.9 709.0,169.5 709.1,169.0 709.3,168.4 709.4,167.6 709.5,166.9 709.7,166.2 709.8,165.5 709.9,164.9 710.0,164.5 710.2,164.1 710.3,163.9 710.4,163.8 710.6,163.8 710.7,163.9 710.8,164.0 711.0,164.2 711.1,164.5 711.2,164.7 711.4,164.9 711.5,165.1 711.6,165.2 711.7,165.2 711.9,165.1 712.0,165.0 712.1,164.7 712.3,164.3 712.4,163.9 712.5,163.3 712.7,162.7 712.8,162.1 712.9,161.5 713.1,160.8 713.2,160.2 713.3,159.7 713.5,159.2 713.6,158.7 713.7,158.4 713.8,158.2 714.0,158.1 714.1,158.1 714.2,158.2 714.4,158.4 714.5,158.8" fill="none" stroke="#f4f28e" stroke-width="1.10" stroke-linejoin="round" stroke-opacity="1.00"/></g><rect x="583.50" y="135.50" width="131.00" height="42.00" fill="none" stroke="#d6d6d6" stroke-width="0.9"/><line x1="583.50" y1="177.50" x2="583.50" y2="174.30" stroke="#d6d6d6" stroke-width="0.90"/><line x1="596.60" y1="177.50" x2="596.60" y2="174.30" stroke="#d6d6d6" stroke-width="0.90"/><line x1="609.70" y1="177.50" x2="609.70" y2="174.30" stroke="#d6d6d6" stroke-width="0.90"/><line x1="622.80" y1="177.50" x2="622.80" y2="174.30" stroke="#d6d6d6" stroke-width="0.90"/><line x1="635.90" y1="177.50" x2="635.90" y2="174.30" stroke="#d6d6d6" stroke-width="0.90"/><line x1="649.00" y1="177.50" x2="649.00" y2="174.30" stroke="#d6d6d6" stroke-width="0.90"/><line x1="662.10" y1="177.50" x2="662.10" y2="174.30" stroke="#d6d6d6" stroke-width="0.90"/><line x1="675.20" y1="177.50" x2="675.20" y2="174.30" stroke="#d6d6d6" stroke-width="0.90"/><line x1="688.30" y1="177.50" x2="688.30" y2="174.30" stroke="#d6d6d6" stroke-width="0.90"/><line x1="701.40" y1="177.50" x2="701.40" y2="174.30" stroke="#d6d6d6" stroke-width="0.90"/><line x1="714.50" y1="177.50" x2="714.50" y2="174.30" stroke="#d6d6d6" stroke-width="0.90"/><text x="583.50" y="186.4" class="tk" text-anchor="middle">0</text><text x="596.60" y="186.4" class="tk" text-anchor="middle">10</text><text x="609.70" y="186.4" class="tk" text-anchor="middle">20</text><text x="622.80" y="186.4" class="tk" text-anchor="middle">30</text><text x="635.90" y="186.4" class="tk" text-anchor="middle">40</text><text x="649.00" y="186.4" class="tk" text-anchor="middle">50</text><text x="662.10" y="186.4" class="tk" text-anchor="middle">60</text><text x="675.20" y="186.4" class="tk" text-anchor="middle">70</text><text x="688.30" y="186.4" class="tk" text-anchor="middle">80</text><text x="701.40" y="186.4" class="tk" text-anchor="middle">90</text><text x="714.50" y="186.4" class="tk" text-anchor="middle">100</text><line x1="583.50" y1="177.50" x2="586.50" y2="177.50" stroke="#d6d6d6" stroke-width="0.90"/><line x1="714.50" y1="177.50" x2="711.50" y2="177.50" stroke="#d6d6d6" stroke-width="0.70"/><text x="580.3" y="181.10" class="tk" text-anchor="end">-5</text><line x1="583.50" y1="156.50" x2="586.50" y2="156.50" stroke="#d6d6d6" stroke-width="0.90"/><line x1="714.50" y1="156.50" x2="711.50" y2="156.50" stroke="#d6d6d6" stroke-width="0.70"/><text x="580.3" y="160.10" class="tk" text-anchor="end">0</text><line x1="583.50" y1="135.50" x2="586.50" y2="135.50" stroke="#d6d6d6" stroke-width="0.90"/><line x1="714.50" y1="135.50" x2="711.50" y2="135.50" stroke="#d6d6d6" stroke-width="0.70"/><text x="580.3" y="139.10" class="tk" text-anchor="end">5</text><text x="649.0" y="193.6" class="at" text-anchor="middle">t</text><text x="570.3" y="160.4" class="at" text-anchor="middle" transform="rotate(-90 570.3 158.2)">x(t)</text><rect x="583.5" y="217.0" width="131.0" height="41.0" fill="#646464"/><line x1="590.05" y1="217.00" x2="590.05" y2="258.00" stroke="#7b7b7b" stroke-width="0.50"/><line x1="603.15" y1="217.00" x2="603.15" y2="258.00" stroke="#7b7b7b" stroke-width="0.50"/><line x1="616.25" y1="217.00" x2="616.25" y2="258.00" stroke="#7b7b7b" stroke-width="0.50"/><line x1="629.35" y1="217.00" x2="629.35" y2="258.00" stroke="#7b7b7b" stroke-width="0.50"/><line x1="642.45" y1="217.00" x2="642.45" y2="258.00" stroke="#7b7b7b" stroke-width="0.50"/><line x1="655.55" y1="217.00" x2="655.55" y2="258.00" stroke="#7b7b7b" stroke-width="0.50"/><line x1="668.65" y1="217.00" x2="668.65" y2="258.00" stroke="#7b7b7b" stroke-width="0.50"/><line x1="681.75" y1="217.00" x2="681.75" y2="258.00" stroke="#7b7b7b" stroke-width="0.50"/><line x1="694.85" y1="217.00" x2="694.85" y2="258.00" stroke="#7b7b7b" stroke-width="0.50"/><line x1="707.95" y1="217.00" x2="707.95" y2="258.00" stroke="#7b7b7b" stroke-width="0.50"/><line x1="583.50" y1="252.88" x2="714.50" y2="252.88" stroke="#7b7b7b" stroke-width="0.50"/><line x1="583.50" y1="242.62" x2="714.50" y2="242.62" stroke="#7b7b7b" stroke-width="0.50"/><line x1="583.50" y1="232.38" x2="714.50" y2="232.38" stroke="#7b7b7b" stroke-width="0.50"/><line x1="583.50" y1="222.12" x2="714.50" y2="222.12" stroke="#7b7b7b" stroke-width="0.50"/><line x1="583.50" y1="217.00" x2="583.50" y2="258.00" stroke="#b4b4b4" stroke-width="0.60"/><line x1="596.60" y1="217.00" x2="596.60" y2="258.00" stroke="#b4b4b4" stroke-width="0.60"/><line x1="609.70" y1="217.00" x2="609.70" y2="258.00" stroke="#b4b4b4" stroke-width="0.60"/><line x1="622.80" y1="217.00" x2="622.80" y2="258.00" stroke="#b4b4b4" stroke-width="0.60"/><line x1="635.90" y1="217.00" x2="635.90" y2="258.00" stroke="#b4b4b4" stroke-width="0.60"/><line x1="649.00" y1="217.00" x2="649.00" y2="258.00" stroke="#b4b4b4" stroke-width="0.60"/><line x1="662.10" y1="217.00" x2="662.10" y2="258.00" stroke="#b4b4b4" stroke-width="0.60"/><line x1="675.20" y1="217.00" x2="675.20" y2="258.00" stroke="#b4b4b4" stroke-width="0.60"/><line x1="688.30" y1="217.00" x2="688.30" y2="258.00" stroke="#b4b4b4" stroke-width="0.60"/><line x1="701.40" y1="217.00" x2="701.40" y2="258.00" stroke="#b4b4b4" stroke-width="0.60"/><line x1="714.50" y1="217.00" x2="714.50" y2="258.00" stroke="#b4b4b4" stroke-width="0.60"/><line x1="583.50" y1="237.50" x2="714.50" y2="237.50" stroke="#b4b4b4" stroke-width="0.60"/><line x1="583.50" y1="247.75" x2="714.50" y2="247.75" stroke="#b4b4b4" stroke-width="0.60"/><line x1="583.50" y1="227.25" x2="714.50" y2="227.25" stroke="#b4b4b4" stroke-width="0.60"/><g clip-path="url(#c4)"><polyline points="649.0,237.5 649.0,237.4 649.1,237.1 649.3,236.6 649.7,235.9 650.3,235.1 651.2,234.2 652.4,233.2 654.0,232.1 655.9,230.9 658.2,229.8 660.8,228.7 663.8,227.8 667.0,226.9 670.5,226.3 674.1,226.1 677.8,226.2 681.3,226.8 684.5,228.0 687.3,229.8 689.4,232.1 690.7,234.9 691.1,237.9 690.5,240.9 688.9,243.7 686.6,246.1 683.5,247.9 680.0,249.3 676.1,250.1 672.0,250.4 667.8,250.5 663.7,250.2 659.7,249.8 655.9,249.2 652.3,248.5 648.9,247.8 645.7,247.0 642.8,246.1 640.2,245.3 637.8,244.5 635.7,243.7 633.9,243.0 632.2,242.3 630.8,241.8 629.5,241.3 628.3,241.0 627.2,240.9 626.1,240.9 625.0,241.1 623.8,241.4 622.5,241.9 621.0,242.4 619.3,243.0 617.5,243.5 615.5,243.8 613.5,244.0 611.4,243.9 609.5,243.4 607.7,242.4 606.3,241.1 605.5,239.4 605.2,237.4 605.5,235.3 606.6,233.1 608.3,231.0 610.7,229.2 613.6,227.6 617.0,226.3 620.7,225.3 624.8,224.5 629.0,223.8 633.5,223.3 638.1,222.7 643.0,222.1 648.0,221.5 653.2,220.9 658.6,220.3 664.2,219.8 669.9,219.4 675.7,219.5 681.3,220.1 686.7,221.6 691.4,224.0 695.2,227.4 697.8,231.8 698.8,236.7 698.2,241.8 696.1,246.3 692.7,250.1 688.2,252.9 683.0,254.6 677.3,255.6 671.5,255.9 665.6,255.8 659.8,255.5 654.1,255.0 648.6,254.5 643.3,254.0 638.1,253.4 633.1,252.8 628.3,252.1 623.8,251.1 619.6,249.9 615.9,248.3 612.7,246.4 610.2,244.2 608.5,241.7 607.5,239.2 607.4,236.7 608.0,234.5 609.3,232.7 611.0,231.4 613.1,230.6 615.4,230.4 617.6,230.6 619.7,231.1 621.7,231.9 623.3,233.0 624.6,234.1 625.5,235.3 626.0,236.4 626.2,237.4 626.0,238.4 625.6,239.1 625.0,239.7 624.3,240.0 623.5,240.1 622.7,239.9 622.0,239.5 621.5,238.8 621.2,238.0 621.2,237.0 621.5,236.0 622.1,234.9 623.1,233.9 624.4,233.0 625.9,232.3 627.7,231.7 629.6,231.3 631.7,231.1 633.7,231.1 635.8,231.3 637.7,231.7 639.5,232.2 641.1,232.9 642.4,233.8 643.4,234.7 644.1,235.8 644.5,236.9 644.5,238.1 644.2,239.2 643.4,240.3 642.4,241.4 641.0,242.4 639.3,243.2 637.3,244.0 635.2,244.5 632.8,244.9 630.5,245.0 628.1,244.9 625.7,244.6 623.6,244.0 621.7,243.1 620.0,242.0 618.8,240.7 618.0,239.3 617.6,237.9 617.7,236.5 618.3,235.2 619.2,234.2 620.4,233.3 621.8,232.8 623.3,232.6 624.9,232.7 626.4,233.0 627.8,233.6 628.9,234.4 629.7,235.4 630.2,236.5 630.3,237.7 630.1,239.0 629.4,240.3 628.3,241.5 626.8,242.6 625.0,243.6 622.9,244.3 620.7,244.8 618.3,244.9 616.0,244.5 613.9,243.7 612.1,242.4 610.8,240.8 610.1,238.7 610.0,236.5 610.7,234.2 612.1,232.1 614.1,230.1 616.8,228.5 619.8,227.2 623.3,226.3 626.9,225.7 630.8,225.4 634.6,225.3 638.5,225.4 642.4,225.6 646.1,225.9 649.7,226.4 653.2,226.8 656.5,227.4 659.7,228.0 662.6,228.7 665.3,229.5 667.7,230.2 669.9,231.1 671.8,231.9 673.5,232.7 674.9,233.5 676.1,234.2 677.0,234.8 677.8,235.3 678.5,235.6 679.0,235.8 679.6,235.8 680.2,235.7 680.8,235.4 681.5,235.2 682.3,234.9 683.2,234.6 684.1,234.4 685.1,234.4 686.1,234.5 687.0,234.9 687.7,235.6 688.2,236.5 688.4,237.6 688.1,238.9 687.5,240.3 686.3,241.8 684.7,243.2 682.7,244.5 680.3,245.7 677.5,246.7 674.4,247.6 671.0,248.4 667.4,249.1 663.7,249.6 659.7,250.1 655.6,250.6 651.3,251.1 646.9,251.5 642.4,251.8 637.8,252.1 633.1,252.2 628.4,252.1 623.8,251.7 619.3,250.9 615.3,249.5 611.7,247.6 608.9,245.1 606.9,242.1 606.0,238.9 606.1,235.6 607.2,232.5 609.2,230.0 611.9,228.0 615.2,226.7 618.8,226.0 622.5,225.8 626.2,226.1 629.8,226.7 633.1,227.6 636.0,228.7 638.7,229.9 640.9,231.1 642.8,232.3 644.2,233.6 645.3,234.7 646.0,235.8 646.4,236.8 646.4,237.7 646.3,238.4 645.9,238.9 645.4,239.2 644.8,239.4 644.2,239.3 643.6,239.1 643.2,238.7 642.9,238.2 642.7,237.6 642.8,236.8 643.2,236.0 643.8,235.2 644.7,234.3 645.8,233.5 647.2,232.8 648.8,232.2 650.6,231.6 652.5,231.2 654.6,230.9 656.7,230.8 658.8,230.9 660.9,231.1 662.9,231.4 664.8,231.9 666.5,232.5 668.0,233.2 669.2,234.0 670.2,234.8 671.0,235.6 671.5,236.3 671.7,237.0 671.8,237.5 671.7,237.9 671.6,238.0 671.4,237.9 671.3,237.7 671.3,237.2 671.5,236.6 671.9,235.8 672.6,234.9 673.6,233.9 674.9,232.9 676.6,232.0 678.5,231.2 680.6,230.6 682.8,230.3 685.1,230.5 687.3,231.1 689.2,232.2 690.6,233.8 691.4,235.9 691.6,238.2 691.0,240.6 689.6,243.0 687.5,245.3 684.7,247.2 681.3,248.7 677.6,249.9 673.4,250.8 669.0,251.5 664.5,252.1 659.8,252.5 654.9,252.8 650.0,253.2 644.9,253.5 639.8,253.7 634.6,253.9 629.3,253.8 624.2,253.4 619.2,252.6 614.6,251.3 610.5,249.2 607.2,246.4 604.8,243.0 603.7,239.3 603.7,235.4 605.0,231.8 607.3,228.8 610.4,226.5 614.2,225.0 618.4,224.2 622.7,224.0 627.0,224.2 631.1,224.9 635.0,225.8 638.6,226.8 641.9,227.9 644.8,229.0 647.3,230.2 649.4,231.3 651.3,232.3 652.8,233.2 654.0,234.1 655.0,234.7 655.8,235.2 656.5,235.5 657.1,235.6 657.7,235.5 658.4,235.2 659.2,234.6 660.2,233.9 661.5,233.0 663.2,231.9 665.1,230.7 667.5,229.5 670.2,228.3 673.3,227.2 676.7,226.4 680.4,225.9 684.1,225.9 687.8,226.5 691.1,227.9 693.8,230.2 695.7,233.1 696.5,236.6 696.2,240.4 694.7,244.0 692.1,247.3 688.5,249.9 684.2,252.0 679.3,253.4 674.1,254.4 668.6,255.0 662.9,255.5 657.1,255.9 651.2,256.3 645.1,256.7 638.9,257.0 632.6,257.3 626.3,257.4 620.0,257.0 613.9,255.8 608.4,253.8 603.7,250.6 600.1,246.3 598.2,241.1 597.9,235.6 599.3,230.3 602.4,225.8 606.7,222.4 611.9,220.1 617.7,218.8 623.8,218.3 629.9,218.4 636.0,218.8 641.9,219.3 647.6,219.9 653.1,220.5 658.5,221.1 663.6,221.8 668.5,222.5 673.2,223.4 677.5,224.6 681.4,226.1 684.7,227.9 687.5,230.1 689.5,232.5 690.7,235.0 691.0,237.6 690.6,239.8 689.6,241.8 688.0,243.2 686.0,244.1 683.8,244.5 681.5,244.5 679.4,244.0 677.4,243.3 675.7,242.3 674.4,241.2 673.4,240.1 672.7,239.0 672.4,238.0 672.4,237.1 672.6,236.4 673.1,235.9 673.7,235.6 674.3,235.5 674.9,235.7 675.4,236.1 675.8,236.7 675.9,237.5 675.8,238.4 675.4,239.3 674.6,240.3 673.6,241.2 672.2,242.1 670.7,242.8 668.9,243.3 667.0,243.7 665.0,243.8 662.9,243.8 661.0,243.6 659.1,243.2 657.4,242.6 655.8,241.9 654.6,241.1 653.6,240.1 652.9,239.1 652.6,238.0 652.6,236.9 653.0,235.7 653.7,234.6 654.8,233.6 656.2,232.7 657.9,231.8 659.8,231.2 661.9,230.6 664.2,230.3 666.5,230.2 668.8,230.3 671.1,230.6 673.2,231.2 675.1,232.0 676.7,233.0 678.0,234.2 678.8,235.5 679.2,236.8 679.3,238.1 678.9,239.3 678.2,240.2 677.2,241.0 676.0,241.5 674.6,241.7 673.3,241.6 672.1,241.2 671.0,240.7 670.1,239.9 669.5,238.9 669.2,237.8 669.3,236.6 669.8,235.3 670.7,234.1 671.9,233.0 673.6,231.9 675.5,231.1 677.6,230.6 679.9,230.3 682.1,230.5 684.3,231.2 686.1,232.3 687.5,233.9 688.4,235.8 688.6,238.0 688.1,240.3 686.8,242.5 684.9,244.6 682.3,246.3 679.3,247.7 675.8,248.8 672.1,249.5 668.2,250.0 664.2,250.2 660.1,250.3 656.0,250.2 652.0,250.1 648.0,249.8 644.1,249.5 640.3,249.1 636.7,248.6 633.2,248.0 630.0,247.3 627.0,246.5 624.2,245.5 621.8,244.5 619.8,243.3 618.1,242.0 616.9,240.8 616.0,239.6 615.6,238.5 615.4,237.5 615.5,236.8 615.8,236.3 616.2,236.1 616.7,236.1 617.1,236.3 617.5,236.7 617.6,237.2 617.7,237.7 617.5,238.3 617.1,238.9 616.6,239.3 616.0,239.6 615.3,239.6 614.7,239.5 614.1,239.0 613.7,238.3 613.6,237.4 613.8,236.3 614.4,235.1 615.3,233.8 616.7,232.5 618.5,231.2 620.7,230.1 623.2,229.1 626.0,228.3 629.1,227.6 632.3,227.1 635.7,226.7 639.3,226.4 642.8,226.2 646.5,226.1 650.1,226.1 653.7,226.2 657.3,226.4 660.9,226.7 664.2,227.1 667.5,227.7 670.5,228.4 673.3,229.3 675.8,230.3 677.9,231.5 679.6,232.8 680.8,234.2 681.7,235.5 682.1,236.8 682.1,237.9 681.9,238.8 681.4,239.4 680.7,239.8 679.9,239.8 679.2,239.6 678.6,239.2 678.1,238.6 677.9,237.9 677.9,237.1 678.1,236.3 678.6,235.5 679.4,234.9 680.3,234.4 681.3,234.2 682.4,234.2 683.4,234.5 684.2,235.2 684.8,236.1 685.1,237.3 685.0,238.7 684.3,240.2 683.2,241.7 681.7,243.2 679.6,244.5 677.2,245.7 674.4,246.7 671.4,247.4 668.1,248.0 664.7,248.5 661.1,248.8 657.5,248.9 653.8,249.0 650.2,248.9 646.5,248.8 642.9,248.6 639.4,248.3 636.1,247.8 632.9,247.3 629.8,246.6 627.0,245.8 624.5,244.9 622.4,243.8 620.5,242.7 619.1,241.5 618.0,240.3 617.3,239.2 616.9,238.2 616.8,237.4 616.9,236.8 617.2,236.4 617.6,236.2 618.0,236.3 618.3,236.6 618.6,237.1 618.6,237.7 618.4,238.3 618.1,239.0 617.5,239.6 616.8,240.0 615.9,240.3 615.0,240.4 614.1,240.2 613.3,239.7 612.7,238.9 612.4,237.9 612.5,236.7 613.0,235.3 613.9,233.8 615.3,232.4 617.2,231.0 619.4,229.8 622.1,228.7 625.0,227.8 628.2,227.1 631.6,226.6 635.2,226.1 638.9,225.8 642.7,225.6 646.5,225.5 650.3,225.4 654.2,225.4 658.0,225.6 661.8,225.8 665.5,226.2 669.0,226.8 672.3,227.5 675.4,228.5 678.0,229.7 680.3,231.1 682.1,232.7 683.4,234.4 684.1,236.0 684.3,237.6 684.1,239.0 683.4,240.2 682.4,241.0 681.2,241.4 679.9,241.6 678.6,241.4 677.5,240.9 676.5,240.2 675.7,239.4 675.3,238.4 675.2,237.4 675.4,236.4 675.9,235.4 676.7,234.6 677.7,234.0 678.9,233.6 680.1,233.6 681.4,233.8 682.5,234.3 683.3,235.2 683.9,236.4 684.0,237.8 683.7,239.3 682.9,240.8 681.6,242.4 679.8,243.8 677.6,245.0 675.0,246.0 672.2,246.8 669.1,247.3 665.9,247.7 662.6,247.9 659.3,247.9 656.0,247.8 652.8,247.5 649.6,247.1 646.6,246.7 643.8,246.2 641.1,245.5 638.6,244.9 636.4,244.1 634.4,243.4 632.7,242.6 631.1,241.9 629.9,241.2 628.8,240.6 627.9,240.1 627.1,239.8 626.4,239.6 625.8,239.6 625.1,239.7 624.3,240.1 623.4,240.5 622.4,241.1 621.1,241.8 619.6,242.4 618.0,243.1 616.1,243.5 614.1,243.8 612.1,243.7 610.2,243.3 608.5,242.4 607.1,241.1 606.2,239.4 605.9,237.4 606.3,235.3 607.3,233.1 609.1,231.0 611.5,229.1 614.4,227.6 617.8,226.3 621.5,225.2 625.6,224.4 629.9,223.7 634.4,223.2 639.1,222.6 643.9,222.1 648.9,221.6 654.0,221.1 659.4,220.6 664.8,220.2 670.4,220.1 675.9,220.3 681.3,221.1 686.3,222.7 690.7,225.1 694.2,228.4 696.4,232.6 697.3,237.1 696.6,241.7 694.6,245.8 691.4,249.2 687.3,251.7 682.5,253.2 677.3,254.0 672.0,254.2 666.6,254.0 661.5,253.5 656.5,252.8 651.7,252.1 647.1,251.4 642.8,250.6 638.7,249.8 634.9,249.1 631.3,248.2 628.1,247.4 625.0,246.5 622.3,245.5 619.9,244.5 617.8,243.5 616.1,242.4 614.7,241.4 613.6,240.4 612.9,239.4 612.4,238.6 612.1,238.0 612.0,237.5 612.1,237.1 612.2,236.9 612.5,236.8 612.7,236.8 612.9,236.8 613.2,236.7 613.4,236.7 613.7,236.6 614.0,236.3 614.5,236.0 615.0,235.5 615.8,234.9 616.7,234.2 617.9,233.4 619.3,232.6 621.0,231.8 623.0,231.0 625.2,230.2 627.6,229.4 630.3,228.8 633.2,228.1 636.3,227.6 639.5,227.1 642.9,226.7 646.4,226.4 650.0,226.1 653.7,225.9 657.4,225.8 661.1,225.9 664.8,226.1 668.4,226.5 671.8,227.1 675.0,227.9 677.9,229.1 680.4,230.5 682.4,232.1 683.8,233.9 684.7,235.8 684.9,237.6 684.7,239.2 683.9,240.6 682.7,241.7 681.2,242.4 679.6,242.8 677.9,242.7 676.3,242.3 674.8,241.7 673.6,240.8 672.7,239.8 672.2,238.7 672.0,237.5 672.2,236.3 672.7,235.2 673.6,234.2 674.8,233.4 676.3,232.8 677.8,232.5 679.4,232.5 681.0,232.9 682.3,233.6 683.4,234.7 684.1,236.0 684.3,237.6 684.0,239.3 683.2,241.0 681.8,242.6 679.9,244.1 677.6,245.3 675.0,246.2 672.1,246.9 669.0,247.4 665.8,247.6 662.6,247.6 659.4,247.4 656.2,247.1 653.2,246.7 650.4,246.1 647.7,245.5 645.3,244.8 643.1,244.0 641.1,243.2 639.4,242.4 638.0,241.6 636.8,240.9 635.8,240.2 635.0,239.6 634.4,239.2 633.9,239.0 633.5,238.9 633.0,239.0 632.5,239.4 631.8,239.9 630.9,240.6 629.8,241.4 628.4,242.4 626.7,243.4 624.6,244.5 622.2,245.5 619.5,246.3 616.6,246.8 613.6,246.9 610.7,246.5 608.0,245.5 605.7,243.8 604.0,241.5 603.2,238.7 603.3,235.7 604.4,232.6 606.4,229.7 609.3,227.3 612.9,225.3 617.1,223.8 621.6,222.6 626.5,221.8 631.6,221.2 636.9,220.7 642.3,220.3 647.9,219.8 653.6,219.3 659.5,218.8 665.6,218.5 671.7,218.3 677.8,218.6 683.6,219.7 689.1,221.6 693.7,224.6 697.2,228.7 699.2,233.6 699.6,238.9 698.3,244.1 695.5,248.6 691.4,252.0 686.3,254.4 680.7,255.8 674.7,256.3 668.7,256.4 662.7,256.1 656.8,255.6 651.1,255.1 645.6,254.5 640.2,254.0 635.1,253.4 630.1,252.6 625.4,251.8 621.0,250.6 617.1,249.2 613.6,247.4 610.8,245.2 608.7,242.8 607.4,240.2 607.0,237.6 607.3,235.3 608.4,233.2 610.0,231.7 612.0,230.7 614.2,230.3 616.6,230.3 618.8,230.7 620.9,231.5 622.6,232.4 624.1,233.5 625.2,234.7 625.9,235.8 626.3,236.9 626.3,237.9 626.0,238.7 625.6,239.3 624.9,239.7 624.2,239.8 623.5,239.8 622.8,239.4 622.2,238.9 621.9,238.2 621.8,237.3 622.1,236.3 622.6,235.3 623.5,234.3 624.6,233.4 626.1,232.6 627.7,232.0 629.6,231.6 631.5,231.3 633.5,231.3 635.5,231.4 637.4,231.8 639.1,232.3 640.7,233.0 642.0,233.8 643.0,234.7 643.7,235.8 644.1,236.9 644.1,238.0 643.8,239.2 643.1,240.3 642.0,241.4" fill="none" stroke="#3a3a6a" stroke-width="2.00" stroke-linejoin="round" stroke-opacity="0.35"/><polyline points="649.0,237.5 649.0,237.4 649.1,237.1 649.3,236.6 649.7,235.9 650.3,235.1 651.2,234.2 652.4,233.2 654.0,232.1 655.9,230.9 658.2,229.8 660.8,228.7 663.8,227.8 667.0,226.9 670.5,226.3 674.1,226.1 677.8,226.2 681.3,226.8 684.5,228.0 687.3,229.8 689.4,232.1 690.7,234.9 691.1,237.9 690.5,240.9 688.9,243.7 686.6,246.1 683.5,247.9 680.0,249.3 676.1,250.1 672.0,250.4 667.8,250.5 663.7,250.2 659.7,249.8 655.9,249.2 652.3,248.5 648.9,247.8 645.7,247.0 642.8,246.1 640.2,245.3 637.8,244.5 635.7,243.7 633.9,243.0 632.2,242.3 630.8,241.8 629.5,241.3 628.3,241.0 627.2,240.9 626.1,240.9 625.0,241.1 623.8,241.4 622.5,241.9 621.0,242.4 619.3,243.0 617.5,243.5 615.5,243.8 613.5,244.0 611.4,243.9 609.5,243.4 607.7,242.4 606.3,241.1 605.5,239.4 605.2,237.4 605.5,235.3 606.6,233.1 608.3,231.0 610.7,229.2 613.6,227.6 617.0,226.3 620.7,225.3 624.8,224.5 629.0,223.8 633.5,223.3 638.1,222.7 643.0,222.1 648.0,221.5 653.2,220.9 658.6,220.3 664.2,219.8 669.9,219.4 675.7,219.5 681.3,220.1 686.7,221.6 691.4,224.0 695.2,227.4 697.8,231.8 698.8,236.7 698.2,241.8 696.1,246.3 692.7,250.1 688.2,252.9 683.0,254.6 677.3,255.6 671.5,255.9 665.6,255.8 659.8,255.5 654.1,255.0 648.6,254.5 643.3,254.0 638.1,253.4 633.1,252.8 628.3,252.1 623.8,251.1 619.6,249.9 615.9,248.3 612.7,246.4 610.2,244.2 608.5,241.7 607.5,239.2 607.4,236.7 608.0,234.5 609.3,232.7 611.0,231.4 613.1,230.6 615.4,230.4 617.6,230.6 619.7,231.1 621.7,231.9 623.3,233.0 624.6,234.1 625.5,235.3 626.0,236.4 626.2,237.4 626.0,238.4 625.6,239.1 625.0,239.7 624.3,240.0 623.5,240.1 622.7,239.9 622.0,239.5 621.5,238.8 621.2,238.0 621.2,237.0 621.5,236.0 622.1,234.9 623.1,233.9 624.4,233.0 625.9,232.3 627.7,231.7 629.6,231.3 631.7,231.1 633.7,231.1 635.8,231.3 637.7,231.7 639.5,232.2 641.1,232.9 642.4,233.8 643.4,234.7 644.1,235.8 644.5,236.9 644.5,238.1 644.2,239.2 643.4,240.3 642.4,241.4 641.0,242.4 639.3,243.2 637.3,244.0 635.2,244.5 632.8,244.9 630.5,245.0 628.1,244.9 625.7,244.6 623.6,244.0 621.7,243.1 620.0,242.0 618.8,240.7 618.0,239.3 617.6,237.9 617.7,236.5 618.3,235.2 619.2,234.2 620.4,233.3 621.8,232.8 623.3,232.6 624.9,232.7 626.4,233.0 627.8,233.6 628.9,234.4 629.7,235.4 630.2,236.5 630.3,237.7 630.1,239.0 629.4,240.3 628.3,241.5 626.8,242.6 625.0,243.6 622.9,244.3 620.7,244.8 618.3,244.9 616.0,244.5 613.9,243.7 612.1,242.4 610.8,240.8 610.1,238.7 610.0,236.5 610.7,234.2 612.1,232.1 614.1,230.1 616.8,228.5 619.8,227.2 623.3,226.3 626.9,225.7 630.8,225.4 634.6,225.3 638.5,225.4 642.4,225.6 646.1,225.9 649.7,226.4 653.2,226.8 656.5,227.4 659.7,228.0 662.6,228.7 665.3,229.5 667.7,230.2 669.9,231.1 671.8,231.9 673.5,232.7 674.9,233.5 676.1,234.2 677.0,234.8 677.8,235.3 678.5,235.6 679.0,235.8 679.6,235.8 680.2,235.7 680.8,235.4 681.5,235.2 682.3,234.9 683.2,234.6 684.1,234.4 685.1,234.4 686.1,234.5 687.0,234.9 687.7,235.6 688.2,236.5 688.4,237.6 688.1,238.9 687.5,240.3 686.3,241.8 684.7,243.2 682.7,244.5 680.3,245.7 677.5,246.7 674.4,247.6 671.0,248.4 667.4,249.1 663.7,249.6 659.7,250.1 655.6,250.6 651.3,251.1 646.9,251.5 642.4,251.8 637.8,252.1 633.1,252.2 628.4,252.1 623.8,251.7 619.3,250.9 615.3,249.5 611.7,247.6 608.9,245.1 606.9,242.1 606.0,238.9 606.1,235.6 607.2,232.5 609.2,230.0 611.9,228.0 615.2,226.7 618.8,226.0 622.5,225.8 626.2,226.1 629.8,226.7 633.1,227.6 636.0,228.7 638.7,229.9 640.9,231.1 642.8,232.3 644.2,233.6 645.3,234.7 646.0,235.8 646.4,236.8 646.4,237.7 646.3,238.4 645.9,238.9 645.4,239.2 644.8,239.4 644.2,239.3 643.6,239.1 643.2,238.7 642.9,238.2 642.7,237.6 642.8,236.8 643.2,236.0 643.8,235.2 644.7,234.3 645.8,233.5 647.2,232.8 648.8,232.2 650.6,231.6 652.5,231.2 654.6,230.9 656.7,230.8 658.8,230.9 660.9,231.1 662.9,231.4 664.8,231.9 666.5,232.5 668.0,233.2 669.2,234.0 670.2,234.8 671.0,235.6 671.5,236.3 671.7,237.0 671.8,237.5 671.7,237.9 671.6,238.0 671.4,237.9 671.3,237.7 671.3,237.2 671.5,236.6 671.9,235.8 672.6,234.9 673.6,233.9 674.9,232.9 676.6,232.0 678.5,231.2 680.6,230.6 682.8,230.3 685.1,230.5 687.3,231.1 689.2,232.2 690.6,233.8 691.4,235.9 691.6,238.2 691.0,240.6 689.6,243.0 687.5,245.3 684.7,247.2 681.3,248.7 677.6,249.9 673.4,250.8 669.0,251.5 664.5,252.1 659.8,252.5 654.9,252.8 650.0,253.2 644.9,253.5 639.8,253.7 634.6,253.9 629.3,253.8 624.2,253.4 619.2,252.6 614.6,251.3 610.5,249.2 607.2,246.4 604.8,243.0 603.7,239.3 603.7,235.4 605.0,231.8 607.3,228.8 610.4,226.5 614.2,225.0 618.4,224.2 622.7,224.0 627.0,224.2 631.1,224.9 635.0,225.8 638.6,226.8 641.9,227.9 644.8,229.0 647.3,230.2 649.4,231.3 651.3,232.3 652.8,233.2 654.0,234.1 655.0,234.7 655.8,235.2 656.5,235.5 657.1,235.6 657.7,235.5 658.4,235.2 659.2,234.6 660.2,233.9 661.5,233.0 663.2,231.9 665.1,230.7 667.5,229.5 670.2,228.3 673.3,227.2 676.7,226.4 680.4,225.9 684.1,225.9 687.8,226.5 691.1,227.9 693.8,230.2 695.7,233.1 696.5,236.6 696.2,240.4 694.7,244.0 692.1,247.3 688.5,249.9 684.2,252.0 679.3,253.4 674.1,254.4 668.6,255.0 662.9,255.5 657.1,255.9 651.2,256.3 645.1,256.7 638.9,257.0 632.6,257.3 626.3,257.4 620.0,257.0 613.9,255.8 608.4,253.8 603.7,250.6 600.1,246.3 598.2,241.1 597.9,235.6 599.3,230.3 602.4,225.8 606.7,222.4 611.9,220.1 617.7,218.8 623.8,218.3 629.9,218.4 636.0,218.8 641.9,219.3 647.6,219.9 653.1,220.5 658.5,221.1 663.6,221.8 668.5,222.5 673.2,223.4 677.5,224.6 681.4,226.1 684.7,227.9 687.5,230.1 689.5,232.5 690.7,235.0 691.0,237.6 690.6,239.8 689.6,241.8 688.0,243.2 686.0,244.1 683.8,244.5 681.5,244.5 679.4,244.0 677.4,243.3 675.7,242.3 674.4,241.2 673.4,240.1 672.7,239.0 672.4,238.0 672.4,237.1 672.6,236.4 673.1,235.9 673.7,235.6 674.3,235.5 674.9,235.7 675.4,236.1 675.8,236.7 675.9,237.5 675.8,238.4 675.4,239.3 674.6,240.3 673.6,241.2 672.2,242.1 670.7,242.8 668.9,243.3 667.0,243.7 665.0,243.8 662.9,243.8 661.0,243.6 659.1,243.2 657.4,242.6 655.8,241.9 654.6,241.1 653.6,240.1 652.9,239.1 652.6,238.0 652.6,236.9 653.0,235.7 653.7,234.6 654.8,233.6 656.2,232.7 657.9,231.8 659.8,231.2 661.9,230.6 664.2,230.3 666.5,230.2 668.8,230.3 671.1,230.6 673.2,231.2 675.1,232.0 676.7,233.0 678.0,234.2 678.8,235.5 679.2,236.8 679.3,238.1 678.9,239.3 678.2,240.2 677.2,241.0 676.0,241.5 674.6,241.7 673.3,241.6 672.1,241.2 671.0,240.7 670.1,239.9 669.5,238.9 669.2,237.8 669.3,236.6 669.8,235.3 670.7,234.1 671.9,233.0 673.6,231.9 675.5,231.1 677.6,230.6 679.9,230.3 682.1,230.5 684.3,231.2 686.1,232.3 687.5,233.9 688.4,235.8 688.6,238.0 688.1,240.3 686.8,242.5 684.9,244.6 682.3,246.3 679.3,247.7 675.8,248.8 672.1,249.5 668.2,250.0 664.2,250.2 660.1,250.3 656.0,250.2 652.0,250.1 648.0,249.8 644.1,249.5 640.3,249.1 636.7,248.6 633.2,248.0 630.0,247.3 627.0,246.5 624.2,245.5 621.8,244.5 619.8,243.3 618.1,242.0 616.9,240.8 616.0,239.6 615.6,238.5 615.4,237.5 615.5,236.8 615.8,236.3 616.2,236.1 616.7,236.1 617.1,236.3 617.5,236.7 617.6,237.2 617.7,237.7 617.5,238.3 617.1,238.9 616.6,239.3 616.0,239.6 615.3,239.6 614.7,239.5 614.1,239.0 613.7,238.3 613.6,237.4 613.8,236.3 614.4,235.1 615.3,233.8 616.7,232.5 618.5,231.2 620.7,230.1 623.2,229.1 626.0,228.3 629.1,227.6 632.3,227.1 635.7,226.7 639.3,226.4 642.8,226.2 646.5,226.1 650.1,226.1 653.7,226.2 657.3,226.4 660.9,226.7 664.2,227.1 667.5,227.7 670.5,228.4 673.3,229.3 675.8,230.3 677.9,231.5 679.6,232.8 680.8,234.2 681.7,235.5 682.1,236.8 682.1,237.9 681.9,238.8 681.4,239.4 680.7,239.8 679.9,239.8 679.2,239.6 678.6,239.2 678.1,238.6 677.9,237.9 677.9,237.1 678.1,236.3 678.6,235.5 679.4,234.9 680.3,234.4 681.3,234.2 682.4,234.2 683.4,234.5 684.2,235.2 684.8,236.1 685.1,237.3 685.0,238.7 684.3,240.2 683.2,241.7 681.7,243.2 679.6,244.5 677.2,245.7 674.4,246.7 671.4,247.4 668.1,248.0 664.7,248.5 661.1,248.8 657.5,248.9 653.8,249.0 650.2,248.9 646.5,248.8 642.9,248.6 639.4,248.3 636.1,247.8 632.9,247.3 629.8,246.6 627.0,245.8 624.5,244.9 622.4,243.8 620.5,242.7 619.1,241.5 618.0,240.3 617.3,239.2 616.9,238.2 616.8,237.4 616.9,236.8 617.2,236.4 617.6,236.2 618.0,236.3 618.3,236.6 618.6,237.1 618.6,237.7 618.4,238.3 618.1,239.0 617.5,239.6 616.8,240.0 615.9,240.3 615.0,240.4 614.1,240.2 613.3,239.7 612.7,238.9 612.4,237.9 612.5,236.7 613.0,235.3 613.9,233.8 615.3,232.4 617.2,231.0 619.4,229.8 622.1,228.7 625.0,227.8 628.2,227.1 631.6,226.6 635.2,226.1 638.9,225.8 642.7,225.6 646.5,225.5 650.3,225.4 654.2,225.4 658.0,225.6 661.8,225.8 665.5,226.2 669.0,226.8 672.3,227.5 675.4,228.5 678.0,229.7 680.3,231.1 682.1,232.7 683.4,234.4 684.1,236.0 684.3,237.6 684.1,239.0 683.4,240.2 682.4,241.0 681.2,241.4 679.9,241.6 678.6,241.4 677.5,240.9 676.5,240.2 675.7,239.4 675.3,238.4 675.2,237.4 675.4,236.4 675.9,235.4 676.7,234.6 677.7,234.0 678.9,233.6 680.1,233.6 681.4,233.8 682.5,234.3 683.3,235.2 683.9,236.4 684.0,237.8 683.7,239.3 682.9,240.8 681.6,242.4 679.8,243.8 677.6,245.0 675.0,246.0 672.2,246.8 669.1,247.3 665.9,247.7 662.6,247.9 659.3,247.9 656.0,247.8 652.8,247.5 649.6,247.1 646.6,246.7 643.8,246.2 641.1,245.5 638.6,244.9 636.4,244.1 634.4,243.4 632.7,242.6 631.1,241.9 629.9,241.2 628.8,240.6 627.9,240.1 627.1,239.8 626.4,239.6 625.8,239.6 625.1,239.7 624.3,240.1 623.4,240.5 622.4,241.1 621.1,241.8 619.6,242.4 618.0,243.1 616.1,243.5 614.1,243.8 612.1,243.7 610.2,243.3 608.5,242.4 607.1,241.1 606.2,239.4 605.9,237.4 606.3,235.3 607.3,233.1 609.1,231.0 611.5,229.1 614.4,227.6 617.8,226.3 621.5,225.2 625.6,224.4 629.9,223.7 634.4,223.2 639.1,222.6 643.9,222.1 648.9,221.6 654.0,221.1 659.4,220.6 664.8,220.2 670.4,220.1 675.9,220.3 681.3,221.1 686.3,222.7 690.7,225.1 694.2,228.4 696.4,232.6 697.3,237.1 696.6,241.7 694.6,245.8 691.4,249.2 687.3,251.7 682.5,253.2 677.3,254.0 672.0,254.2 666.6,254.0 661.5,253.5 656.5,252.8 651.7,252.1 647.1,251.4 642.8,250.6 638.7,249.8 634.9,249.1 631.3,248.2 628.1,247.4 625.0,246.5 622.3,245.5 619.9,244.5 617.8,243.5 616.1,242.4 614.7,241.4 613.6,240.4 612.9,239.4 612.4,238.6 612.1,238.0 612.0,237.5 612.1,237.1 612.2,236.9 612.5,236.8 612.7,236.8 612.9,236.8 613.2,236.7 613.4,236.7 613.7,236.6 614.0,236.3 614.5,236.0 615.0,235.5 615.8,234.9 616.7,234.2 617.9,233.4 619.3,232.6 621.0,231.8 623.0,231.0 625.2,230.2 627.6,229.4 630.3,228.8 633.2,228.1 636.3,227.6 639.5,227.1 642.9,226.7 646.4,226.4 650.0,226.1 653.7,225.9 657.4,225.8 661.1,225.9 664.8,226.1 668.4,226.5 671.8,227.1 675.0,227.9 677.9,229.1 680.4,230.5 682.4,232.1 683.8,233.9 684.7,235.8 684.9,237.6 684.7,239.2 683.9,240.6 682.7,241.7 681.2,242.4 679.6,242.8 677.9,242.7 676.3,242.3 674.8,241.7 673.6,240.8 672.7,239.8 672.2,238.7 672.0,237.5 672.2,236.3 672.7,235.2 673.6,234.2 674.8,233.4 676.3,232.8 677.8,232.5 679.4,232.5 681.0,232.9 682.3,233.6 683.4,234.7 684.1,236.0 684.3,237.6 684.0,239.3 683.2,241.0 681.8,242.6 679.9,244.1 677.6,245.3 675.0,246.2 672.1,246.9 669.0,247.4 665.8,247.6 662.6,247.6 659.4,247.4 656.2,247.1 653.2,246.7 650.4,246.1 647.7,245.5 645.3,244.8 643.1,244.0 641.1,243.2 639.4,242.4 638.0,241.6 636.8,240.9 635.8,240.2 635.0,239.6 634.4,239.2 633.9,239.0 633.5,238.9 633.0,239.0 632.5,239.4 631.8,239.9 630.9,240.6 629.8,241.4 628.4,242.4 626.7,243.4 624.6,244.5 622.2,245.5 619.5,246.3 616.6,246.8 613.6,246.9 610.7,246.5 608.0,245.5 605.7,243.8 604.0,241.5 603.2,238.7 603.3,235.7 604.4,232.6 606.4,229.7 609.3,227.3 612.9,225.3 617.1,223.8 621.6,222.6 626.5,221.8 631.6,221.2 636.9,220.7 642.3,220.3 647.9,219.8 653.6,219.3 659.5,218.8 665.6,218.5 671.7,218.3 677.8,218.6 683.6,219.7 689.1,221.6 693.7,224.6 697.2,228.7 699.2,233.6 699.6,238.9 698.3,244.1 695.5,248.6 691.4,252.0 686.3,254.4 680.7,255.8 674.7,256.3 668.7,256.4 662.7,256.1 656.8,255.6 651.1,255.1 645.6,254.5 640.2,254.0 635.1,253.4 630.1,252.6 625.4,251.8 621.0,250.6 617.1,249.2 613.6,247.4 610.8,245.2 608.7,242.8 607.4,240.2 607.0,237.6 607.3,235.3 608.4,233.2 610.0,231.7 612.0,230.7 614.2,230.3 616.6,230.3 618.8,230.7 620.9,231.5 622.6,232.4 624.1,233.5 625.2,234.7 625.9,235.8 626.3,236.9 626.3,237.9 626.0,238.7 625.6,239.3 624.9,239.7 624.2,239.8 623.5,239.8 622.8,239.4 622.2,238.9 621.9,238.2 621.8,237.3 622.1,236.3 622.6,235.3 623.5,234.3 624.6,233.4 626.1,232.6 627.7,232.0 629.6,231.6 631.5,231.3 633.5,231.3 635.5,231.4 637.4,231.8 639.1,232.3 640.7,233.0 642.0,233.8 643.0,234.7 643.7,235.8 644.1,236.9 644.1,238.0 643.8,239.2 643.1,240.3 642.0,241.4" fill="none" stroke="#f4f28e" stroke-width="0.95" stroke-linejoin="round" stroke-opacity="1.00"/></g><rect x="583.50" y="217.00" width="131.00" height="41.00" fill="none" stroke="#d6d6d6" stroke-width="0.9"/><line x1="583.50" y1="258.00" x2="583.50" y2="254.80" stroke="#d6d6d6" stroke-width="0.90"/><line x1="596.60" y1="258.00" x2="596.60" y2="254.80" stroke="#d6d6d6" stroke-width="0.90"/><line x1="609.70" y1="258.00" x2="609.70" y2="254.80" stroke="#d6d6d6" stroke-width="0.90"/><line x1="622.80" y1="258.00" x2="622.80" y2="254.80" stroke="#d6d6d6" stroke-width="0.90"/><line x1="635.90" y1="258.00" x2="635.90" y2="254.80" stroke="#d6d6d6" stroke-width="0.90"/><line x1="649.00" y1="258.00" x2="649.00" y2="254.80" stroke="#d6d6d6" stroke-width="0.90"/><line x1="662.10" y1="258.00" x2="662.10" y2="254.80" stroke="#d6d6d6" stroke-width="0.90"/><line x1="675.20" y1="258.00" x2="675.20" y2="254.80" stroke="#d6d6d6" stroke-width="0.90"/><line x1="688.30" y1="258.00" x2="688.30" y2="254.80" stroke="#d6d6d6" stroke-width="0.90"/><line x1="701.40" y1="258.00" x2="701.40" y2="254.80" stroke="#d6d6d6" stroke-width="0.90"/><line x1="714.50" y1="258.00" x2="714.50" y2="254.80" stroke="#d6d6d6" stroke-width="0.90"/><text x="583.50" y="266.9" class="tk" text-anchor="middle">-5</text><text x="596.60" y="266.9" class="tk" text-anchor="middle">-4</text><text x="609.70" y="266.9" class="tk" text-anchor="middle">-3</text><text x="622.80" y="266.9" class="tk" text-anchor="middle">-2</text><text x="635.90" y="266.9" class="tk" text-anchor="middle">-1</text><text x="649.00" y="266.9" class="tk" text-anchor="middle">0</text><text x="662.10" y="266.9" class="tk" text-anchor="middle">1</text><text x="675.20" y="266.9" class="tk" text-anchor="middle">2</text><text x="688.30" y="266.9" class="tk" text-anchor="middle">3</text><text x="701.40" y="266.9" class="tk" text-anchor="middle">4</text><text x="714.50" y="266.9" class="tk" text-anchor="middle">5</text><line x1="583.50" y1="258.00" x2="586.50" y2="258.00" stroke="#d6d6d6" stroke-width="0.90"/><line x1="714.50" y1="258.00" x2="711.50" y2="258.00" stroke="#d6d6d6" stroke-width="0.70"/><text x="580.3" y="261.60" class="tk" text-anchor="end">-5</text><line x1="583.50" y1="237.50" x2="586.50" y2="237.50" stroke="#d6d6d6" stroke-width="0.90"/><line x1="714.50" y1="237.50" x2="711.50" y2="237.50" stroke="#d6d6d6" stroke-width="0.70"/><text x="580.3" y="241.10" class="tk" text-anchor="end">0</text><line x1="583.50" y1="217.00" x2="586.50" y2="217.00" stroke="#d6d6d6" stroke-width="0.90"/><line x1="714.50" y1="217.00" x2="711.50" y2="217.00" stroke="#d6d6d6" stroke-width="0.70"/><text x="580.3" y="220.60" class="tk" text-anchor="end">5</text><text x="649.0" y="274.1" class="at" text-anchor="middle">x(t)</text><text x="570.3" y="241.4" class="at" text-anchor="middle" transform="rotate(-90 570.3 239.2)">v(t)</text><rect x="583.5" y="298.0" width="131.0" height="42.0" fill="#646464"/><line x1="590.05" y1="298.00" x2="590.05" y2="340.00" stroke="#7b7b7b" stroke-width="0.50"/><line x1="603.15" y1="298.00" x2="603.15" y2="340.00" stroke="#7b7b7b" stroke-width="0.50"/><line x1="616.25" y1="298.00" x2="616.25" y2="340.00" stroke="#7b7b7b" stroke-width="0.50"/><line x1="629.35" y1="298.00" x2="629.35" y2="340.00" stroke="#7b7b7b" stroke-width="0.50"/><line x1="642.45" y1="298.00" x2="642.45" y2="340.00" stroke="#7b7b7b" stroke-width="0.50"/><line x1="655.55" y1="298.00" x2="655.55" y2="340.00" stroke="#7b7b7b" stroke-width="0.50"/><line x1="668.65" y1="298.00" x2="668.65" y2="340.00" stroke="#7b7b7b" stroke-width="0.50"/><line x1="681.75" y1="298.00" x2="681.75" y2="340.00" stroke="#7b7b7b" stroke-width="0.50"/><line x1="694.85" y1="298.00" x2="694.85" y2="340.00" stroke="#7b7b7b" stroke-width="0.50"/><line x1="707.95" y1="298.00" x2="707.95" y2="340.00" stroke="#7b7b7b" stroke-width="0.50"/><line x1="583.50" y1="337.38" x2="714.50" y2="337.38" stroke="#7b7b7b" stroke-width="0.50"/><line x1="583.50" y1="334.75" x2="714.50" y2="334.75" stroke="#7b7b7b" stroke-width="0.50"/><line x1="583.50" y1="332.12" x2="714.50" y2="332.12" stroke="#7b7b7b" stroke-width="0.50"/><line x1="583.50" y1="329.50" x2="714.50" y2="329.50" stroke="#7b7b7b" stroke-width="0.50"/><line x1="583.50" y1="326.88" x2="714.50" y2="326.88" stroke="#7b7b7b" stroke-width="0.50"/><line x1="583.50" y1="324.25" x2="714.50" y2="324.25" stroke="#7b7b7b" stroke-width="0.50"/><line x1="583.50" y1="321.62" x2="714.50" y2="321.62" stroke="#7b7b7b" stroke-width="0.50"/><line x1="583.50" y1="319.00" x2="714.50" y2="319.00" stroke="#7b7b7b" stroke-width="0.50"/><line x1="583.50" y1="316.38" x2="714.50" y2="316.38" stroke="#7b7b7b" stroke-width="0.50"/><line x1="583.50" y1="313.75" x2="714.50" y2="313.75" stroke="#7b7b7b" stroke-width="0.50"/><line x1="583.50" y1="311.12" x2="714.50" y2="311.12" stroke="#7b7b7b" stroke-width="0.50"/><line x1="583.50" y1="308.50" x2="714.50" y2="308.50" stroke="#7b7b7b" stroke-width="0.50"/><line x1="583.50" y1="305.88" x2="714.50" y2="305.88" stroke="#7b7b7b" stroke-width="0.50"/><line x1="583.50" y1="303.25" x2="714.50" y2="303.25" stroke="#7b7b7b" stroke-width="0.50"/><line x1="583.50" y1="300.62" x2="714.50" y2="300.62" stroke="#7b7b7b" stroke-width="0.50"/><line x1="583.50" y1="298.00" x2="583.50" y2="340.00" stroke="#b4b4b4" stroke-width="0.60"/><line x1="596.60" y1="298.00" x2="596.60" y2="340.00" stroke="#b4b4b4" stroke-width="0.60"/><line x1="609.70" y1="298.00" x2="609.70" y2="340.00" stroke="#b4b4b4" stroke-width="0.60"/><line x1="622.80" y1="298.00" x2="622.80" y2="340.00" stroke="#b4b4b4" stroke-width="0.60"/><line x1="635.90" y1="298.00" x2="635.90" y2="340.00" stroke="#b4b4b4" stroke-width="0.60"/><line x1="649.00" y1="298.00" x2="649.00" y2="340.00" stroke="#b4b4b4" stroke-width="0.60"/><line x1="662.10" y1="298.00" x2="662.10" y2="340.00" stroke="#b4b4b4" stroke-width="0.60"/><line x1="675.20" y1="298.00" x2="675.20" y2="340.00" stroke="#b4b4b4" stroke-width="0.60"/><line x1="688.30" y1="298.00" x2="688.30" y2="340.00" stroke="#b4b4b4" stroke-width="0.60"/><line x1="701.40" y1="298.00" x2="701.40" y2="340.00" stroke="#b4b4b4" stroke-width="0.60"/><line x1="714.50" y1="298.00" x2="714.50" y2="340.00" stroke="#b4b4b4" stroke-width="0.60"/><g clip-path="url(#c5)"><rect x="665.6" y="321.3" width="1.35" height="1.35" fill="#f4f28e"/><rect x="604.7" y="304.6" width="1.35" height="1.35" fill="#f4f28e"/><rect x="663.8" y="327.4" width="1.35" height="1.35" fill="#f4f28e"/><rect x="623.9" y="309.4" width="1.35" height="1.35" fill="#f4f28e"/><rect x="634.4" y="314.7" width="1.35" height="1.35" fill="#f4f28e"/><rect x="616.6" y="314.9" width="1.35" height="1.35" fill="#f4f28e"/><rect x="677.0" y="304.1" width="1.35" height="1.35" fill="#f4f28e"/><rect x="640.4" y="323.1" width="1.35" height="1.35" fill="#f4f28e"/><rect x="645.0" y="308.5" width="1.35" height="1.35" fill="#f4f28e"/><rect x="671.5" y="307.3" width="1.35" height="1.35" fill="#f4f28e"/><rect x="642.1" y="324.7" width="1.35" height="1.35" fill="#f4f28e"/><rect x="652.7" y="305.7" width="1.35" height="1.35" fill="#f4f28e"/><rect x="648.7" y="326.2" width="1.35" height="1.35" fill="#f4f28e"/><rect x="645.2" y="307.6" width="1.35" height="1.35" fill="#f4f28e"/><rect x="676.9" y="311.8" width="1.35" height="1.35" fill="#f4f28e"/><rect x="657.3" y="320.1" width="1.35" height="1.35" fill="#f4f28e"/><rect x="609.0" y="306.0" width="1.35" height="1.35" fill="#f4f28e"/><rect x="678.8" y="319.6" width="1.35" height="1.35" fill="#f4f28e"/><rect x="647.5" y="312.8" width="1.35" height="1.35" fill="#f4f28e"/><rect x="609.5" y="317.0" width="1.35" height="1.35" fill="#f4f28e"/><rect x="681.2" y="321.0" width="1.35" height="1.35" fill="#f4f28e"/><rect x="620.8" y="320.1" width="1.35" height="1.35" fill="#f4f28e"/><rect x="682.1" y="304.5" width="1.35" height="1.35" fill="#f4f28e"/><rect x="647.8" y="319.8" width="1.35" height="1.35" fill="#f4f28e"/><rect x="616.0" y="311.3" width="1.35" height="1.35" fill="#f4f28e"/><rect x="672.2" y="304.3" width="1.35" height="1.35" fill="#f4f28e"/><rect x="635.4" y="325.7" width="1.35" height="1.35" fill="#f4f28e"/><rect x="678.0" y="301.2" width="1.35" height="1.35" fill="#f4f28e"/><rect x="637.2" y="323.1" width="1.35" height="1.35" fill="#f4f28e"/><rect x="654.3" y="305.6" width="1.35" height="1.35" fill="#f4f28e"/><rect x="645.1" y="327.0" width="1.35" height="1.35" fill="#f4f28e"/><rect x="662.0" y="302.5" width="1.35" height="1.35" fill="#f4f28e"/><rect x="625.1" y="330.1" width="1.35" height="1.35" fill="#f4f28e"/><rect x="681.3" y="326.2" width="1.35" height="1.35" fill="#f4f28e"/><rect x="609.3" y="300.3" width="1.35" height="1.35" fill="#f4f28e"/><rect x="664.0" y="326.3" width="1.35" height="1.35" fill="#f4f28e"/><rect x="619.9" y="308.5" width="1.35" height="1.35" fill="#f4f28e"/><rect x="654.0" y="308.3" width="1.35" height="1.35" fill="#f4f28e"/><rect x="663.3" y="321.6" width="1.35" height="1.35" fill="#f4f28e"/><rect x="607.8" y="304.2" width="1.35" height="1.35" fill="#f4f28e"/><rect x="672.6" y="323.5" width="1.35" height="1.35" fill="#f4f28e"/><rect x="605.1" y="302.8" width="1.35" height="1.35" fill="#f4f28e"/><rect x="660.6" y="328.2" width="1.35" height="1.35" fill="#f4f28e"/><rect x="631.5" y="309.8" width="1.35" height="1.35" fill="#f4f28e"/><rect x="616.4" y="317.3" width="1.35" height="1.35" fill="#f4f28e"/><rect x="683.3" y="306.5" width="1.35" height="1.35" fill="#f4f28e"/><rect x="652.2" y="318.8" width="1.35" height="1.35" fill="#f4f28e"/><rect x="610.0" y="307.8" width="1.35" height="1.35" fill="#f4f28e"/><rect x="682.3" y="315.7" width="1.35" height="1.35" fill="#f4f28e"/><rect x="669.3" y="313.5" width="1.35" height="1.35" fill="#f4f28e"/><rect x="666.3" y="318.5" width="1.35" height="1.35" fill="#f4f28e"/><rect x="616.4" y="319.7" width="1.35" height="1.35" fill="#f4f28e"/><rect x="686.5" y="311.2" width="1.35" height="1.35" fill="#f4f28e"/><rect x="663.0" y="315.5" width="1.35" height="1.35" fill="#f4f28e"/><rect x="663.9" y="308.2" width="1.35" height="1.35" fill="#f4f28e"/><rect x="645.6" y="325.5" width="1.35" height="1.35" fill="#f4f28e"/><rect x="648.8" y="306.7" width="1.35" height="1.35" fill="#f4f28e"/><rect x="665.5" y="321.3" width="1.35" height="1.35" fill="#f4f28e"/><rect x="604.9" y="304.6" width="1.35" height="1.35" fill="#f4f28e"/><rect x="664.1" y="327.3" width="1.35" height="1.35" fill="#f4f28e"/><rect x="623.0" y="309.2" width="1.35" height="1.35" fill="#f4f28e"/><rect x="638.5" y="313.4" width="1.35" height="1.35" fill="#f4f28e"/><rect x="610.0" y="313.0" width="1.35" height="1.35" fill="#f4f28e"/><rect x="683.8" y="315.6" width="1.35" height="1.35" fill="#f4f28e"/><rect x="669.1" y="312.9" width="1.35" height="1.35" fill="#f4f28e"/><rect x="663.5" y="319.7" width="1.35" height="1.35" fill="#f4f28e"/><rect x="602.8" y="308.4" width="1.35" height="1.35" fill="#f4f28e"/><rect x="662.1" y="328.7" width="1.35" height="1.35" fill="#f4f28e"/><rect x="631.7" y="309.5" width="1.35" height="1.35" fill="#f4f28e"/><rect x="616.7" y="317.5" width="1.35" height="1.35" fill="#f4f28e"/><rect x="682.9" y="306.1" width="1.35" height="1.35" fill="#f4f28e"/><rect x="651.3" y="319.0" width="1.35" height="1.35" fill="#f4f28e"/><rect x="611.3" y="308.5" width="1.35" height="1.35" fill="#f4f28e"/><rect x="683.1" y="312.0" width="1.35" height="1.35" fill="#f4f28e"/><rect x="661.9" y="317.1" width="1.35" height="1.35" fill="#f4f28e"/><rect x="617.4" y="319.6" width="1.35" height="1.35" fill="#f4f28e"/><rect x="685.7" y="308.7" width="1.35" height="1.35" fill="#f4f28e"/><rect x="658.4" y="316.8" width="1.35" height="1.35" fill="#f4f28e"/><rect x="606.2" y="315.7" width="1.35" height="1.35" fill="#f4f28e"/><rect x="673.5" y="325.7" width="1.35" height="1.35" fill="#f4f28e"/><rect x="611.5" y="302.4" width="1.35" height="1.35" fill="#f4f28e"/><rect x="676.2" y="320.6" width="1.35" height="1.35" fill="#f4f28e"/><rect x="619.7" y="320.0" width="1.35" height="1.35" fill="#f4f28e"/><rect x="683.9" y="305.9" width="1.35" height="1.35" fill="#f4f28e"/><rect x="652.1" y="318.5" width="1.35" height="1.35" fill="#f4f28e"/><rect x="609.4" y="307.6" width="1.35" height="1.35" fill="#f4f28e"/><rect x="681.4" y="317.3" width="1.35" height="1.35" fill="#f4f28e"/><rect x="669.7" y="310.6" width="1.35" height="1.35" fill="#f4f28e"/><rect x="652.6" y="322.8" width="1.35" height="1.35" fill="#f4f28e"/><rect x="620.1" y="311.1" width="1.35" height="1.35" fill="#f4f28e"/><rect x="651.6" y="308.7" width="1.35" height="1.35" fill="#f4f28e"/><rect x="671.7" y="317.9" width="1.35" height="1.35" fill="#f4f28e"/><rect x="661.4" y="308.9" width="1.35" height="1.35" fill="#f4f28e"/><rect x="651.9" y="324.2" width="1.35" height="1.35" fill="#f4f28e"/><rect x="626.8" y="311.6" width="1.35" height="1.35" fill="#f4f28e"/><rect x="625.0" y="316.3" width="1.35" height="1.35" fill="#f4f28e"/><rect x="648.1" y="309.1" width="1.35" height="1.35" fill="#f4f28e"/><rect x="675.7" y="309.8" width="1.35" height="1.35" fill="#f4f28e"/><rect x="650.9" y="321.8" width="1.35" height="1.35" fill="#f4f28e"/><rect x="618.9" y="311.3" width="1.35" height="1.35" fill="#f4f28e"/><rect x="658.0" y="306.7" width="1.35" height="1.35" fill="#f4f28e"/><rect x="645.0" y="326.5" width="1.35" height="1.35" fill="#f4f28e"/><rect x="658.7" y="303.5" width="1.35" height="1.35" fill="#f4f28e"/><rect x="629.4" y="330.1" width="1.35" height="1.35" fill="#f4f28e"/><rect x="686.7" y="321.9" width="1.35" height="1.35" fill="#f4f28e"/><rect x="604.2" y="316.7" width="1.35" height="1.35" fill="#f4f28e"/><rect x="665.5" y="329.0" width="1.35" height="1.35" fill="#f4f28e"/><rect x="628.2" y="309.3" width="1.35" height="1.35" fill="#f4f28e"/><rect x="622.6" y="317.2" width="1.35" height="1.35" fill="#f4f28e"/><rect x="663.1" y="304.5" width="1.35" height="1.35" fill="#f4f28e"/><rect x="631.6" y="328.8" width="1.35" height="1.35" fill="#f4f28e"/><rect x="690.1" y="314.5" width="1.35" height="1.35" fill="#f4f28e"/><rect x="664.4" y="310.7" width="1.35" height="1.35" fill="#f4f28e"/><rect x="657.3" y="322.3" width="1.35" height="1.35" fill="#f4f28e"/><rect x="614.6" y="308.1" width="1.35" height="1.35" fill="#f4f28e"/><rect x="678.0" y="305.8" width="1.35" height="1.35" fill="#f4f28e"/><rect x="644.7" y="322.1" width="1.35" height="1.35" fill="#f4f28e"/><rect x="628.8" y="312.4" width="1.35" height="1.35" fill="#f4f28e"/><rect x="621.4" y="316.3" width="1.35" height="1.35" fill="#f4f28e"/><rect x="663.2" y="304.6" width="1.35" height="1.35" fill="#f4f28e"/><rect x="632.0" y="328.7" width="1.35" height="1.35" fill="#f4f28e"/><rect x="690.3" y="313.4" width="1.35" height="1.35" fill="#f4f28e"/><rect x="665.1" y="311.3" width="1.35" height="1.35" fill="#f4f28e"/><rect x="659.6" y="321.5" width="1.35" height="1.35" fill="#f4f28e"/><rect x="610.7" y="305.7" width="1.35" height="1.35" fill="#f4f28e"/><rect x="681.3" y="316.4" width="1.35" height="1.35" fill="#f4f28e"/><rect x="670.2" y="312.6" width="1.35" height="1.35" fill="#f4f28e"/><rect x="660.9" y="320.3" width="1.35" height="1.35" fill="#f4f28e"/><rect x="606.5" y="305.0" width="1.35" height="1.35" fill="#f4f28e"/><rect x="670.5" y="324.8" width="1.35" height="1.35" fill="#f4f28e"/><rect x="610.9" y="302.9" width="1.35" height="1.35" fill="#f4f28e"/><rect x="676.6" y="320.5" width="1.35" height="1.35" fill="#f4f28e"/><rect x="623.2" y="319.6" width="1.35" height="1.35" fill="#f4f28e"/><rect x="674.0" y="302.7" width="1.35" height="1.35" fill="#f4f28e"/><rect x="634.2" y="325.2" width="1.35" height="1.35" fill="#f4f28e"/><rect x="677.4" y="301.3" width="1.35" height="1.35" fill="#f4f28e"/><rect x="636.5" y="323.4" width="1.35" height="1.35" fill="#f4f28e"/><rect x="659.0" y="304.2" width="1.35" height="1.35" fill="#f4f28e"/><rect x="631.9" y="329.5" width="1.35" height="1.35" fill="#f4f28e"/><rect x="689.8" y="316.7" width="1.35" height="1.35" fill="#f4f28e"/><rect x="657.0" y="310.8" width="1.35" height="1.35" fill="#f4f28e"/><rect x="671.6" y="317.3" width="1.35" height="1.35" fill="#f4f28e"/><rect x="669.0" y="308.7" width="1.35" height="1.35" fill="#f4f28e"/><rect x="645.8" y="324.5" width="1.35" height="1.35" fill="#f4f28e"/><rect x="640.9" y="309.3" width="1.35" height="1.35" fill="#f4f28e"/><rect x="629.9" y="317.1" width="1.35" height="1.35" fill="#f4f28e"/><rect x="635.6" y="312.7" width="1.35" height="1.35" fill="#f4f28e"/><rect x="611.6" y="314.4" width="1.35" height="1.35" fill="#f4f28e"/><rect x="684.8" y="312.8" width="1.35" height="1.35" fill="#f4f28e"/><rect x="664.7" y="315.6" width="1.35" height="1.35" fill="#f4f28e"/><rect x="669.2" y="308.2" width="1.35" height="1.35" fill="#f4f28e"/><rect x="644.1" y="324.9" width="1.35" height="1.35" fill="#f4f28e"/><rect x="648.1" y="307.1" width="1.35" height="1.35" fill="#f4f28e"/><rect x="670.1" y="319.3" width="1.35" height="1.35" fill="#f4f28e"/><rect x="620.6" y="319.7" width="1.35" height="1.35" fill="#f4f28e"/><rect x="681.2" y="304.2" width="1.35" height="1.35" fill="#f4f28e"/><rect x="646.1" y="320.4" width="1.35" height="1.35" fill="#f4f28e"/><rect x="619.7" y="312.5" width="1.35" height="1.35" fill="#f4f28e"/><rect x="655.9" y="307.2" width="1.35" height="1.35" fill="#f4f28e"/><rect x="651.2" y="325.1" width="1.35" height="1.35" fill="#f4f28e"/><rect x="632.3" y="310.9" width="1.35" height="1.35" fill="#f4f28e"/><rect x="614.1" y="316.3" width="1.35" height="1.35" fill="#f4f28e"/><rect x="684.9" y="309.5" width="1.35" height="1.35" fill="#f4f28e"/><rect x="658.8" y="317.1" width="1.35" height="1.35" fill="#f4f28e"/><rect x="604.9" y="314.4" width="1.35" height="1.35" fill="#f4f28e"/><rect x="670.5" y="326.7" width="1.35" height="1.35" fill="#f4f28e"/><rect x="616.5" y="305.3" width="1.35" height="1.35" fill="#f4f28e"/><rect x="678.0" y="306.6" width="1.35" height="1.35" fill="#f4f28e"/><rect x="646.1" y="321.9" width="1.35" height="1.35" fill="#f4f28e"/><rect x="625.3" y="312.6" width="1.35" height="1.35" fill="#f4f28e"/><rect x="631.4" y="314.8" width="1.35" height="1.35" fill="#f4f28e"/><rect x="622.1" y="315.5" width="1.35" height="1.35" fill="#f4f28e"/><rect x="656.2" y="306.6" width="1.35" height="1.35" fill="#f4f28e"/><rect x="647.3" y="326.2" width="1.35" height="1.35" fill="#f4f28e"/><rect x="648.7" y="306.6" width="1.35" height="1.35" fill="#f4f28e"/><rect x="664.9" y="321.6" width="1.35" height="1.35" fill="#f4f28e"/><rect x="606.2" y="304.1" width="1.35" height="1.35" fill="#f4f28e"/><rect x="667.6" y="325.8" width="1.35" height="1.35" fill="#f4f28e"/><rect x="615.9" y="305.8" width="1.35" height="1.35" fill="#f4f28e"/><rect x="678.1" y="306.5" width="1.35" height="1.35" fill="#f4f28e"/><rect x="645.9" y="321.9" width="1.35" height="1.35" fill="#f4f28e"/><rect x="625.7" y="312.6" width="1.35" height="1.35" fill="#f4f28e"/><rect x="630.3" y="315.1" width="1.35" height="1.35" fill="#f4f28e"/><rect x="625.6" y="315.2" width="1.35" height="1.35" fill="#f4f28e"/><rect x="640.4" y="311.8" width="1.35" height="1.35" fill="#f4f28e"/><rect x="608.3" y="314.6" width="1.35" height="1.35" fill="#f4f28e"/><rect x="680.5" y="320.9" width="1.35" height="1.35" fill="#f4f28e"/><rect x="622.6" y="319.8" width="1.35" height="1.35" fill="#f4f28e"/><rect x="677.0" y="302.9" width="1.35" height="1.35" fill="#f4f28e"/><rect x="638.5" y="323.3" width="1.35" height="1.35" fill="#f4f28e"/><rect x="652.5" y="306.1" width="1.35" height="1.35" fill="#f4f28e"/><rect x="652.1" y="325.3" width="1.35" height="1.35" fill="#f4f28e"/><rect x="631.6" y="310.9" width="1.35" height="1.35" fill="#f4f28e"/><rect x="614.9" y="316.5" width="1.35" height="1.35" fill="#f4f28e"/><rect x="684.1" y="307.9" width="1.35" height="1.35" fill="#f4f28e"/><rect x="655.4" y="318.0" width="1.35" height="1.35" fill="#f4f28e"/><rect x="605.6" y="307.0" width="1.35" height="1.35" fill="#f4f28e"/><rect x="671.1" y="324.9" width="1.35" height="1.35" fill="#f4f28e"/><rect x="611.1" y="302.9" width="1.35" height="1.35" fill="#f4f28e"/><rect x="676.6" y="320.5" width="1.35" height="1.35" fill="#f4f28e"/><rect x="624.3" y="319.4" width="1.35" height="1.35" fill="#f4f28e"/><rect x="669.6" y="302.9" width="1.35" height="1.35" fill="#f4f28e"/><rect x="630.0" y="327.3" width="1.35" height="1.35" fill="#f4f28e"/><rect x="689.7" y="311.2" width="1.35" height="1.35" fill="#f4f28e"/><rect x="664.5" y="313.1" width="1.35" height="1.35" fill="#f4f28e"/><rect x="670.1" y="317.2" width="1.35" height="1.35" fill="#f4f28e"/><rect x="666.3" y="308.4" width="1.35" height="1.35" fill="#f4f28e"/><rect x="645.1" y="325.2" width="1.35" height="1.35" fill="#f4f28e"/><rect x="647.7" y="307.1" width="1.35" height="1.35" fill="#f4f28e"/><rect x="671.3" y="318.7" width="1.35" height="1.35" fill="#f4f28e"/><rect x="643.3" y="314.0" width="1.35" height="1.35" fill="#f4f28e"/><rect x="607.4" y="311.3" width="1.35" height="1.35" fill="#f4f28e"/><rect x="679.1" y="321.1" width="1.35" height="1.35" fill="#f4f28e"/><rect x="617.0" y="320.2" width="1.35" height="1.35" fill="#f4f28e"/><rect x="686.6" y="311.0" width="1.35" height="1.35" fill="#f4f28e"/><rect x="662.9" y="315.4" width="1.35" height="1.35" fill="#f4f28e"/><rect x="663.5" y="308.2" width="1.35" height="1.35" fill="#f4f28e"/><rect x="646.2" y="325.4" width="1.35" height="1.35" fill="#f4f28e"/><rect x="646.6" y="307.4" width="1.35" height="1.35" fill="#f4f28e"/><rect x="675.1" y="315.7" width="1.35" height="1.35" fill="#f4f28e"/><rect x="670.6" y="314.7" width="1.35" height="1.35" fill="#f4f28e"/><rect x="670.1" y="316.2" width="1.35" height="1.35" fill="#f4f28e"/><rect x="673.0" y="311.0" width="1.35" height="1.35" fill="#f4f28e"/><rect x="653.9" y="321.8" width="1.35" height="1.35" fill="#f4f28e"/><rect x="615.9" y="309.6" width="1.35" height="1.35" fill="#f4f28e"/><rect x="671.9" y="304.5" width="1.35" height="1.35" fill="#f4f28e"/><rect x="635.7" y="325.7" width="1.35" height="1.35" fill="#f4f28e"/><rect x="677.6" y="301.2" width="1.35" height="1.35" fill="#f4f28e"/><rect x="636.5" y="323.3" width="1.35" height="1.35" fill="#f4f28e"/><rect x="658.5" y="304.3" width="1.35" height="1.35" fill="#f4f28e"/><rect x="633.0" y="329.4" width="1.35" height="1.35" fill="#f4f28e"/><rect x="690.4" y="314.6" width="1.35" height="1.35" fill="#f4f28e"/><rect x="663.6" y="310.5" width="1.35" height="1.35" fill="#f4f28e"/><rect x="657.7" y="322.3" width="1.35" height="1.35" fill="#f4f28e"/><rect x="614.1" y="307.8" width="1.35" height="1.35" fill="#f4f28e"/><rect x="679.5" y="306.7" width="1.35" height="1.35" fill="#f4f28e"/><rect x="647.9" y="321.0" width="1.35" height="1.35" fill="#f4f28e"/><rect x="619.5" y="312.1" width="1.35" height="1.35" fill="#f4f28e"/><rect x="656.2" y="307.1" width="1.35" height="1.35" fill="#f4f28e"/><rect x="650.6" y="325.3" width="1.35" height="1.35" fill="#f4f28e"/><rect x="634.5" y="310.5" width="1.35" height="1.35" fill="#f4f28e"/><rect x="612.3" y="316.3" width="1.35" height="1.35" fill="#f4f28e"/><rect x="685.3" y="313.7" width="1.35" height="1.35" fill="#f4f28e"/><rect x="666.5" y="314.5" width="1.35" height="1.35" fill="#f4f28e"/><rect x="673.0" y="314.3" width="1.35" height="1.35" fill="#f4f28e"/><rect x="666.7" y="317.7" width="1.35" height="1.35" fill="#f4f28e"/><rect x="638.0" y="315.6" width="1.35" height="1.35" fill="#f4f28e"/><rect x="614.5" y="313.7" width="1.35" height="1.35" fill="#f4f28e"/><rect x="680.8" y="305.8" width="1.35" height="1.35" fill="#f4f28e"/><rect x="648.0" y="320.4" width="1.35" height="1.35" fill="#f4f28e"/><rect x="617.6" y="311.7" width="1.35" height="1.35" fill="#f4f28e"/><rect x="665.0" y="304.9" width="1.35" height="1.35" fill="#f4f28e"/><rect x="633.1" y="328.1" width="1.35" height="1.35" fill="#f4f28e"/><rect x="689.8" y="309.5" width="1.35" height="1.35" fill="#f4f28e"/><rect x="662.6" y="313.8" width="1.35" height="1.35" fill="#f4f28e"/><rect x="674.4" y="312.4" width="1.35" height="1.35" fill="#f4f28e"/><rect x="659.0" y="320.2" width="1.35" height="1.35" fill="#f4f28e"/><rect x="607.8" y="305.4" width="1.35" height="1.35" fill="#f4f28e"/><rect x="675.0" y="322.4" width="1.35" height="1.35" fill="#f4f28e"/><rect x="601.4" y="309.0" width="1.35" height="1.35" fill="#f4f28e"/><rect x="656.3" y="330.7" width="1.35" height="1.35" fill="#f4f28e"/><rect x="659.1" y="302.3" width="1.35" height="1.35" fill="#f4f28e"/><rect x="624.9" y="330.8" width="1.35" height="1.35" fill="#f4f28e"/><rect x="678.8" y="327.9" width="1.35" height="1.35" fill="#f4f28e"/><rect x="615.5" y="302.6" width="1.35" height="1.35" fill="#f4f28e"/><rect x="680.7" y="314.7" width="1.35" height="1.35" fill="#f4f28e"/><rect x="667.2" y="315.7" width="1.35" height="1.35" fill="#f4f28e"/><rect x="672.8" y="310.0" width="1.35" height="1.35" fill="#f4f28e"/><rect x="650.3" y="322.7" width="1.35" height="1.35" fill="#f4f28e"/><rect x="622.5" y="311.9" width="1.35" height="1.35" fill="#f4f28e"/><rect x="641.0" y="312.2" width="1.35" height="1.35" fill="#f4f28e"/><rect x="607.8" y="313.9" width="1.35" height="1.35" fill="#f4f28e"/><rect x="679.6" y="321.4" width="1.35" height="1.35" fill="#f4f28e"/><rect x="612.7" y="319.9" width="1.35" height="1.35" fill="#f4f28e"/><rect x="683.8" y="319.3" width="1.35" height="1.35" fill="#f4f28e"/><rect x="650.5" y="312.1" width="1.35" height="1.35" fill="#f4f28e"/><rect x="638.9" y="314.8" width="1.35" height="1.35" fill="#f4f28e"/><rect x="611.9" y="312.9" width="1.35" height="1.35" fill="#f4f28e"/><rect x="684.2" y="310.7" width="1.35" height="1.35" fill="#f4f28e"/><rect x="660.2" y="317.1" width="1.35" height="1.35" fill="#f4f28e"/><rect x="608.2" y="317.3" width="1.35" height="1.35" fill="#f4f28e"/><rect x="677.6" y="323.8" width="1.35" height="1.35" fill="#f4f28e"/><rect x="602.6" y="303.7" width="1.35" height="1.35" fill="#f4f28e"/><rect x="653.7" y="330.7" width="1.35" height="1.35" fill="#f4f28e"/><rect x="666.1" y="300.6" width="1.35" height="1.35" fill="#f4f28e"/><rect x="622.0" y="329.3" width="1.35" height="1.35" fill="#f4f28e"/><rect x="678.9" y="327.2" width="1.35" height="1.35" fill="#f4f28e"/><rect x="613.3" y="301.7" width="1.35" height="1.35" fill="#f4f28e"/><rect x="676.7" y="319.8" width="1.35" height="1.35" fill="#f4f28e"/><rect x="639.8" y="315.3" width="1.35" height="1.35" fill="#f4f28e"/><rect x="612.1" y="312.6" width="1.35" height="1.35" fill="#f4f28e"/><rect x="683.9" y="310.0" width="1.35" height="1.35" fill="#f4f28e"/><rect x="658.6" y="317.6" width="1.35" height="1.35" fill="#f4f28e"/><rect x="603.6" y="311.5" width="1.35" height="1.35" fill="#f4f28e"/><rect x="666.4" y="327.7" width="1.35" height="1.35" fill="#f4f28e"/><rect x="622.4" y="308.5" width="1.35" height="1.35" fill="#f4f28e"/><rect x="642.6" y="312.2" width="1.35" height="1.35" fill="#f4f28e"/><rect x="607.6" y="314.5" width="1.35" height="1.35" fill="#f4f28e"/><rect x="678.8" y="322.2" width="1.35" height="1.35" fill="#f4f28e"/><rect x="603.3" y="314.9" width="1.35" height="1.35" fill="#f4f28e"/><rect x="663.9" y="329.3" width="1.35" height="1.35" fill="#f4f28e"/><rect x="631.6" y="309.3" width="1.35" height="1.35" fill="#f4f28e"/><rect x="617.6" y="317.6" width="1.35" height="1.35" fill="#f4f28e"/><rect x="681.5" y="305.0" width="1.35" height="1.35" fill="#f4f28e"/><rect x="647.9" y="320.1" width="1.35" height="1.35" fill="#f4f28e"/><rect x="616.7" y="311.5" width="1.35" height="1.35" fill="#f4f28e"/><rect x="669.3" y="304.4" width="1.35" height="1.35" fill="#f4f28e"/><rect x="633.2" y="327.0" width="1.35" height="1.35" fill="#f4f28e"/><rect x="687.4" y="305.5" width="1.35" height="1.35" fill="#f4f28e"/><rect x="655.8" y="316.2" width="1.35" height="1.35" fill="#f4f28e"/><rect x="604.8" y="313.7" width="1.35" height="1.35" fill="#f4f28e"/><rect x="670.6" y="326.5" width="1.35" height="1.35" fill="#f4f28e"/><rect x="615.9" y="305.0" width="1.35" height="1.35" fill="#f4f28e"/><rect x="679.7" y="307.8" width="1.35" height="1.35" fill="#f4f28e"/><rect x="650.2" y="320.6" width="1.35" height="1.35" fill="#f4f28e"/><rect x="616.1" y="310.7" width="1.35" height="1.35" fill="#f4f28e"/><rect x="671.4" y="304.4" width="1.35" height="1.35" fill="#f4f28e"/><rect x="634.8" y="326.0" width="1.35" height="1.35" fill="#f4f28e"/><rect x="681.2" y="301.8" width="1.35" height="1.35" fill="#f4f28e"/><rect x="642.8" y="320.8" width="1.35" height="1.35" fill="#f4f28e"/><rect x="626.1" y="313.1" width="1.35" height="1.35" fill="#f4f28e"/><rect x="630.1" y="315.0" width="1.35" height="1.35" fill="#f4f28e"/><rect x="625.7" y="315.2" width="1.35" height="1.35" fill="#f4f28e"/><rect x="639.7" y="312.0" width="1.35" height="1.35" fill="#f4f28e"/><rect x="608.3" y="314.1" width="1.35" height="1.35" fill="#f4f28e"/><rect x="680.8" y="320.4" width="1.35" height="1.35" fill="#f4f28e"/><rect x="632.5" y="317.6" width="1.35" height="1.35" fill="#f4f28e"/><rect x="631.4" y="313.6" width="1.35" height="1.35" fill="#f4f28e"/><rect x="618.6" y="315.8" width="1.35" height="1.35" fill="#f4f28e"/><rect x="672.5" y="303.5" width="1.35" height="1.35" fill="#f4f28e"/><rect x="634.0" y="325.8" width="1.35" height="1.35" fill="#f4f28e"/><rect x="681.4" y="302.0" width="1.35" height="1.35" fill="#f4f28e"/><rect x="643.2" y="320.7" width="1.35" height="1.35" fill="#f4f28e"/><rect x="624.6" y="313.1" width="1.35" height="1.35" fill="#f4f28e"/><rect x="635.5" y="313.7" width="1.35" height="1.35" fill="#f4f28e"/><rect x="613.1" y="314.4" width="1.35" height="1.35" fill="#f4f28e"/><rect x="684.1" y="309.1" width="1.35" height="1.35" fill="#f4f28e"/><rect x="657.3" y="317.7" width="1.35" height="1.35" fill="#f4f28e"/><rect x="603.8" y="308.8" width="1.35" height="1.35" fill="#f4f28e"/><rect x="666.2" y="327.3" width="1.35" height="1.35" fill="#f4f28e"/><rect x="621.1" y="308.3" width="1.35" height="1.35" fill="#f4f28e"/><rect x="648.7" y="310.1" width="1.35" height="1.35" fill="#f4f28e"/><rect x="668.4" y="307.3" width="1.35" height="1.35" fill="#f4f28e"/><rect x="640.9" y="325.7" width="1.35" height="1.35" fill="#f4f28e"/><rect x="664.2" y="302.3" width="1.35" height="1.35" fill="#f4f28e"/><rect x="625.0" y="329.6" width="1.35" height="1.35" fill="#f4f28e"/><rect x="682.8" y="325.0" width="1.35" height="1.35" fill="#f4f28e"/><rect x="604.4" y="301.1" width="1.35" height="1.35" fill="#f4f28e"/><rect x="652.7" y="330.5" width="1.35" height="1.35" fill="#f4f28e"/><rect x="667.9" y="300.3" width="1.35" height="1.35" fill="#f4f28e"/><rect x="622.8" y="328.7" width="1.35" height="1.35" fill="#f4f28e"/><rect x="681.9" y="325.1" width="1.35" height="1.35" fill="#f4f28e"/><rect x="605.1" y="300.9" width="1.35" height="1.35" fill="#f4f28e"/><rect x="654.3" y="329.9" width="1.35" height="1.35" fill="#f4f28e"/><rect x="658.2" y="302.8" width="1.35" height="1.35" fill="#f4f28e"/><rect x="626.9" y="330.6" width="1.35" height="1.35" fill="#f4f28e"/><rect x="682.2" y="325.9" width="1.35" height="1.35" fill="#f4f28e"/><rect x="607.9" y="300.1" width="1.35" height="1.35" fill="#f4f28e"/><rect x="660.0" y="327.8" width="1.35" height="1.35" fill="#f4f28e"/><rect x="630.4" y="310.0" width="1.35" height="1.35" fill="#f4f28e"/><rect x="617.4" y="317.2" width="1.35" height="1.35" fill="#f4f28e"/><rect x="680.9" y="304.8" width="1.35" height="1.35" fill="#f4f28e"/><rect x="646.6" y="320.6" width="1.35" height="1.35" fill="#f4f28e"/><rect x="619.5" y="312.3" width="1.35" height="1.35" fill="#f4f28e"/><rect x="656.9" y="306.9" width="1.35" height="1.35" fill="#f4f28e"/><rect x="647.8" y="325.9" width="1.35" height="1.35" fill="#f4f28e"/><rect x="645.9" y="307.5" width="1.35" height="1.35" fill="#f4f28e"/><rect x="676.2" y="314.2" width="1.35" height="1.35" fill="#f4f28e"/><rect x="665.4" y="317.7" width="1.35" height="1.35" fill="#f4f28e"/><rect x="629.3" y="318.0" width="1.35" height="1.35" fill="#f4f28e"/><rect x="642.9" y="310.4" width="1.35" height="1.35" fill="#f4f28e"/><rect x="621.1" y="318.6" width="1.35" height="1.35" fill="#f4f28e"/><rect x="675.9" y="303.0" width="1.35" height="1.35" fill="#f4f28e"/><rect x="637.2" y="324.0" width="1.35" height="1.35" fill="#f4f28e"/><rect x="661.2" y="303.4" width="1.35" height="1.35" fill="#f4f28e"/><rect x="628.3" y="329.8" width="1.35" height="1.35" fill="#f4f28e"/><rect x="686.2" y="322.3" width="1.35" height="1.35" fill="#f4f28e"/><rect x="602.5" y="314.8" width="1.35" height="1.35" fill="#f4f28e"/><rect x="660.8" y="330.3" width="1.35" height="1.35" fill="#f4f28e"/><rect x="643.7" y="306.8" width="1.35" height="1.35" fill="#f4f28e"/><rect x="676.9" y="313.3" width="1.35" height="1.35" fill="#f4f28e"/><rect x="662.0" y="318.7" width="1.35" height="1.35" fill="#f4f28e"/><rect x="603.0" y="311.0" width="1.35" height="1.35" fill="#f4f28e"/><rect x="664.3" y="328.4" width="1.35" height="1.35" fill="#f4f28e"/><rect x="627.2" y="309.5" width="1.35" height="1.35" fill="#f4f28e"/><rect x="624.2" y="317.0" width="1.35" height="1.35" fill="#f4f28e"/><rect x="655.2" y="306.7" width="1.35" height="1.35" fill="#f4f28e"/><rect x="649.7" y="325.6" width="1.35" height="1.35" fill="#f4f28e"/><rect x="639.0" y="309.4" width="1.35" height="1.35" fill="#f4f28e"/><rect x="620.2" y="318.5" width="1.35" height="1.35" fill="#f4f28e"/><rect x="677.7" y="303.4" width="1.35" height="1.35" fill="#f4f28e"/><rect x="640.2" y="322.8" width="1.35" height="1.35" fill="#f4f28e"/><rect x="643.5" y="309.0" width="1.35" height="1.35" fill="#f4f28e"/><rect x="653.4" y="309.9" width="1.35" height="1.35" fill="#f4f28e"/><rect x="673.8" y="316.0" width="1.35" height="1.35" fill="#f4f28e"/><rect x="671.9" y="313.6" width="1.35" height="1.35" fill="#f4f28e"/><rect x="664.6" y="318.8" width="1.35" height="1.35" fill="#f4f28e"/><rect x="605.9" y="316.1" width="1.35" height="1.35" fill="#f4f28e"/><rect x="672.3" y="326.3" width="1.35" height="1.35" fill="#f4f28e"/><rect x="614.2" y="303.8" width="1.35" height="1.35" fill="#f4f28e"/><rect x="681.5" y="313.4" width="1.35" height="1.35" fill="#f4f28e"/><rect x="664.2" y="316.9" width="1.35" height="1.35" fill="#f4f28e"/><rect x="640.0" y="314.8" width="1.35" height="1.35" fill="#f4f28e"/><rect x="611.1" y="312.4" width="1.35" height="1.35" fill="#f4f28e"/><rect x="684.3" y="312.5" width="1.35" height="1.35" fill="#f4f28e"/><rect x="663.7" y="316.1" width="1.35" height="1.35" fill="#f4f28e"/><rect x="654.9" y="310.1" width="1.35" height="1.35" fill="#f4f28e"/><rect x="671.8" y="317.4" width="1.35" height="1.35" fill="#f4f28e"/><rect x="667.9" y="308.6" width="1.35" height="1.35" fill="#f4f28e"/><rect x="645.4" y="324.8" width="1.35" height="1.35" fill="#f4f28e"/><rect x="644.0" y="308.3" width="1.35" height="1.35" fill="#f4f28e"/><rect x="669.4" y="307.1" width="1.35" height="1.35" fill="#f4f28e"/><rect x="640.5" y="325.6" width="1.35" height="1.35" fill="#f4f28e"/><rect x="664.1" y="302.3" width="1.35" height="1.35" fill="#f4f28e"/><rect x="625.2" y="329.6" width="1.35" height="1.35" fill="#f4f28e"/><rect x="683.0" y="324.9" width="1.35" height="1.35" fill="#f4f28e"/><rect x="603.9" y="301.3" width="1.35" height="1.35" fill="#f4f28e"/><rect x="651.9" y="330.8" width="1.35" height="1.35" fill="#f4f28e"/><rect x="672.6" y="299.6" width="1.35" height="1.35" fill="#f4f28e"/><rect x="626.6" y="326.7" width="1.35" height="1.35" fill="#f4f28e"/><rect x="689.2" y="314.1" width="1.35" height="1.35" fill="#f4f28e"/><rect x="666.2" y="311.4" width="1.35" height="1.35" fill="#f4f28e"/><rect x="659.1" y="321.5" width="1.35" height="1.35" fill="#f4f28e"/><rect x="611.2" y="306.1" width="1.35" height="1.35" fill="#f4f28e"/><rect x="682.1" y="314.8" width="1.35" height="1.35" fill="#f4f28e"/><rect x="667.6" y="315.0" width="1.35" height="1.35" fill="#f4f28e"/><rect x="673.4" y="313.0" width="1.35" height="1.35" fill="#f4f28e"/><rect x="661.3" y="319.7" width="1.35" height="1.35" fill="#f4f28e"/><rect x="604.2" y="306.3" width="1.35" height="1.35" fill="#f4f28e"/><rect x="665.0" y="327.3" width="1.35" height="1.35" fill="#f4f28e"/><rect x="622.1" y="308.8" width="1.35" height="1.35" fill="#f4f28e"/><rect x="642.9" y="312.0" width="1.35" height="1.35" fill="#f4f28e"/><rect x="608.1" y="315.2" width="1.35" height="1.35" fill="#f4f28e"/><rect x="679.5" y="321.9" width="1.35" height="1.35" fill="#f4f28e"/><rect x="606.5" y="317.7" width="1.35" height="1.35" fill="#f4f28e"/><rect x="672.0" y="326.8" width="1.35" height="1.35" fill="#f4f28e"/><rect x="615.7" y="304.5" width="1.35" height="1.35" fill="#f4f28e"/><rect x="680.7" y="309.1" width="1.35" height="1.35" fill="#f4f28e"/><rect x="653.6" y="319.7" width="1.35" height="1.35" fill="#f4f28e"/><rect x="611.2" y="307.7" width="1.35" height="1.35" fill="#f4f28e"/><rect x="682.9" y="312.9" width="1.35" height="1.35" fill="#f4f28e"/><rect x="663.7" y="316.6" width="1.35" height="1.35" fill="#f4f28e"/><rect x="643.3" y="313.7" width="1.35" height="1.35" fill="#f4f28e"/><rect x="607.1" y="311.5" width="1.35" height="1.35" fill="#f4f28e"/><rect x="678.5" y="321.6" width="1.35" height="1.35" fill="#f4f28e"/><rect x="608.1" y="318.5" width="1.35" height="1.35" fill="#f4f28e"/><rect x="675.9" y="325.1" width="1.35" height="1.35" fill="#f4f28e"/><rect x="608.1" y="301.4" width="1.35" height="1.35" fill="#f4f28e"/><rect x="665.4" y="326.1" width="1.35" height="1.35" fill="#f4f28e"/><rect x="618.2" y="307.4" width="1.35" height="1.35" fill="#f4f28e"/><rect x="665.5" y="305.5" width="1.35" height="1.35" fill="#f4f28e"/><rect x="634.9" y="327.6" width="1.35" height="1.35" fill="#f4f28e"/><rect x="687.7" y="305.4" width="1.35" height="1.35" fill="#f4f28e"/><rect x="655.9" y="316.1" width="1.35" height="1.35" fill="#f4f28e"/><rect x="605.6" y="314.9" width="1.35" height="1.35" fill="#f4f28e"/><rect x="672.6" y="325.9" width="1.35" height="1.35" fill="#f4f28e"/><rect x="612.9" y="303.1" width="1.35" height="1.35" fill="#f4f28e"/><rect x="679.8" y="317.1" width="1.35" height="1.35" fill="#f4f28e"/><rect x="670.7" y="311.2" width="1.35" height="1.35" fill="#f4f28e"/><rect x="654.9" y="322.0" width="1.35" height="1.35" fill="#f4f28e"/><rect x="615.6" y="309.3" width="1.35" height="1.35" fill="#f4f28e"/><rect x="673.4" y="304.6" width="1.35" height="1.35" fill="#f4f28e"/><rect x="637.3" y="325.0" width="1.35" height="1.35" fill="#f4f28e"/><rect x="668.6" y="301.7" width="1.35" height="1.35" fill="#f4f28e"/><rect x="626.4" y="328.1" width="1.35" height="1.35" fill="#f4f28e"/><rect x="687.6" y="319.4" width="1.35" height="1.35" fill="#f4f28e"/><rect x="637.0" y="316.6" width="1.35" height="1.35" fill="#f4f28e"/><rect x="618.5" y="314.4" width="1.35" height="1.35" fill="#f4f28e"/><rect x="668.0" y="304.1" width="1.35" height="1.35" fill="#f4f28e"/><rect x="631.6" y="327.6" width="1.35" height="1.35" fill="#f4f28e"/><rect x="689.7" y="309.9" width="1.35" height="1.35" fill="#f4f28e"/><rect x="663.1" y="313.7" width="1.35" height="1.35" fill="#f4f28e"/><rect x="674.1" y="313.4" width="1.35" height="1.35" fill="#f4f28e"/><rect x="662.8" y="319.1" width="1.35" height="1.35" fill="#f4f28e"/><rect x="602.9" y="310.5" width="1.35" height="1.35" fill="#f4f28e"/><rect x="663.5" y="328.6" width="1.35" height="1.35" fill="#f4f28e"/><rect x="629.1" y="309.6" width="1.35" height="1.35" fill="#f4f28e"/><rect x="620.1" y="317.3" width="1.35" height="1.35" fill="#f4f28e"/><rect x="673.2" y="303.2" width="1.35" height="1.35" fill="#f4f28e"/><rect x="634.2" y="325.5" width="1.35" height="1.35" fill="#f4f28e"/><rect x="679.5" y="301.6" width="1.35" height="1.35" fill="#f4f28e"/><rect x="639.8" y="322.0" width="1.35" height="1.35" fill="#f4f28e"/><rect x="639.3" y="310.4" width="1.35" height="1.35" fill="#f4f28e"/><rect x="612.3" y="317.4" width="1.35" height="1.35" fill="#f4f28e"/><rect x="685.1" y="315.5" width="1.35" height="1.35" fill="#f4f28e"/><rect x="668.7" y="312.3" width="1.35" height="1.35" fill="#f4f28e"/><rect x="660.9" y="320.6" width="1.35" height="1.35" fill="#f4f28e"/><rect x="607.1" y="304.9" width="1.35" height="1.35" fill="#f4f28e"/><rect x="672.1" y="324.0" width="1.35" height="1.35" fill="#f4f28e"/><rect x="607.2" y="302.3" width="1.35" height="1.35" fill="#f4f28e"/><rect x="665.6" y="326.2" width="1.35" height="1.35" fill="#f4f28e"/><rect x="618.4" y="307.5" width="1.35" height="1.35" fill="#f4f28e"/><rect x="664.3" y="305.7" width="1.35" height="1.35" fill="#f4f28e"/><rect x="635.7" y="327.7" width="1.35" height="1.35" fill="#f4f28e"/><rect x="687.2" y="304.7" width="1.35" height="1.35" fill="#f4f28e"/><rect x="654.5" y="316.5" width="1.35" height="1.35" fill="#f4f28e"/><rect x="604.1" y="310.4" width="1.35" height="1.35" fill="#f4f28e"/><rect x="668.2" y="326.9" width="1.35" height="1.35" fill="#f4f28e"/><rect x="618.3" y="306.8" width="1.35" height="1.35" fill="#f4f28e"/><rect x="667.4" y="305.3" width="1.35" height="1.35" fill="#f4f28e"/></g><rect x="583.50" y="298.00" width="131.00" height="42.00" fill="none" stroke="#d6d6d6" stroke-width="0.9"/><line x1="583.50" y1="340.00" x2="583.50" y2="336.80" stroke="#d6d6d6" stroke-width="0.90"/><line x1="596.60" y1="340.00" x2="596.60" y2="336.80" stroke="#d6d6d6" stroke-width="0.90"/><line x1="609.70" y1="340.00" x2="609.70" y2="336.80" stroke="#d6d6d6" stroke-width="0.90"/><line x1="622.80" y1="340.00" x2="622.80" y2="336.80" stroke="#d6d6d6" stroke-width="0.90"/><line x1="635.90" y1="340.00" x2="635.90" y2="336.80" stroke="#d6d6d6" stroke-width="0.90"/><line x1="649.00" y1="340.00" x2="649.00" y2="336.80" stroke="#d6d6d6" stroke-width="0.90"/><line x1="662.10" y1="340.00" x2="662.10" y2="336.80" stroke="#d6d6d6" stroke-width="0.90"/><line x1="675.20" y1="340.00" x2="675.20" y2="336.80" stroke="#d6d6d6" stroke-width="0.90"/><line x1="688.30" y1="340.00" x2="688.30" y2="336.80" stroke="#d6d6d6" stroke-width="0.90"/><line x1="701.40" y1="340.00" x2="701.40" y2="336.80" stroke="#d6d6d6" stroke-width="0.90"/><line x1="714.50" y1="340.00" x2="714.50" y2="336.80" stroke="#d6d6d6" stroke-width="0.90"/><text x="583.50" y="348.9" class="tk" text-anchor="middle">-5</text><text x="596.60" y="348.9" class="tk" text-anchor="middle">-4</text><text x="609.70" y="348.9" class="tk" text-anchor="middle">-3</text><text x="622.80" y="348.9" class="tk" text-anchor="middle">-2</text><text x="635.90" y="348.9" class="tk" text-anchor="middle">-1</text><text x="649.00" y="348.9" class="tk" text-anchor="middle">0</text><text x="662.10" y="348.9" class="tk" text-anchor="middle">1</text><text x="675.20" y="348.9" class="tk" text-anchor="middle">2</text><text x="688.30" y="348.9" class="tk" text-anchor="middle">3</text><text x="701.40" y="348.9" class="tk" text-anchor="middle">4</text><text x="714.50" y="348.9" class="tk" text-anchor="middle">5</text><line x1="583.50" y1="340.00" x2="586.50" y2="340.00" stroke="#d6d6d6" stroke-width="0.90"/><line x1="714.50" y1="340.00" x2="711.50" y2="340.00" stroke="#d6d6d6" stroke-width="0.70"/><text x="580.3" y="343.60" class="tk" text-anchor="end">-7</text><line x1="583.50" y1="319.00" x2="586.50" y2="319.00" stroke="#d6d6d6" stroke-width="0.90"/><line x1="714.50" y1="319.00" x2="711.50" y2="319.00" stroke="#d6d6d6" stroke-width="0.70"/><text x="580.3" y="322.60" class="tk" text-anchor="end">-2</text><line x1="583.50" y1="298.00" x2="586.50" y2="298.00" stroke="#d6d6d6" stroke-width="0.90"/><line x1="714.50" y1="298.00" x2="711.50" y2="298.00" stroke="#d6d6d6" stroke-width="0.70"/><text x="580.3" y="301.60" class="tk" text-anchor="end">2</text><text x="649.0" y="356.1" class="at" text-anchor="middle">x(t)</text><text x="570.3" y="322.9" class="at" text-anchor="middle" transform="rotate(-90 570.3 320.7)">v(t)</text></svg>
<div id="status"></div>

</body></html>
